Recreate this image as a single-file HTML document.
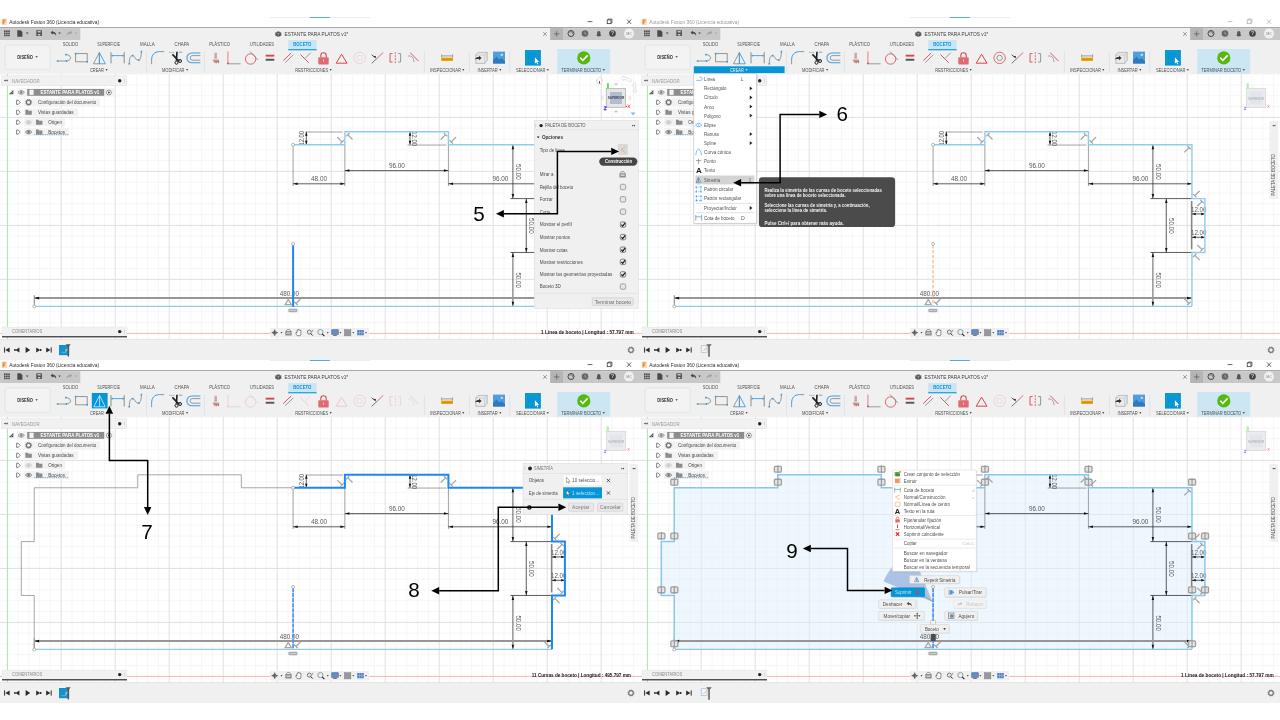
<!DOCTYPE html>
<html lang="es"><head><meta charset="utf-8"><title>Fusion 360 - Simetria</title>
<style>
html,body{margin:0;padding:0;background:#fff;}
body{width:1280px;height:720px;overflow:hidden;font-family:"Liberation Sans", sans-serif;}
svg{display:block;}
svg text{font-family:"Liberation Sans", sans-serif;}
svg{filter:blur(0.5px);will-change:transform;}
</style></head><body>
<svg width="1280" height="720" viewBox="0 0 1280 720">
<g id="all"><rect width="1280" height="720" fill="#ffffff"/><g transform="translate(0 0)"><rect x="0.00" y="17.00" width="640.00" height="10.50" fill="#ffffff"/><line x1="270.00" y1="17.50" x2="370.00" y2="17.50" stroke="#e4e8ee" stroke-width="0.8"/><line x1="309.80" y1="17.50" x2="329.90" y2="17.50" stroke="#5aa6ea" stroke-width="1.0"/><rect x="1.60" y="18.60" width="5.20" height="6.40" fill="#fbd9b5" rx="0.6"/><path d="M3.2 24.2V20h2.6M3.2 22.1h2" fill="none" stroke="#e8761c" stroke-width="1.0"/><text x="9.20" y="24.12" font-size="5.6" fill="#2b2b2b" textLength="89.80" lengthAdjust="spacingAndGlyphs">Autodesk Fusion 360 (Licencia educativa)</text><line x1="587.60" y1="21.60" x2="592.40" y2="21.60" stroke="#222" stroke-width="0.7"/><rect x="607.20" y="19.90" width="3.80" height="3.80" fill="none" stroke="#222" stroke-width="0.7"/><path d="M608.2 19.9V19h3.8v3.8h-1" fill="none" stroke="#222" stroke-width="0.6"/><path d="M627 19.5l4.2 4.4M631.2 19.5l-4.2 4.4" fill="none" stroke="#222" stroke-width="0.7"/><rect x="0.00" y="27.00" width="640.00" height="1.20" fill="#a9a9a9"/><rect x="0.00" y="28.00" width="640.00" height="46.00" fill="#f0f0f0"/><rect x="0.00" y="28.20" width="80.30" height="11.80" fill="#c8c8c8"/><rect x="550.30" y="28.20" width="89.70" height="11.80" fill="#c8c8c8"/><rect x="550.30" y="28.20" width="12.70" height="11.80" fill="#b4b4b4"/><rect x="4.00" y="30.40" width="1.60" height="1.60" fill="#4a4a4a"/><rect x="4.00" y="32.50" width="1.60" height="1.60" fill="#4a4a4a"/><rect x="4.00" y="34.60" width="1.60" height="1.60" fill="#4a4a4a"/><rect x="6.10" y="30.40" width="1.60" height="1.60" fill="#4a4a4a"/><rect x="6.10" y="32.50" width="1.60" height="1.60" fill="#4a4a4a"/><rect x="6.10" y="34.60" width="1.60" height="1.60" fill="#4a4a4a"/><rect x="8.20" y="30.40" width="1.60" height="1.60" fill="#4a4a4a"/><rect x="8.20" y="32.50" width="1.60" height="1.60" fill="#4a4a4a"/><rect x="8.20" y="34.60" width="1.60" height="1.60" fill="#4a4a4a"/><path d="M17.3 30.2h3.2l1.9 1.9v4.7h-5.1z" fill="#4a4a4a"/><path d="M25.90 32.58H28.50L27.20 34.27Z" fill="#4a4a4a"/><rect x="36.30" y="30.30" width="5.60" height="5.80" fill="#4a4a4a" rx="0.5"/><rect x="37.50" y="30.90" width="3.20" height="1.60" fill="#c8c8c8"/><rect x="37.80" y="33.90" width="2.60" height="1.60" fill="#c8c8c8"/><path d="M50.6 32.6l2.2-2v1.2c2.6 0 3.6 1.6 3.3 4.2c-.5-1.7-1.5-2.3-3.3-2.3v1.1z" fill="#4a4a4a"/><path d="M58.30 32.58H60.90L59.60 34.27Z" fill="#4a4a4a"/><path d="M72.3 32.6l-2.2-2v1.2c-2.6 0-3.6 1.6-3.3 4.2c.5-1.7 1.5-2.3 3.3-2.3v1.1z" fill="#a3a3a3"/><path d="M74.80 32.58H77.40L76.10 34.27Z" fill="#a3a3a3"/><path d="M275.3 32.4l3-1.2 3 1.2v3.2l-3 1.4-3-1.4z" fill="#555"/><path d="M275.3 32.4l3 1.2 3-1.2M278.3 33.6V37" fill="none" stroke="#ddd" stroke-width="0.4"/><text x="284.60" y="36.24" font-size="5.4" fill="#3c3c3c" textLength="63.60" lengthAdjust="spacingAndGlyphs">ESTANTE PARA PLATOS v1*</text><path d="M543.2 32.1l3.6 3.8M546.8 32.1l-3.6 3.8" fill="none" stroke="#666" stroke-width="0.6"/><path d="M554 33.9h5.4M556.7 31.2v5.4" fill="none" stroke="#6a6a6a" stroke-width="0.9"/><circle cx="571.00" cy="33.50" r="3.00" fill="none" stroke="#444" stroke-width="1.0"/><path d="M569.5 32.4a2 2 0 0 1 3.4 1.6" fill="none" stroke="#444" stroke-width="0.7"/><circle cx="585.00" cy="33.50" r="3.30" fill="#666"/><path d="M585 31.7v2l1.4.6" fill="none" stroke="#c8c8c8" stroke-width="0.6"/><path d="M596.2 36h5.2c-1-1-.9-2-.9-3.2a1.7 1.7 0 0 0-3.4 0c0 1.2.1 2.2-.9 3.2zM598 36.4h1.6v.6h-1.6z" fill="#555"/><circle cx="612.50" cy="33.50" r="3.30" fill="#444"/><text x="612.50" y="35.40" font-size="5" fill="#d8d8d8" font-weight="bold" text-anchor="middle">?</text><circle cx="629.00" cy="33.60" r="5.00" fill="#efefef"/><text x="629.00" y="35.00" font-size="3.6" fill="#888" text-anchor="middle">MC</text><text x="62.65" y="46.20" font-size="5.0" fill="#505050" textLength="15.50" lengthAdjust="spacingAndGlyphs">SOLIDO</text><text x="97.20" y="46.20" font-size="5.0" fill="#505050" textLength="22.80" lengthAdjust="spacingAndGlyphs">SUPERFICIE</text><text x="140.10" y="46.20" font-size="5.0" fill="#505050" textLength="14.60" lengthAdjust="spacingAndGlyphs">MALLA</text><text x="174.60" y="46.20" font-size="5.0" fill="#505050" textLength="14.60" lengthAdjust="spacingAndGlyphs">CHAPA</text><text x="209.20" y="46.20" font-size="5.0" fill="#505050" textLength="20.80" lengthAdjust="spacingAndGlyphs">PLÁSTICO</text><text x="249.90" y="46.20" font-size="5.0" fill="#505050" textLength="24.00" lengthAdjust="spacingAndGlyphs">UTILIDADES</text><rect x="288.20" y="40.20" width="28.40" height="9.20" fill="#cbe4f3"/><rect x="288.20" y="49.20" width="28.40" height="1.10" fill="#0696d7"/><text x="293.20" y="46.20" font-size="5.0" fill="#0696d7" font-weight="bold" textLength="18.20" lengthAdjust="spacingAndGlyphs">BOCETO</text><rect x="5.20" y="45.00" width="45.00" height="24.40" fill="#f3f3f3" stroke="#dcdcdc" stroke-width="0.6" rx="2"/><text x="17.30" y="58.57" font-size="5.2" fill="#333" font-weight="bold" textLength="15.70" lengthAdjust="spacingAndGlyphs">DISEÑO</text><path d="M35.40 56.24H37.80L36.60 57.80Z" fill="#333"/><path d="M58 61h8.6M65.6 54.6c2.6 0 4.9 1.3 4.9 3.2s-2 3.2-4.4 3.2" fill="none" stroke="#8c8c8c" stroke-width="0.9"/><rect x="56.80" y="60.20" width="1.60" height="1.60" fill="#3a9fe6"/><rect x="65.60" y="60.20" width="1.60" height="1.60" fill="#3a9fe6"/><rect x="65.00" y="53.80" width="1.60" height="1.60" fill="#3a9fe6"/><rect x="75.60" y="53.60" width="11.60" height="8.20" fill="none" stroke="#8c8c8c" stroke-width="0.9"/><rect x="74.80" y="52.80" width="1.60" height="1.60" fill="#3a9fe6"/><rect x="86.40" y="61.00" width="1.60" height="1.60" fill="#3a9fe6"/><path d="M99.4 52.6l-6 11.2h6z" fill="none" stroke="#8c8c8c" stroke-width="0.9"/><path d="M99.4 52.6l6 11.2h-6z" fill="none" stroke="#3a9fe6" stroke-width="0.9"/><path d="M111 52.2v11.2M124.2 52.2v11.2" fill="none" stroke="#8c8c8c" stroke-width="1.0"/><path d="M112 55.6h11.4" fill="none" stroke="#3a9fe6" stroke-width="0.9"/><rect x="111.40" y="54.90" width="1.50" height="1.50" fill="#3a9fe6"/><rect x="122.40" y="54.90" width="1.50" height="1.50" fill="#3a9fe6"/><path d="M129.3 63.6c0-6 1.2-8 3.4-8s2.6 4.6 5.4 4.6 3.2-5 3.3-8.6" fill="none" stroke="#8c8c8c" stroke-width="0.9"/><rect x="128.50" y="63.00" width="1.60" height="1.60" fill="#3a9fe6"/><rect x="131.80" y="54.80" width="1.60" height="1.60" fill="#3a9fe6"/><rect x="138.00" y="59.40" width="1.60" height="1.60" fill="#3a9fe6"/><rect x="140.60" y="50.80" width="1.60" height="1.60" fill="#3a9fe6"/><path d="M151.6 64.2v-4.4" fill="none" stroke="#8c8c8c" stroke-width="0.9"/><path d="M151.6 60c0-5 2.6-8.4 8-8.4" fill="none" stroke="#3a9fe6" stroke-width="1.0"/><path d="M159.6 51.6h4.6" fill="none" stroke="#8c8c8c" stroke-width="0.9"/><path d="M169.2 52.4h5" fill="none" stroke="#3a9fe6" stroke-width="0.8" stroke-dasharray="1.2 0.8"/><path d="M178.8 52.2h3.6" fill="none" stroke="#8c8c8c" stroke-width="0.8"/><path d="M177 51.8l-.6 9M172.4 54.4l6.8 7" fill="none" stroke="#1e1e1e" stroke-width="1.6"/><circle cx="176.50" cy="62.70" r="1.50" fill="none" stroke="#1e1e1e" stroke-width="1.0"/><circle cx="180.00" cy="61.00" r="1.50" fill="none" stroke="#1e1e1e" stroke-width="1.0"/><path d="M200.4 53h-8.6a4.9 4.9 0 0 0 0 9.8h8.6" fill="none" stroke="#3a9fe6" stroke-width="1.1"/><path d="M200.4 55.6h-8a2.3 2.3 0 0 0 0 4.6h8" fill="none" stroke="#8c8c8c" stroke-width="0.9"/><rect x="214.40" y="52.60" width="2.60" height="6.20" fill="#c9c9c9"/><path d="M214.6 54.2h2.2M214.6 56h2.2M214.6 57.6h2.2" fill="none" stroke="#d9464d" stroke-width="0.5"/><path d="M212.8 60.2h6.2" fill="none" stroke="#555" stroke-width="0.7"/><path d="M212.8 61.2h6.6l-.8 2.2-.9-1.6-.9 1.6-.9-1.6-.9 1.6-.9-1.6z" fill="#d9464d"/><path d="M227.9 51.6v12.4" fill="none" stroke="#e58f95" stroke-width="1.2"/><path d="M228 63.7h12.6" fill="none" stroke="#b4b4b4" stroke-width="1.5"/><rect x="227.10" y="62.60" width="1.60" height="1.60" fill="#d9464d"/><circle cx="250.60" cy="59.00" r="5.20" fill="none" stroke="#d9464d" stroke-width="0.8"/><path d="M250 51.4l8 8.6" fill="none" stroke="#8c8c8c" stroke-width="0.8"/><rect x="265.70" y="54.70" width="8.60" height="1.90" fill="#d9464d"/><rect x="265.70" y="58.80" width="8.60" height="1.90" fill="#555"/><path d="M283.2 60.6l8-7.6" fill="none" stroke="#d9464d" stroke-width="0.9"/><path d="M285.2 62.6l8-7.6" fill="none" stroke="#8c8c8c" stroke-width="0.9"/><path d="M300.4 54.4l8.4 8.4" fill="none" stroke="#d9464d" stroke-width="0.9"/><path d="M304.8 58.6l6-6" fill="none" stroke="#8c8c8c" stroke-width="0.9"/><path d="M320.8 57.2v-1.8a2.7 2.7 0 0 1 5.4 0v1.8" fill="none" stroke="#d9464d" stroke-width="1.1"/><rect x="318.30" y="57.20" width="10.40" height="7.40" fill="#df6a70" rx="0.8"/><rect x="323.10" y="59.40" width="0.80" height="2.40" fill="#f6d6d8"/><path d="M341.6 54.2l5.4 9h-10.8z" fill="none" stroke="#d9464d" stroke-width="1.0"/><circle cx="359.60" cy="57.90" r="5.70" fill="none" stroke="#f1c4c6" stroke-width="0.7"/><circle cx="359.60" cy="57.90" r="2.70" fill="none" stroke="#dedede" stroke-width="0.9"/><path d="M377.4 58l5.8-5.6" fill="none" stroke="#d9464d" stroke-width="0.8"/><path d="M371.6 63.4l5.8-5.4" fill="none" stroke="#555" stroke-width="0.8"/><path d="M371.6 54.8l3 2.4" fill="none" stroke="#222" stroke-width="0.7"/><path d="M373.4 55.8l2.6.4-.6 2.4z" fill="#222"/><path d="M392.6 53.6h-2.6v8.4h2.6" fill="none" stroke="#d9464d" stroke-width="0.9"/><path d="M398 53.6h2.6v8.4h-2.6" fill="none" stroke="#8c8c8c" stroke-width="0.9"/><path d="M395.3 52v12" fill="none" stroke="#d9464d" stroke-width="0.7" stroke-dasharray="2.2 0.8"/><path d="M410.2 52.6l8.2 8.4" fill="none" stroke="#d9464d" stroke-width="0.9"/><path d="M408.2 56c3.4-.4 5.6 1.6 5.8 6.2" fill="none" stroke="#8c8c8c" stroke-width="0.8"/><rect x="441.30" y="57.60" width="11.60" height="3.40" fill="#f0a30a"/><rect x="441.30" y="58.80" width="11.60" height="0.70" fill="#c97f00"/><path d="M441.6 54.4v3M452.6 54.4v3M442 55.9h10.2" fill="none" stroke="#666" stroke-width="0.6"/><path d="M478 52.4h9.2v8l-2.6 3h-8.8v-8.6z" fill="#e9e9e9" stroke="#9a9a9a" stroke-width="0.6"/><path d="M475.8 55h9v8.4M484.8 55l2.4-2.6" fill="none" stroke="#b5b5b5" stroke-width="0.5"/><path d="M475 59.2c1-1.8 2.4-2.2 4-2.2v-1.2l2.6 2.2-2.6 2.2v-1.2c-1.6 0-2.8.2-4 .2z" fill="#333"/><rect x="493.00" y="51.60" width="12.00" height="12.00" fill="#4d9fe0"/><path d="M493 63.6v-3.4l3.4-3.6 3 3 2-1.6 3.6 3.2v2.4z" fill="#2f79bb"/><circle cx="501.80" cy="54.80" r="1.10" fill="#fbe9a6"/><rect x="525.00" y="50.00" width="15.90" height="15.60" fill="#0696d7"/><rect x="526.60" y="51.60" width="10.60" height="9.40" fill="none" stroke="#38c17a" stroke-width="0.6" stroke-dasharray="0.9 0.9"/><path d="M534.9 57.2v6.4l1.5-1.3 1 2.2.9-.4-1-2.1h1.9z" fill="#fff"/><rect x="557.20" y="49.00" width="53.00" height="25.00" fill="#cde6f4"/><circle cx="583.80" cy="57.90" r="6.60" fill="#57b811"/><path d="M580.2 57.8l2.6 2.6 4.8-5" fill="none" stroke="#fff" stroke-width="1.6"/><text x="89.90" y="71.74" font-size="5.1" fill="#505050" textLength="14.00" lengthAdjust="spacingAndGlyphs">CREAR</text><path d="M105.50 69.30H107.70L106.60 70.73Z" fill="#222"/><text x="161.90" y="71.74" font-size="5.1" fill="#505050" textLength="22.60" lengthAdjust="spacingAndGlyphs">MODIFICAR</text><path d="M186.00 69.30H188.20L187.10 70.73Z" fill="#222"/><text x="295.30" y="71.74" font-size="5.1" fill="#505050" textLength="32.80" lengthAdjust="spacingAndGlyphs">RESTRICCIONES</text><path d="M329.60 69.30H331.80L330.70 70.73Z" fill="#222"/><text x="430.00" y="71.74" font-size="5.1" fill="#505050" textLength="30.90" lengthAdjust="spacingAndGlyphs">INSPECCIONAR</text><path d="M462.20 69.30H464.40L463.30 70.73Z" fill="#222"/><text x="477.50" y="71.74" font-size="5.1" fill="#505050" textLength="20.20" lengthAdjust="spacingAndGlyphs">INSERTAR</text><path d="M499.20 69.30H501.40L500.30 70.73Z" fill="#222"/><text x="516.00" y="71.74" font-size="5.1" fill="#505050" textLength="29.40" lengthAdjust="spacingAndGlyphs">SELECCIONAR</text><path d="M546.70 69.30H548.90L547.80 70.73Z" fill="#222"/><text x="561.30" y="71.74" font-size="5.1" fill="#505050" textLength="40.00" lengthAdjust="spacingAndGlyphs">TERMINAR BOCETO</text><path d="M602.70 69.30H604.90L603.80 70.73Z" fill="#222"/><line x1="146.50" y1="51.40" x2="146.50" y2="72.20" stroke="#dedede" stroke-width="0.7"/><line x1="204.40" y1="51.40" x2="204.40" y2="72.20" stroke="#dedede" stroke-width="0.7"/><line x1="424.40" y1="51.40" x2="424.40" y2="72.20" stroke="#dedede" stroke-width="0.7"/><line x1="469.40" y1="51.40" x2="469.40" y2="72.20" stroke="#dedede" stroke-width="0.7"/><line x1="509.80" y1="51.40" x2="509.80" y2="72.20" stroke="#dedede" stroke-width="0.7"/><g><rect x="0.00" y="74.00" width="640.00" height="265.50" fill="#ffffff"/><path d="M18.0 74V339.5M28.8 74V339.5M39.6 74V339.5M50.4 74V339.5M72.0 74V339.5M82.8 74V339.5M93.6 74V339.5M104.4 74V339.5M126.0 74V339.5M136.8 74V339.5M147.6 74V339.5M158.4 74V339.5M180.0 74V339.5M190.8 74V339.5M201.6 74V339.5M212.4 74V339.5M234.0 74V339.5M244.8 74V339.5M255.6 74V339.5M266.4 74V339.5M288.0 74V339.5M298.8 74V339.5M309.6 74V339.5M320.4 74V339.5M342.0 74V339.5M352.8 74V339.5M363.6 74V339.5M374.4 74V339.5M396.0 74V339.5M406.8 74V339.5M417.6 74V339.5M428.4 74V339.5M450.0 74V339.5M460.8 74V339.5M471.6 74V339.5M482.4 74V339.5M504.0 74V339.5M514.8 74V339.5M525.6 74V339.5M536.4 74V339.5M558.0 74V339.5M568.8 74V339.5M579.6 74V339.5M590.4 74V339.5M612.0 74V339.5M622.8 74V339.5M633.6 74V339.5M0 322.6H640M0 311.8H640M0 301.0H640M0 290.2H640M0 268.6H640M0 257.8H640M0 247.0H640M0 236.2H640M0 214.6H640M0 203.8H640M0 193.0H640M0 182.2H640M0 160.6H640M0 149.8H640M0 139.0H640M0 128.2H640M0 106.6H640M0 95.8H640M0 85.0H640M0 74.2H640" fill="none" stroke="#f5f5f5" stroke-width="0.9"/><path d="M61.2 74V339.5M115.2 74V339.5M169.2 74V339.5M223.2 74V339.5M277.2 74V339.5M331.2 74V339.5M385.2 74V339.5M439.2 74V339.5M493.2 74V339.5M547.2 74V339.5M601.2 74V339.5M0 279.4H640M0 225.4H640M0 171.4H640M0 117.4H640" fill="none" stroke="#e0e0e0" stroke-width="1.0"/><line x1="7.40" y1="74.00" x2="7.40" y2="339.50" stroke="#a8eca8" stroke-width="1.1"/><line x1="0.00" y1="333.40" x2="640.00" y2="333.40" stroke="#f6b4b4" stroke-width="1.0"/><rect x="1.60" y="75.80" width="125.20" height="9.90" fill="#f1f1f1" stroke="#e2e2e2" stroke-width="0.5"/><path d="M5.6 79.6v2l-1.6-1zM7.6 79.6v2l-1.6-1z" fill="#222"/><text x="12.00" y="82.54" font-size="5.1" fill="#9a9a9a" textLength="27.60" lengthAdjust="spacingAndGlyphs">NAVEGADOR</text><circle cx="119.70" cy="80.80" r="1.70" fill="#222"/><rect x="124.30" y="78.80" width="0.70" height="3.80" fill="#d0d0d0"/><rect x="17.00" y="88.20" width="98.20" height="8.40" fill="#f3f3f3"/><path d="M8.8 94.2h4.6v-4.4z" fill="#555"/><path d="M9.6 93.2l3.4-3.2M10.8 94l2.4-2.2" fill="none" stroke="#ddd" stroke-width="0.4"/><path d="M18.0 92.4q3.2-3.6 6.4 0q-3.2 3.6-6.4 0z" fill="none" stroke="#8a8a8a" stroke-width="0.9"/><circle cx="21.20" cy="92.40" r="1.35" fill="#8a8a8a"/><rect x="27.20" y="89.00" width="77.00" height="6.80" fill="#8c8c8c"/><rect x="29.40" y="89.70" width="4.20" height="5.20" fill="#f4f4f4" stroke="#d0d0d0" stroke-width="0.4" rx="0.6"/><text x="40.60" y="94.30" font-size="5.0" fill="#fff" font-weight="bold" textLength="58.60" lengthAdjust="spacingAndGlyphs">ESTANTE PARA PLATOS v1</text><circle cx="108.90" cy="92.50" r="2.50" fill="#fff" stroke="#555" stroke-width="0.6"/><circle cx="108.90" cy="92.50" r="0.90" fill="#333"/><rect x="24.20" y="98.40" width="75.80" height="7.80" fill="#f2f2f2"/><path d="M16.6 100.2v4.2l1.6 0l2-2.1l-2-2.1z" fill="none" stroke="#555" stroke-width="0.7"/><circle cx="28.60" cy="102.30" r="2.20" fill="none" stroke="#777" stroke-width="1.3"/><circle cx="28.60" cy="102.30" r="3.00" fill="none" stroke="#777" stroke-width="0.9" stroke-dasharray="1 1.36"/><text x="38.00" y="104.30" font-size="5.0" fill="#4a4a4a" textLength="58.20" lengthAdjust="spacingAndGlyphs">Configuración del documento</text><rect x="24.20" y="108.40" width="54.00" height="7.80" fill="#f2f2f2"/><path d="M16.6 110.2v4.2l1.6 0l2-2.1l-2-2.1z" fill="none" stroke="#555" stroke-width="0.7"/><path d="M25.4 114.8v-5h2.4l.7.9h3.3v4.1z" fill="#8a8a8a"/><line x1="28.50" y1="110.70" x2="28.50" y2="114.80" stroke="#a8a8a8" stroke-width="0.4"/><text x="38.00" y="114.30" font-size="5.0" fill="#4a4a4a" textLength="35.60" lengthAdjust="spacingAndGlyphs">Vistas guardadas</text><rect x="24.20" y="118.40" width="40.80" height="7.80" fill="#f2f2f2"/><path d="M16.6 120.2v4.2l1.6 0l2-2.1l-2-2.1z" fill="none" stroke="#555" stroke-width="0.7"/><path d="M25.4 122.3q3.2-3.6 6.4 0q-3.2 3.6-6.4 0z" fill="none" stroke="#c8c8c8" stroke-width="0.9"/><circle cx="28.60" cy="122.30" r="1.35" fill="#c8c8c8"/><path d="M36.0 124.8v-5h2.4l.7.9h3.3v4.1z" fill="#8a8a8a"/><line x1="39.10" y1="120.70" x2="39.10" y2="124.80" stroke="#a8a8a8" stroke-width="0.4"/><text x="48.20" y="124.30" font-size="5.0" fill="#4a4a4a" textLength="13.80" lengthAdjust="spacingAndGlyphs">Origen</text><rect x="24.20" y="128.20" width="44.60" height="7.80" fill="#f2f2f2"/><path d="M16.6 130.0v4.2l1.6 0l2-2.1l-2-2.1z" fill="none" stroke="#555" stroke-width="0.7"/><path d="M25.4 132.1q3.2-3.6 6.4 0q-3.2 3.6-6.4 0z" fill="none" stroke="#777" stroke-width="0.9"/><circle cx="28.60" cy="132.10" r="1.35" fill="#777"/><path d="M36.0 134.6v-5h2.4l.7.9h3.3v4.1z" fill="#8a8a8a"/><line x1="39.10" y1="130.50" x2="39.10" y2="134.60" stroke="#a8a8a8" stroke-width="0.4"/><text x="48.20" y="134.10" font-size="5.0" fill="#4a4a4a" textLength="16.80" lengthAdjust="spacingAndGlyphs">Bocetos</text><line x1="34.40" y1="134.60" x2="68.80" y2="134.60" stroke="#3c6cc8" stroke-width="0.7" stroke-dasharray="0.9 0.9"/><line x1="305.60" y1="132.02" x2="342.60" y2="132.02" stroke="#8a8a8a" stroke-width="0.8"/><line x1="306.30" y1="131.82" x2="306.30" y2="144.75" stroke="#1c1c1c" stroke-width="0.7"/><path d="M306.30 132.12l-1.25 3.60h2.50z" fill="#111"/><path d="M306.30 144.45l-1.25 -3.60h2.50z" fill="#111"/><text transform="translate(301.60 138.20) rotate(-90)" x="-7.30" y="2.45" font-size="6.8" fill="#555" textLength="14.60" lengthAdjust="spacingAndGlyphs">12.00</text><line x1="407.60" y1="145.05" x2="446.40" y2="145.05" stroke="#8a8a8a" stroke-width="0.8"/><line x1="410.00" y1="131.82" x2="410.00" y2="144.75" stroke="#1c1c1c" stroke-width="0.7"/><path d="M410.00 132.12l-1.25 3.60h2.50z" fill="#111"/><path d="M410.00 144.45l-1.25 -3.60h2.50z" fill="#111"/><text transform="translate(414.30 138.60) rotate(90)" x="-7.30" y="2.45" font-size="6.8" fill="#555" textLength="14.60" lengthAdjust="spacingAndGlyphs">12.00</text><line x1="293.10" y1="146.35" x2="293.10" y2="186.00" stroke="#8a8a8a" stroke-width="0.8"/><line x1="344.87" y1="144.75" x2="344.87" y2="186.00" stroke="#8a8a8a" stroke-width="0.8"/><line x1="293.10" y1="183.80" x2="344.87" y2="183.80" stroke="#1c1c1c" stroke-width="0.7"/><path d="M293.40 183.80l4.20 -1.25v2.50z" fill="#111"/><path d="M344.57 183.80l-4.20 -1.25v2.50z" fill="#111"/><text x="311.00" y="181.25" font-size="6.8" fill="#5a5a5a" textLength="16.00" lengthAdjust="spacingAndGlyphs">48.00</text><line x1="448.42" y1="144.75" x2="448.42" y2="186.00" stroke="#8a8a8a" stroke-width="0.8"/><line x1="344.87" y1="170.60" x2="448.42" y2="170.60" stroke="#1c1c1c" stroke-width="0.7"/><path d="M345.17 170.60l4.20 -1.25v2.50z" fill="#111"/><path d="M448.12 170.60l-4.20 -1.25v2.50z" fill="#111"/><text x="388.90" y="168.45" font-size="6.8" fill="#5a5a5a" textLength="16.00" lengthAdjust="spacingAndGlyphs">96.00</text><line x1="448.42" y1="183.80" x2="551.96" y2="183.80" stroke="#1c1c1c" stroke-width="0.7"/><path d="M448.72 183.80l4.20 -1.25v2.50z" fill="#111"/><path d="M551.66 183.80l-4.20 -1.25v2.50z" fill="#111"/><text x="492.40" y="181.25" font-size="6.8" fill="#5a5a5a" textLength="16.00" lengthAdjust="spacingAndGlyphs">96.00</text><line x1="512.90" y1="144.75" x2="512.90" y2="198.60" stroke="#1c1c1c" stroke-width="0.7"/><path d="M512.90 145.05l-1.25 4.20h2.50z" fill="#111"/><path d="M512.90 198.30l-1.25 -4.20h2.50z" fill="#111"/><text transform="translate(518.00 171.80) rotate(90)" x="-7.80" y="2.45" font-size="6.8" fill="#555" textLength="15.60" lengthAdjust="spacingAndGlyphs">50.00</text><line x1="526.30" y1="198.60" x2="526.30" y2="252.46" stroke="#1c1c1c" stroke-width="0.7"/><path d="M526.30 198.91l-1.25 4.20h2.50z" fill="#111"/><path d="M526.30 252.16l-1.25 -4.20h2.50z" fill="#111"/><text transform="translate(531.50 225.80) rotate(90)" x="-7.80" y="2.45" font-size="6.8" fill="#555" textLength="15.60" lengthAdjust="spacingAndGlyphs">50.00</text><line x1="512.90" y1="252.46" x2="512.90" y2="306.31" stroke="#1c1c1c" stroke-width="0.7"/><path d="M512.90 252.76l-1.25 4.20h2.50z" fill="#111"/><path d="M512.90 306.01l-1.25 -4.20h2.50z" fill="#111"/><text transform="translate(518.00 280.20) rotate(90)" x="-7.80" y="2.45" font-size="6.8" fill="#555" textLength="15.60" lengthAdjust="spacingAndGlyphs">50.00</text><line x1="510.40" y1="198.60" x2="551.96" y2="198.60" stroke="#333" stroke-width="0.8"/><line x1="510.40" y1="252.46" x2="551.96" y2="252.46" stroke="#333" stroke-width="0.8"/><line x1="551.66" y1="201.00" x2="551.66" y2="249.40" stroke="#858585" stroke-width="1.6"/><text x="551.00" y="211.65" font-size="6.8" fill="#5a5a5a" textLength="15.40" lengthAdjust="spacingAndGlyphs">12.00</text><line x1="551.96" y1="213.90" x2="564.91" y2="213.90" stroke="#1c1c1c" stroke-width="0.7"/><path d="M552.26 213.90l3.40 -1.25v2.50z" fill="#111"/><path d="M564.61 213.90l-3.40 -1.25v2.50z" fill="#111"/><text x="551.00" y="235.05" font-size="6.8" fill="#5a5a5a" textLength="15.40" lengthAdjust="spacingAndGlyphs">12.00</text><line x1="551.96" y1="237.30" x2="564.91" y2="237.30" stroke="#1c1c1c" stroke-width="0.7"/><path d="M552.26 237.30l3.40 -1.25v2.50z" fill="#111"/><path d="M564.61 237.30l-3.40 -1.25v2.50z" fill="#111"/><line x1="34.24" y1="295.20" x2="34.24" y2="306.31" stroke="#777" stroke-width="0.9"/><line x1="34.24" y1="298.00" x2="551.96" y2="298.00" stroke="#969696" stroke-width="1.9"/><path d="M34.54 298.10l4.60 -1.40v2.80z" fill="#111"/><path d="M551.66 298.10l-4.60 -1.40v2.80z" fill="#111"/><text x="279.80" y="295.85" font-size="6.8" fill="#5a5a5a" textLength="19.20" lengthAdjust="spacingAndGlyphs">480.00</text><line x1="34.24" y1="306.31" x2="551.96" y2="306.31" stroke="#8fcdf0" stroke-width="1.3"/><path d="M293.10 144.75L344.87 144.75L344.87 131.82L448.42 131.82L448.42 144.75L551.96 144.75L551.96 198.60L564.91 198.60L564.91 252.46L551.96 252.46L551.96 306.31" fill="none" stroke="#8fcdf0" stroke-width="1.4"/><g transform="translate(342.02 141.90) rotate(135.0)"><path d="M-2.4 0h4.8M0 0v6.8" fill="none" stroke="#a2a2a2" stroke-width="1.2"/></g><g transform="translate(347.72 134.67) rotate(-45.0)"><path d="M-2.4 0h4.8M0 0v6.8" fill="none" stroke="#a2a2a2" stroke-width="1.2"/></g><g transform="translate(445.57 134.67) rotate(45.0)"><path d="M-2.4 0h4.8M0 0v6.8" fill="none" stroke="#a2a2a2" stroke-width="1.2"/></g><g transform="translate(451.27 141.90) rotate(-135.0)"><path d="M-2.4 0h4.8M0 0v6.8" fill="none" stroke="#a2a2a2" stroke-width="1.2"/></g><g transform="translate(549.11 147.60) rotate(45.0)"><path d="M-2.4 0h4.8M0 0v6.8" fill="none" stroke="#a2a2a2" stroke-width="1.2"/></g><g transform="translate(554.81 195.75) rotate(-135.0)"><path d="M-2.4 0h4.8M0 0v6.8" fill="none" stroke="#a2a2a2" stroke-width="1.2"/></g><g transform="translate(562.06 201.45) rotate(45.0)"><path d="M-2.4 0h4.8M0 0v6.8" fill="none" stroke="#a2a2a2" stroke-width="1.2"/></g><g transform="translate(562.06 249.61) rotate(135.0)"><path d="M-2.4 0h4.8M0 0v6.8" fill="none" stroke="#a2a2a2" stroke-width="1.2"/></g><g transform="translate(554.81 255.31) rotate(-45.0)"><path d="M-2.4 0h4.8M0 0v6.8" fill="none" stroke="#a2a2a2" stroke-width="1.2"/></g><g transform="translate(549.11 303.46) rotate(135.0)"><path d="M-2.4 0h4.8M0 0v6.8" fill="none" stroke="#a2a2a2" stroke-width="1.2"/></g><path d="M288.2 299.4l-3.1 5.3h6.2z" fill="none" stroke="#a8a8a8" stroke-width="1.3"/><g transform="translate(295.95 303.46) rotate(-135.0)"><path d="M-2.4 0h4.8M0 0v6.8" fill="none" stroke="#a2a2a2" stroke-width="1.2"/></g><rect x="288.40" y="308.80" width="9.00" height="3.40" fill="#a9a9a9" rx="0.9"/><line x1="289.40" y1="310.50" x2="296.40" y2="310.50" stroke="#e4e4e4" stroke-width="0.6"/><line x1="293.10" y1="244.40" x2="293.10" y2="306.71" stroke="#1c86f2" stroke-width="2.0"/><circle cx="293.10" cy="144.75" r="1.50" fill="#fff" stroke="#8a8a8a" stroke-width="0.6"/><circle cx="34.24" cy="306.51" r="1.50" fill="#fff" stroke="#8a8a8a" stroke-width="0.6"/><circle cx="293.10" cy="243.90" r="1.50" fill="#fff" stroke="#8a8a8a" stroke-width="0.6"/><path d="M597.2 83.6v-3.2l-1.2.1 3.5-3.4 3.5 3.4-1.2-.1v3.2z" fill="#fff" stroke="#c4c4c4" stroke-width="0.6"/><rect x="599.00" y="81.20" width="1.00" height="2.20" fill="#444"/><path d="M621.4 78.2l2.2-2v1c3 .2 6.2 1.2 8.2 3l-1.4 1.8c-1.8-1.6-4.4-2.4-6.8-2.6v1z" fill="#fff" stroke="#d2d2d2" stroke-width="0.6"/><path d="M634.4 82l1.8 2.2-1 .2c.8 2.4.8 4.6.4 6.8l1 .4-2.4 1.6-1.4-2.6 1 .2c.4-1.8.2-3.8-.4-5.8l-1 .4z" fill="#fff" stroke="#d2d2d2" stroke-width="0.6"/><path d="M613.8 83.6h4.4l-2.2 2z" fill="#bdbdbd"/><path d="M613.8 112.2h4.4l-2.2-2z" fill="#bdbdbd"/><path d="M601.6 95.8v4.4l2-2.2z" fill="#fafafa" stroke="#cfcfcf" stroke-width="0.5"/><path d="M630.6 95.8v4.4l-2-2.2z" fill="#fafafa" stroke="#cfcfcf" stroke-width="0.5"/><rect x="606.30" y="88.40" width="19.30" height="18.90" fill="#e6e6e6" stroke="#b4b4b4" stroke-width="0.8"/><rect x="610.00" y="92.00" width="12.00" height="12.00" fill="#b3bdd2"/><text x="607.80" y="99.30" font-size="3.6" fill="#39404f" font-weight="bold" textLength="16.40" lengthAdjust="spacingAndGlyphs">SUPERIOR</text><rect x="606.90" y="83.20" width="2.00" height="5.20" fill="#56e356"/><path d="M603.8 106.8h2.6l-2.4 3h2.6" fill="none" stroke="#2424ff" stroke-width="1.0"/><circle cx="626.40" cy="106.40" r="0.70" fill="#e33"/><path d="M627.6 104.6l2.4 3.4M630 104.6l-2.4 3.4" fill="none" stroke="#ff5c5c" stroke-width="0.9"/><path d="M630.6 112.6h5l-2.5 2.6z" fill="#7fb5ea"/><rect x="534.30" y="120.50" width="104.10" height="187.80" fill="#f0f0f0" stroke="#dedede" stroke-width="0.6"/><line x1="534.30" y1="129.80" x2="638.40" y2="129.80" stroke="#dcdcdc" stroke-width="0.6"/><rect x="535.40" y="123.60" width="0.70" height="3.80" fill="#c8c8c8"/><circle cx="541.10" cy="125.60" r="1.70" fill="#222"/><text x="545.00" y="127.46" font-size="4.9" fill="#555" textLength="40.60" lengthAdjust="spacingAndGlyphs">PALETA DE BOCETO</text><path d="M632.4 125.6l1.3-.8v1.6zM634 125.6l1.3-.8v1.6z" fill="#222" transform="rotate(180 633.8 125.6)"/><path d="M536.80 136.43H539.60L538.20 138.25Z" fill="#222"/><text x="541.90" y="139.17" font-size="5.2" fill="#333" font-weight="bold" textLength="21.10" lengthAdjust="spacingAndGlyphs">Opciones</text><text x="539.70" y="151.50" font-size="5.0" fill="#4a4a4a" textLength="25.10" lengthAdjust="spacingAndGlyphs">Tipo de línea</text><rect x="618.00" y="144.00" width="9.80" height="11.00" fill="#d9d9d9"/><path d="M625.6 146.4l-4.6 3.2 4.6 3.2" fill="none" stroke="#f0a45c" stroke-width="0.6"/><path d="M621 149.6h4" fill="none" stroke="#f0a45c" stroke-width="0.5" stroke-dasharray="0.8 0.6"/><rect x="599.20" y="157.40" width="38.20" height="8.40" fill="#454545" rx="4.2"/><text x="605.00" y="163.36" font-size="4.9" fill="#fff" font-weight="bold" textLength="27.00" lengthAdjust="spacingAndGlyphs">Construcción</text><text x="539.70" y="176.40" font-size="5.0" fill="#4a4a4a" textLength="13.80" lengthAdjust="spacingAndGlyphs">Mirar a</text><rect x="619.40" y="173.20" width="6.40" height="4.20" fill="#8c8f99" rx="0.5"/><path d="M620.2 173.2l1.2-1.6h2.2l1.2 1.6" fill="none" stroke="#666" stroke-width="0.6"/><rect x="620.60" y="174.40" width="4.00" height="1.50" fill="#d3d6de"/><text x="539.70" y="188.80" font-size="5.0" fill="#4a4a4a" textLength="33.50" lengthAdjust="spacingAndGlyphs">Rejilla del boceto</text><rect x="620.30" y="184.30" width="5.40" height="5.40" fill="#e6e6e6" stroke="#8e8e8e" stroke-width="0.8" rx="1.4"/><text x="539.70" y="201.10" font-size="5.0" fill="#4a4a4a" textLength="13.10" lengthAdjust="spacingAndGlyphs">Forzar</text><rect x="620.30" y="196.60" width="5.40" height="5.40" fill="#e6e6e6" stroke="#8e8e8e" stroke-width="0.8" rx="1.4"/><text x="539.70" y="213.50" font-size="5.0" fill="#4a4a4a" textLength="10.80" lengthAdjust="spacingAndGlyphs">Corte</text><rect x="620.30" y="209.00" width="5.40" height="5.40" fill="#e6e6e6" stroke="#8e8e8e" stroke-width="0.8" rx="1.4"/><text x="539.70" y="226.40" font-size="5.0" fill="#4a4a4a" textLength="32.00" lengthAdjust="spacingAndGlyphs">Mostrar el perfil</text><rect x="620.30" y="221.90" width="5.40" height="5.40" fill="#e6e6e6" stroke="#6a6a6a" stroke-width="0.8" rx="1.4"/><path d="M621.40 224.70l1.3 1.4 2.5-3.3" fill="none" stroke="#1e1e1e" stroke-width="1.25"/><text x="539.70" y="238.90" font-size="5.0" fill="#4a4a4a" textLength="30.30" lengthAdjust="spacingAndGlyphs">Mostrar puntos</text><rect x="620.30" y="234.40" width="5.40" height="5.40" fill="#e6e6e6" stroke="#6a6a6a" stroke-width="0.8" rx="1.4"/><path d="M621.40 237.20l1.3 1.4 2.5-3.3" fill="none" stroke="#1e1e1e" stroke-width="1.25"/><text x="539.70" y="251.50" font-size="5.0" fill="#4a4a4a" textLength="27.90" lengthAdjust="spacingAndGlyphs">Mostrar cotas</text><rect x="620.30" y="247.00" width="5.40" height="5.40" fill="#e6e6e6" stroke="#6a6a6a" stroke-width="0.8" rx="1.4"/><path d="M621.40 249.80l1.3 1.4 2.5-3.3" fill="none" stroke="#1e1e1e" stroke-width="1.25"/><text x="539.70" y="263.70" font-size="5.0" fill="#4a4a4a" textLength="43.10" lengthAdjust="spacingAndGlyphs">Mostrar restricciones</text><rect x="620.30" y="259.20" width="5.40" height="5.40" fill="#e6e6e6" stroke="#6a6a6a" stroke-width="0.8" rx="1.4"/><path d="M621.40 262.00l1.3 1.4 2.5-3.3" fill="none" stroke="#1e1e1e" stroke-width="1.25"/><text x="539.70" y="276.20" font-size="5.0" fill="#4a4a4a" textLength="72.50" lengthAdjust="spacingAndGlyphs">Mostrar las geometrías proyectadas</text><rect x="620.30" y="271.70" width="5.40" height="5.40" fill="#e6e6e6" stroke="#6a6a6a" stroke-width="0.8" rx="1.4"/><path d="M621.40 274.50l1.3 1.4 2.5-3.3" fill="none" stroke="#1e1e1e" stroke-width="1.25"/><text x="539.70" y="288.40" font-size="5.0" fill="#4a4a4a" textLength="21.20" lengthAdjust="spacingAndGlyphs">Boceto 3D</text><rect x="620.30" y="283.90" width="5.40" height="5.40" fill="#e6e6e6" stroke="#8e8e8e" stroke-width="0.8" rx="1.4"/><line x1="534.30" y1="293.30" x2="638.40" y2="293.30" stroke="#dadada" stroke-width="0.6"/><rect x="592.30" y="297.90" width="40.90" height="7.40" fill="#e9e9e9" stroke="#c2c2c2" stroke-width="0.6" rx="0.6"/><text x="594.80" y="303.57" font-size="5.2" fill="#6a6a6a" textLength="36.30" lengthAdjust="spacingAndGlyphs">Terminar boceto</text><rect x="270.20" y="327.90" width="98.80" height="9.60" fill="#f0f0f0"/><path d="M274.7 329.59999999999997v6.2M271.6 332.7h6.2" fill="none" stroke="#4a4a4a" stroke-width="0.9"/><circle cx="274.70" cy="332.70" r="1.70" fill="none" stroke="#4a4a4a" stroke-width="0.7"/><path d="M280.50 332.15H282.50L281.50 333.45Z" fill="#222"/><rect x="285.30" y="331.10" width="6.40" height="4.40" fill="#8c8f99" rx="0.5"/><path d="M286.2 331.09999999999997l1.2-1.6h2.2l1.2 1.6" fill="none" stroke="#666" stroke-width="0.6"/><rect x="286.60" y="332.30" width="3.80" height="1.60" fill="#c9ccd4"/><path d="M297.2 335.7c-1.2-1.4-1.6-2.6-1.2-3.4l1 .6v-2.6h.9v-.7h1v.3h1v.5h1v3.4c0 .9-.4 1.5-.7 1.9z" fill="#fafafa" stroke="#4a4a4a" stroke-width="0.6"/><circle cx="309.30" cy="332.10" r="2.00" fill="#e2edf7" stroke="#4a4a4a" stroke-width="0.7"/><path d="M310.8 333.59999999999997l1.8 1.9" fill="none" stroke="#222" stroke-width="1.0"/><path d="M312.6 329.9v1.8" fill="none" stroke="#4a4a4a" stroke-width="0.5"/><circle cx="320.40" cy="332.10" r="2.60" fill="#e6f0f8" stroke="#777" stroke-width="0.7"/><path d="M322.2 333.9l2.2 2.2" fill="none" stroke="#222" stroke-width="1.1"/><path d="M326.70 332.15H328.70L327.70 333.45Z" fill="#222"/><rect x="331.60" y="329.60" width="6.80" height="5.00" fill="#5b8fd4" stroke="#667" stroke-width="0.6" rx="0.4"/><path d="M333.6 334.7h2.8l.6 1.3h-4z" fill="#777"/><path d="M339.40 332.15H341.40L340.40 333.45Z" fill="#222"/><rect x="344.30" y="329.60" width="6.60" height="6.30" fill="#96989e" stroke="#7a7c82" stroke-width="0.4"/><path d="M352.30 332.15H354.30L353.30 333.45Z" fill="#222"/><rect x="357.20" y="329.90" width="6.60" height="5.40" fill="#4f7fc6" rx="0.3"/><path d="M357.2 332.59999999999997h6.6M359.4 329.9v5.4M361.6 329.9v5.4" fill="none" stroke="#cfdcf0" stroke-width="0.4"/><path d="M365.00 332.15H367.00L366.00 333.45Z" fill="#222"/><text x="541.10" y="334.26" font-size="4.6" fill="#222" font-weight="bold" textLength="92.50" lengthAdjust="spacingAndGlyphs">1 Línea de boceto | Longitud : 57.797 mm</text><rect x="2.00" y="327.00" width="125.00" height="9.40" fill="#f1f1f1" stroke="#e4e4e4" stroke-width="0.4"/><rect x="2.00" y="336.20" width="125.00" height="1.20" fill="#2a2a2a"/><text x="12.00" y="333.33" font-size="4.8" fill="#8a8a8a" textLength="30.20" lengthAdjust="spacingAndGlyphs">COMENTARIOS</text><circle cx="119.70" cy="331.60" r="1.70" fill="#222"/><rect x="124.30" y="329.70" width="0.70" height="3.80" fill="#d0d0d0"/><rect x="0.00" y="339.40" width="640.00" height="20.70" fill="#f0f0f0"/><line x1="0.00" y1="339.40" x2="640.00" y2="339.40" stroke="#dcdcdc" stroke-width="0.7"/><path d="M4.6 347.4v5.2" fill="none" stroke="#2a2a2a" stroke-width="1.0"/><path d="M9.6 347.4v5.2l-4.2-2.6z" fill="#2a2a2a"/><path d="M19.4 347.6v4.8l-4-2.4zM15.6 349.1h-1.4v1.8h1.4z" fill="#2a2a2a"/><path d="M25.6 347.0v6l4.6-3z" fill="#2a2a2a"/><path d="M36.2 347.6v4.8l4-2.4zM40 349.1h1.4v1.8h-1.4z" fill="#2a2a2a"/><path d="M46.2 347.4v5.2l4.2-2.6z" fill="#2a2a2a"/><path d="M51.2 347.4v5.2" fill="none" stroke="#2a2a2a" stroke-width="1.0"/><rect x="59.00" y="345.00" width="10.20" height="10.20" fill="#1591d3"/><path d="M61.4 352.6h4.6v-4.4" fill="none" stroke="#79c2ea" stroke-width="0.6"/><path d="M65 351l2.4-2.6.8.8-2.4 2.6z" fill="#f3c84b"/><path d="M65.6 344.2h5.2l-1.8 2v10.4h-1.4v-10.4z" fill="#555"/><circle cx="631.00" cy="350.00" r="2.30" fill="none" stroke="#777" stroke-width="1.2"/><circle cx="631.00" cy="350.00" r="3.10" fill="none" stroke="#777" stroke-width="0.9" stroke-dasharray="1 1.43"/></g></g><g transform="translate(640 0)"><rect x="0.00" y="17.00" width="640.00" height="10.50" fill="#ffffff"/><line x1="270.00" y1="17.50" x2="370.00" y2="17.50" stroke="#e4e8ee" stroke-width="0.8"/><line x1="309.80" y1="17.50" x2="329.90" y2="17.50" stroke="#5aa6ea" stroke-width="1.0"/><rect x="1.60" y="18.60" width="5.20" height="6.40" fill="#fbd9b5" rx="0.6"/><path d="M3.2 24.2V20h2.6M3.2 22.1h2" fill="none" stroke="#e8761c" stroke-width="1.0"/><text x="9.20" y="24.12" font-size="5.6" fill="#9a9a9a" textLength="89.80" lengthAdjust="spacingAndGlyphs">Autodesk Fusion 360 (Licencia educativa)</text><line x1="587.60" y1="21.60" x2="592.40" y2="21.60" stroke="#aaa" stroke-width="0.7"/><rect x="607.20" y="19.90" width="3.80" height="3.80" fill="none" stroke="#aaa" stroke-width="0.7"/><path d="M608.2 19.9V19h3.8v3.8h-1" fill="none" stroke="#aaa" stroke-width="0.6"/><path d="M627 19.5l4.2 4.4M631.2 19.5l-4.2 4.4" fill="none" stroke="#aaa" stroke-width="0.7"/><rect x="0.00" y="27.00" width="640.00" height="1.20" fill="#a9a9a9"/><rect x="0.00" y="28.00" width="640.00" height="46.00" fill="#f0f0f0"/><rect x="0.00" y="28.20" width="80.30" height="11.80" fill="#c8c8c8"/><rect x="550.30" y="28.20" width="89.70" height="11.80" fill="#c8c8c8"/><rect x="550.30" y="28.20" width="12.70" height="11.80" fill="#b4b4b4"/><rect x="4.00" y="30.40" width="1.60" height="1.60" fill="#4a4a4a"/><rect x="4.00" y="32.50" width="1.60" height="1.60" fill="#4a4a4a"/><rect x="4.00" y="34.60" width="1.60" height="1.60" fill="#4a4a4a"/><rect x="6.10" y="30.40" width="1.60" height="1.60" fill="#4a4a4a"/><rect x="6.10" y="32.50" width="1.60" height="1.60" fill="#4a4a4a"/><rect x="6.10" y="34.60" width="1.60" height="1.60" fill="#4a4a4a"/><rect x="8.20" y="30.40" width="1.60" height="1.60" fill="#4a4a4a"/><rect x="8.20" y="32.50" width="1.60" height="1.60" fill="#4a4a4a"/><rect x="8.20" y="34.60" width="1.60" height="1.60" fill="#4a4a4a"/><path d="M17.3 30.2h3.2l1.9 1.9v4.7h-5.1z" fill="#4a4a4a"/><path d="M25.90 32.58H28.50L27.20 34.27Z" fill="#4a4a4a"/><rect x="36.30" y="30.30" width="5.60" height="5.80" fill="#4a4a4a" rx="0.5"/><rect x="37.50" y="30.90" width="3.20" height="1.60" fill="#c8c8c8"/><rect x="37.80" y="33.90" width="2.60" height="1.60" fill="#c8c8c8"/><path d="M50.6 32.6l2.2-2v1.2c2.6 0 3.6 1.6 3.3 4.2c-.5-1.7-1.5-2.3-3.3-2.3v1.1z" fill="#4a4a4a"/><path d="M58.30 32.58H60.90L59.60 34.27Z" fill="#4a4a4a"/><path d="M72.3 32.6l-2.2-2v1.2c-2.6 0-3.6 1.6-3.3 4.2c.5-1.7 1.5-2.3 3.3-2.3v1.1z" fill="#a3a3a3"/><path d="M74.80 32.58H77.40L76.10 34.27Z" fill="#a3a3a3"/><path d="M275.3 32.4l3-1.2 3 1.2v3.2l-3 1.4-3-1.4z" fill="#555"/><path d="M275.3 32.4l3 1.2 3-1.2M278.3 33.6V37" fill="none" stroke="#ddd" stroke-width="0.4"/><text x="284.60" y="36.24" font-size="5.4" fill="#3c3c3c" textLength="63.60" lengthAdjust="spacingAndGlyphs">ESTANTE PARA PLATOS v1*</text><path d="M543.2 32.1l3.6 3.8M546.8 32.1l-3.6 3.8" fill="none" stroke="#666" stroke-width="0.6"/><path d="M554 33.9h5.4M556.7 31.2v5.4" fill="none" stroke="#6a6a6a" stroke-width="0.9"/><circle cx="571.00" cy="33.50" r="3.00" fill="none" stroke="#444" stroke-width="1.0"/><path d="M569.5 32.4a2 2 0 0 1 3.4 1.6" fill="none" stroke="#444" stroke-width="0.7"/><circle cx="585.00" cy="33.50" r="3.30" fill="#666"/><path d="M585 31.7v2l1.4.6" fill="none" stroke="#c8c8c8" stroke-width="0.6"/><path d="M596.2 36h5.2c-1-1-.9-2-.9-3.2a1.7 1.7 0 0 0-3.4 0c0 1.2.1 2.2-.9 3.2zM598 36.4h1.6v.6h-1.6z" fill="#555"/><circle cx="612.50" cy="33.50" r="3.30" fill="#444"/><text x="612.50" y="35.40" font-size="5" fill="#d8d8d8" font-weight="bold" text-anchor="middle">?</text><circle cx="629.00" cy="33.60" r="5.00" fill="#efefef"/><text x="629.00" y="35.00" font-size="3.6" fill="#888" text-anchor="middle">MC</text><text x="62.65" y="46.20" font-size="5.0" fill="#505050" textLength="15.50" lengthAdjust="spacingAndGlyphs">SOLIDO</text><text x="97.20" y="46.20" font-size="5.0" fill="#505050" textLength="22.80" lengthAdjust="spacingAndGlyphs">SUPERFICIE</text><text x="140.10" y="46.20" font-size="5.0" fill="#505050" textLength="14.60" lengthAdjust="spacingAndGlyphs">MALLA</text><text x="174.60" y="46.20" font-size="5.0" fill="#505050" textLength="14.60" lengthAdjust="spacingAndGlyphs">CHAPA</text><text x="209.20" y="46.20" font-size="5.0" fill="#505050" textLength="20.80" lengthAdjust="spacingAndGlyphs">PLÁSTICO</text><text x="249.90" y="46.20" font-size="5.0" fill="#505050" textLength="24.00" lengthAdjust="spacingAndGlyphs">UTILIDADES</text><rect x="288.20" y="40.20" width="28.40" height="9.20" fill="#cbe4f3"/><rect x="288.20" y="49.20" width="28.40" height="1.10" fill="#0696d7"/><text x="293.20" y="46.20" font-size="5.0" fill="#0696d7" font-weight="bold" textLength="18.20" lengthAdjust="spacingAndGlyphs">BOCETO</text><rect x="5.20" y="45.00" width="45.00" height="24.40" fill="#f3f3f3" stroke="#dcdcdc" stroke-width="0.6" rx="2"/><text x="17.30" y="58.57" font-size="5.2" fill="#333" font-weight="bold" textLength="15.70" lengthAdjust="spacingAndGlyphs">DISEÑO</text><path d="M35.40 56.24H37.80L36.60 57.80Z" fill="#333"/><path d="M58 61h8.6M65.6 54.6c2.6 0 4.9 1.3 4.9 3.2s-2 3.2-4.4 3.2" fill="none" stroke="#8c8c8c" stroke-width="0.9"/><rect x="56.80" y="60.20" width="1.60" height="1.60" fill="#3a9fe6"/><rect x="65.60" y="60.20" width="1.60" height="1.60" fill="#3a9fe6"/><rect x="65.00" y="53.80" width="1.60" height="1.60" fill="#3a9fe6"/><rect x="75.60" y="53.60" width="11.60" height="8.20" fill="none" stroke="#8c8c8c" stroke-width="0.9"/><rect x="74.80" y="52.80" width="1.60" height="1.60" fill="#3a9fe6"/><rect x="86.40" y="61.00" width="1.60" height="1.60" fill="#3a9fe6"/><path d="M99.4 52.6l-6 11.2h6z" fill="none" stroke="#8c8c8c" stroke-width="0.9"/><path d="M99.4 52.6l6 11.2h-6z" fill="none" stroke="#3a9fe6" stroke-width="0.9"/><path d="M111 52.2v11.2M124.2 52.2v11.2" fill="none" stroke="#8c8c8c" stroke-width="1.0"/><path d="M112 55.6h11.4" fill="none" stroke="#3a9fe6" stroke-width="0.9"/><rect x="111.40" y="54.90" width="1.50" height="1.50" fill="#3a9fe6"/><rect x="122.40" y="54.90" width="1.50" height="1.50" fill="#3a9fe6"/><path d="M129.3 63.6c0-6 1.2-8 3.4-8s2.6 4.6 5.4 4.6 3.2-5 3.3-8.6" fill="none" stroke="#8c8c8c" stroke-width="0.9"/><rect x="128.50" y="63.00" width="1.60" height="1.60" fill="#3a9fe6"/><rect x="131.80" y="54.80" width="1.60" height="1.60" fill="#3a9fe6"/><rect x="138.00" y="59.40" width="1.60" height="1.60" fill="#3a9fe6"/><rect x="140.60" y="50.80" width="1.60" height="1.60" fill="#3a9fe6"/><path d="M151.6 64.2v-4.4" fill="none" stroke="#8c8c8c" stroke-width="0.9"/><path d="M151.6 60c0-5 2.6-8.4 8-8.4" fill="none" stroke="#3a9fe6" stroke-width="1.0"/><path d="M159.6 51.6h4.6" fill="none" stroke="#8c8c8c" stroke-width="0.9"/><path d="M169.2 52.4h5" fill="none" stroke="#3a9fe6" stroke-width="0.8" stroke-dasharray="1.2 0.8"/><path d="M178.8 52.2h3.6" fill="none" stroke="#8c8c8c" stroke-width="0.8"/><path d="M177 51.8l-.6 9M172.4 54.4l6.8 7" fill="none" stroke="#1e1e1e" stroke-width="1.6"/><circle cx="176.50" cy="62.70" r="1.50" fill="none" stroke="#1e1e1e" stroke-width="1.0"/><circle cx="180.00" cy="61.00" r="1.50" fill="none" stroke="#1e1e1e" stroke-width="1.0"/><path d="M200.4 53h-8.6a4.9 4.9 0 0 0 0 9.8h8.6" fill="none" stroke="#3a9fe6" stroke-width="1.1"/><path d="M200.4 55.6h-8a2.3 2.3 0 0 0 0 4.6h8" fill="none" stroke="#8c8c8c" stroke-width="0.9"/><rect x="214.40" y="52.60" width="2.60" height="6.20" fill="#c9c9c9"/><path d="M214.6 54.2h2.2M214.6 56h2.2M214.6 57.6h2.2" fill="none" stroke="#d9464d" stroke-width="0.5"/><path d="M212.8 60.2h6.2" fill="none" stroke="#555" stroke-width="0.7"/><path d="M212.8 61.2h6.6l-.8 2.2-.9-1.6-.9 1.6-.9-1.6-.9 1.6-.9-1.6z" fill="#d9464d"/><path d="M227.9 51.6v12.4" fill="none" stroke="#e58f95" stroke-width="1.2"/><path d="M228 63.7h12.6" fill="none" stroke="#b4b4b4" stroke-width="1.5"/><rect x="227.10" y="62.60" width="1.60" height="1.60" fill="#d9464d"/><circle cx="250.60" cy="59.00" r="5.20" fill="none" stroke="#d9464d" stroke-width="0.8"/><path d="M250 51.4l8 8.6" fill="none" stroke="#8c8c8c" stroke-width="0.8"/><rect x="265.70" y="54.70" width="8.60" height="1.90" fill="#d9464d"/><rect x="265.70" y="58.80" width="8.60" height="1.90" fill="#555"/><path d="M283.2 60.6l8-7.6" fill="none" stroke="#d9464d" stroke-width="0.9"/><path d="M285.2 62.6l8-7.6" fill="none" stroke="#8c8c8c" stroke-width="0.9"/><path d="M300.4 54.4l8.4 8.4" fill="none" stroke="#d9464d" stroke-width="0.9"/><path d="M304.8 58.6l6-6" fill="none" stroke="#8c8c8c" stroke-width="0.9"/><path d="M320.8 57.2v-1.8a2.7 2.7 0 0 1 5.4 0v1.8" fill="none" stroke="#d9464d" stroke-width="1.1"/><rect x="318.30" y="57.20" width="10.40" height="7.40" fill="#df6a70" rx="0.8"/><rect x="323.10" y="59.40" width="0.80" height="2.40" fill="#f6d6d8"/><path d="M341.6 54.2l5.4 9h-10.8z" fill="none" stroke="#d9464d" stroke-width="1.0"/><circle cx="359.60" cy="57.90" r="5.70" fill="none" stroke="#dd5a61" stroke-width="0.9"/><circle cx="359.60" cy="57.90" r="2.70" fill="none" stroke="#8c8c8c" stroke-width="0.9"/><path d="M377.4 58l5.8-5.6" fill="none" stroke="#d9464d" stroke-width="0.8"/><path d="M371.6 63.4l5.8-5.4" fill="none" stroke="#555" stroke-width="0.8"/><path d="M371.6 54.8l3 2.4" fill="none" stroke="#222" stroke-width="0.7"/><path d="M373.4 55.8l2.6.4-.6 2.4z" fill="#222"/><path d="M392.6 53.6h-2.6v8.4h2.6" fill="none" stroke="#d9464d" stroke-width="0.9"/><path d="M398 53.6h2.6v8.4h-2.6" fill="none" stroke="#8c8c8c" stroke-width="0.9"/><path d="M395.3 52v12" fill="none" stroke="#d9464d" stroke-width="0.7" stroke-dasharray="2.2 0.8"/><path d="M410.2 52.6l8.2 8.4" fill="none" stroke="#d9464d" stroke-width="0.9"/><path d="M408.2 56c3.4-.4 5.6 1.6 5.8 6.2" fill="none" stroke="#8c8c8c" stroke-width="0.8"/><rect x="441.30" y="57.60" width="11.60" height="3.40" fill="#f0a30a"/><rect x="441.30" y="58.80" width="11.60" height="0.70" fill="#c97f00"/><path d="M441.6 54.4v3M452.6 54.4v3M442 55.9h10.2" fill="none" stroke="#666" stroke-width="0.6"/><path d="M478 52.4h9.2v8l-2.6 3h-8.8v-8.6z" fill="#e9e9e9" stroke="#9a9a9a" stroke-width="0.6"/><path d="M475.8 55h9v8.4M484.8 55l2.4-2.6" fill="none" stroke="#b5b5b5" stroke-width="0.5"/><path d="M475 59.2c1-1.8 2.4-2.2 4-2.2v-1.2l2.6 2.2-2.6 2.2v-1.2c-1.6 0-2.8.2-4 .2z" fill="#333"/><rect x="493.00" y="51.60" width="12.00" height="12.00" fill="#4d9fe0"/><path d="M493 63.6v-3.4l3.4-3.6 3 3 2-1.6 3.6 3.2v2.4z" fill="#2f79bb"/><circle cx="501.80" cy="54.80" r="1.10" fill="#fbe9a6"/><rect x="525.00" y="50.00" width="15.90" height="15.60" fill="#0696d7"/><rect x="526.60" y="51.60" width="10.60" height="9.40" fill="none" stroke="#38c17a" stroke-width="0.6" stroke-dasharray="0.9 0.9"/><path d="M534.9 57.2v6.4l1.5-1.3 1 2.2.9-.4-1-2.1h1.9z" fill="#fff"/><rect x="557.20" y="49.00" width="53.00" height="25.00" fill="#cde6f4"/><circle cx="583.80" cy="57.90" r="6.60" fill="#57b811"/><path d="M580.2 57.8l2.6 2.6 4.8-5" fill="none" stroke="#fff" stroke-width="1.6"/><rect x="53.80" y="66.30" width="90.80" height="6.90" fill="#0696d7"/><text x="89.90" y="71.74" font-size="5.1" fill="#e8f4fb" textLength="14.00" lengthAdjust="spacingAndGlyphs">CREAR</text><path d="M105.50 69.30H107.70L106.60 70.73Z" fill="#fff"/><text x="161.90" y="71.74" font-size="5.1" fill="#505050" textLength="22.60" lengthAdjust="spacingAndGlyphs">MODIFICAR</text><path d="M186.00 69.30H188.20L187.10 70.73Z" fill="#222"/><text x="295.30" y="71.74" font-size="5.1" fill="#505050" textLength="32.80" lengthAdjust="spacingAndGlyphs">RESTRICCIONES</text><path d="M329.60 69.30H331.80L330.70 70.73Z" fill="#222"/><text x="430.00" y="71.74" font-size="5.1" fill="#505050" textLength="30.90" lengthAdjust="spacingAndGlyphs">INSPECCIONAR</text><path d="M462.20 69.30H464.40L463.30 70.73Z" fill="#222"/><text x="477.50" y="71.74" font-size="5.1" fill="#505050" textLength="20.20" lengthAdjust="spacingAndGlyphs">INSERTAR</text><path d="M499.20 69.30H501.40L500.30 70.73Z" fill="#222"/><text x="516.00" y="71.74" font-size="5.1" fill="#505050" textLength="29.40" lengthAdjust="spacingAndGlyphs">SELECCIONAR</text><path d="M546.70 69.30H548.90L547.80 70.73Z" fill="#222"/><text x="561.30" y="71.74" font-size="5.1" fill="#505050" textLength="40.00" lengthAdjust="spacingAndGlyphs">TERMINAR BOCETO</text><path d="M602.70 69.30H604.90L603.80 70.73Z" fill="#222"/><line x1="146.50" y1="51.40" x2="146.50" y2="72.20" stroke="#dedede" stroke-width="0.7"/><line x1="204.40" y1="51.40" x2="204.40" y2="72.20" stroke="#dedede" stroke-width="0.7"/><line x1="424.40" y1="51.40" x2="424.40" y2="72.20" stroke="#dedede" stroke-width="0.7"/><line x1="469.40" y1="51.40" x2="469.40" y2="72.20" stroke="#dedede" stroke-width="0.7"/><line x1="509.80" y1="51.40" x2="509.80" y2="72.20" stroke="#dedede" stroke-width="0.7"/><g><rect x="0.00" y="74.00" width="640.00" height="265.50" fill="#ffffff"/><path d="M18.0 74V339.5M28.8 74V339.5M39.6 74V339.5M50.4 74V339.5M72.0 74V339.5M82.8 74V339.5M93.6 74V339.5M104.4 74V339.5M126.0 74V339.5M136.8 74V339.5M147.6 74V339.5M158.4 74V339.5M180.0 74V339.5M190.8 74V339.5M201.6 74V339.5M212.4 74V339.5M234.0 74V339.5M244.8 74V339.5M255.6 74V339.5M266.4 74V339.5M288.0 74V339.5M298.8 74V339.5M309.6 74V339.5M320.4 74V339.5M342.0 74V339.5M352.8 74V339.5M363.6 74V339.5M374.4 74V339.5M396.0 74V339.5M406.8 74V339.5M417.6 74V339.5M428.4 74V339.5M450.0 74V339.5M460.8 74V339.5M471.6 74V339.5M482.4 74V339.5M504.0 74V339.5M514.8 74V339.5M525.6 74V339.5M536.4 74V339.5M558.0 74V339.5M568.8 74V339.5M579.6 74V339.5M590.4 74V339.5M612.0 74V339.5M622.8 74V339.5M633.6 74V339.5M0 322.6H640M0 311.8H640M0 301.0H640M0 290.2H640M0 268.6H640M0 257.8H640M0 247.0H640M0 236.2H640M0 214.6H640M0 203.8H640M0 193.0H640M0 182.2H640M0 160.6H640M0 149.8H640M0 139.0H640M0 128.2H640M0 106.6H640M0 95.8H640M0 85.0H640M0 74.2H640" fill="none" stroke="#f5f5f5" stroke-width="0.9"/><path d="M61.2 74V339.5M115.2 74V339.5M169.2 74V339.5M223.2 74V339.5M277.2 74V339.5M331.2 74V339.5M385.2 74V339.5M439.2 74V339.5M493.2 74V339.5M547.2 74V339.5M601.2 74V339.5M0 279.4H640M0 225.4H640M0 171.4H640M0 117.4H640" fill="none" stroke="#e0e0e0" stroke-width="1.0"/><line x1="7.40" y1="74.00" x2="7.40" y2="339.50" stroke="#a8eca8" stroke-width="1.1"/><line x1="0.00" y1="333.40" x2="640.00" y2="333.40" stroke="#f6b4b4" stroke-width="1.0"/><rect x="1.60" y="75.80" width="125.20" height="9.90" fill="#f1f1f1" stroke="#e2e2e2" stroke-width="0.5"/><path d="M5.6 79.6v2l-1.6-1zM7.6 79.6v2l-1.6-1z" fill="#222"/><text x="12.00" y="82.54" font-size="5.1" fill="#9a9a9a" textLength="27.60" lengthAdjust="spacingAndGlyphs">NAVEGADOR</text><circle cx="119.70" cy="80.80" r="1.70" fill="#222"/><rect x="124.30" y="78.80" width="0.70" height="3.80" fill="#d0d0d0"/><rect x="17.00" y="88.20" width="98.20" height="8.40" fill="#f3f3f3"/><path d="M8.8 94.2h4.6v-4.4z" fill="#555"/><path d="M9.6 93.2l3.4-3.2M10.8 94l2.4-2.2" fill="none" stroke="#ddd" stroke-width="0.4"/><path d="M18.0 92.4q3.2-3.6 6.4 0q-3.2 3.6-6.4 0z" fill="none" stroke="#8a8a8a" stroke-width="0.9"/><circle cx="21.20" cy="92.40" r="1.35" fill="#8a8a8a"/><rect x="27.20" y="89.00" width="77.00" height="6.80" fill="#8c8c8c"/><rect x="29.40" y="89.70" width="4.20" height="5.20" fill="#f4f4f4" stroke="#d0d0d0" stroke-width="0.4" rx="0.6"/><text x="40.60" y="94.30" font-size="5.0" fill="#fff" font-weight="bold" textLength="58.60" lengthAdjust="spacingAndGlyphs">ESTANTE PARA PLATOS v1</text><circle cx="108.90" cy="92.50" r="2.50" fill="#fff" stroke="#555" stroke-width="0.6"/><circle cx="108.90" cy="92.50" r="0.90" fill="#333"/><rect x="24.20" y="98.40" width="75.80" height="7.80" fill="#f2f2f2"/><path d="M16.6 100.2v4.2l1.6 0l2-2.1l-2-2.1z" fill="none" stroke="#555" stroke-width="0.7"/><circle cx="28.60" cy="102.30" r="2.20" fill="none" stroke="#777" stroke-width="1.3"/><circle cx="28.60" cy="102.30" r="3.00" fill="none" stroke="#777" stroke-width="0.9" stroke-dasharray="1 1.36"/><text x="38.00" y="104.30" font-size="5.0" fill="#4a4a4a" textLength="58.20" lengthAdjust="spacingAndGlyphs">Configuración del documento</text><rect x="24.20" y="108.40" width="54.00" height="7.80" fill="#f2f2f2"/><path d="M16.6 110.2v4.2l1.6 0l2-2.1l-2-2.1z" fill="none" stroke="#555" stroke-width="0.7"/><path d="M25.4 114.8v-5h2.4l.7.9h3.3v4.1z" fill="#8a8a8a"/><line x1="28.50" y1="110.70" x2="28.50" y2="114.80" stroke="#a8a8a8" stroke-width="0.4"/><text x="38.00" y="114.30" font-size="5.0" fill="#4a4a4a" textLength="35.60" lengthAdjust="spacingAndGlyphs">Vistas guardadas</text><rect x="24.20" y="118.40" width="40.80" height="7.80" fill="#f2f2f2"/><path d="M16.6 120.2v4.2l1.6 0l2-2.1l-2-2.1z" fill="none" stroke="#555" stroke-width="0.7"/><path d="M25.4 122.3q3.2-3.6 6.4 0q-3.2 3.6-6.4 0z" fill="none" stroke="#c8c8c8" stroke-width="0.9"/><circle cx="28.60" cy="122.30" r="1.35" fill="#c8c8c8"/><path d="M36.0 124.8v-5h2.4l.7.9h3.3v4.1z" fill="#8a8a8a"/><line x1="39.10" y1="120.70" x2="39.10" y2="124.80" stroke="#a8a8a8" stroke-width="0.4"/><text x="48.20" y="124.30" font-size="5.0" fill="#4a4a4a" textLength="13.80" lengthAdjust="spacingAndGlyphs">Origen</text><rect x="24.20" y="128.20" width="44.60" height="7.80" fill="#f2f2f2"/><path d="M16.6 130.0v4.2l1.6 0l2-2.1l-2-2.1z" fill="none" stroke="#555" stroke-width="0.7"/><path d="M25.4 132.1q3.2-3.6 6.4 0q-3.2 3.6-6.4 0z" fill="none" stroke="#777" stroke-width="0.9"/><circle cx="28.60" cy="132.10" r="1.35" fill="#777"/><path d="M36.0 134.6v-5h2.4l.7.9h3.3v4.1z" fill="#8a8a8a"/><line x1="39.10" y1="130.50" x2="39.10" y2="134.60" stroke="#a8a8a8" stroke-width="0.4"/><text x="48.20" y="134.10" font-size="5.0" fill="#4a4a4a" textLength="16.80" lengthAdjust="spacingAndGlyphs">Bocetos</text><line x1="34.40" y1="134.60" x2="68.80" y2="134.60" stroke="#3c6cc8" stroke-width="0.7" stroke-dasharray="0.9 0.9"/><line x1="305.60" y1="132.02" x2="342.60" y2="132.02" stroke="#8a8a8a" stroke-width="0.8"/><line x1="306.30" y1="131.82" x2="306.30" y2="144.75" stroke="#1c1c1c" stroke-width="0.7"/><path d="M306.30 132.12l-1.25 3.60h2.50z" fill="#111"/><path d="M306.30 144.45l-1.25 -3.60h2.50z" fill="#111"/><text transform="translate(301.60 138.20) rotate(-90)" x="-7.30" y="2.45" font-size="6.8" fill="#555" textLength="14.60" lengthAdjust="spacingAndGlyphs">12.00</text><line x1="407.60" y1="145.05" x2="446.40" y2="145.05" stroke="#8a8a8a" stroke-width="0.8"/><line x1="410.00" y1="131.82" x2="410.00" y2="144.75" stroke="#1c1c1c" stroke-width="0.7"/><path d="M410.00 132.12l-1.25 3.60h2.50z" fill="#111"/><path d="M410.00 144.45l-1.25 -3.60h2.50z" fill="#111"/><text transform="translate(414.30 138.60) rotate(90)" x="-7.30" y="2.45" font-size="6.8" fill="#555" textLength="14.60" lengthAdjust="spacingAndGlyphs">12.00</text><line x1="293.10" y1="146.35" x2="293.10" y2="186.00" stroke="#8a8a8a" stroke-width="0.8"/><line x1="344.87" y1="144.75" x2="344.87" y2="186.00" stroke="#8a8a8a" stroke-width="0.8"/><line x1="293.10" y1="183.80" x2="344.87" y2="183.80" stroke="#1c1c1c" stroke-width="0.7"/><path d="M293.40 183.80l4.20 -1.25v2.50z" fill="#111"/><path d="M344.57 183.80l-4.20 -1.25v2.50z" fill="#111"/><text x="311.00" y="181.25" font-size="6.8" fill="#5a5a5a" textLength="16.00" lengthAdjust="spacingAndGlyphs">48.00</text><line x1="448.42" y1="144.75" x2="448.42" y2="186.00" stroke="#8a8a8a" stroke-width="0.8"/><line x1="344.87" y1="170.60" x2="448.42" y2="170.60" stroke="#1c1c1c" stroke-width="0.7"/><path d="M345.17 170.60l4.20 -1.25v2.50z" fill="#111"/><path d="M448.12 170.60l-4.20 -1.25v2.50z" fill="#111"/><text x="388.90" y="168.45" font-size="6.8" fill="#5a5a5a" textLength="16.00" lengthAdjust="spacingAndGlyphs">96.00</text><line x1="448.42" y1="183.80" x2="551.96" y2="183.80" stroke="#1c1c1c" stroke-width="0.7"/><path d="M448.72 183.80l4.20 -1.25v2.50z" fill="#111"/><path d="M551.66 183.80l-4.20 -1.25v2.50z" fill="#111"/><text x="492.40" y="181.25" font-size="6.8" fill="#5a5a5a" textLength="16.00" lengthAdjust="spacingAndGlyphs">96.00</text><line x1="512.90" y1="144.75" x2="512.90" y2="198.60" stroke="#1c1c1c" stroke-width="0.7"/><path d="M512.90 145.05l-1.25 4.20h2.50z" fill="#111"/><path d="M512.90 198.30l-1.25 -4.20h2.50z" fill="#111"/><text transform="translate(518.00 171.80) rotate(90)" x="-7.80" y="2.45" font-size="6.8" fill="#555" textLength="15.60" lengthAdjust="spacingAndGlyphs">50.00</text><line x1="526.30" y1="198.60" x2="526.30" y2="252.46" stroke="#1c1c1c" stroke-width="0.7"/><path d="M526.30 198.91l-1.25 4.20h2.50z" fill="#111"/><path d="M526.30 252.16l-1.25 -4.20h2.50z" fill="#111"/><text transform="translate(531.50 225.80) rotate(90)" x="-7.80" y="2.45" font-size="6.8" fill="#555" textLength="15.60" lengthAdjust="spacingAndGlyphs">50.00</text><line x1="512.90" y1="252.46" x2="512.90" y2="306.31" stroke="#1c1c1c" stroke-width="0.7"/><path d="M512.90 252.76l-1.25 4.20h2.50z" fill="#111"/><path d="M512.90 306.01l-1.25 -4.20h2.50z" fill="#111"/><text transform="translate(518.00 280.20) rotate(90)" x="-7.80" y="2.45" font-size="6.8" fill="#555" textLength="15.60" lengthAdjust="spacingAndGlyphs">50.00</text><line x1="510.40" y1="198.60" x2="551.96" y2="198.60" stroke="#333" stroke-width="0.8"/><line x1="510.40" y1="252.46" x2="551.96" y2="252.46" stroke="#333" stroke-width="0.8"/><line x1="551.66" y1="201.00" x2="551.66" y2="249.40" stroke="#858585" stroke-width="1.6"/><text x="551.00" y="211.65" font-size="6.8" fill="#5a5a5a" textLength="15.40" lengthAdjust="spacingAndGlyphs">12.00</text><line x1="551.96" y1="213.90" x2="564.91" y2="213.90" stroke="#1c1c1c" stroke-width="0.7"/><path d="M552.26 213.90l3.40 -1.25v2.50z" fill="#111"/><path d="M564.61 213.90l-3.40 -1.25v2.50z" fill="#111"/><text x="551.00" y="235.05" font-size="6.8" fill="#5a5a5a" textLength="15.40" lengthAdjust="spacingAndGlyphs">12.00</text><line x1="551.96" y1="237.30" x2="564.91" y2="237.30" stroke="#1c1c1c" stroke-width="0.7"/><path d="M552.26 237.30l3.40 -1.25v2.50z" fill="#111"/><path d="M564.61 237.30l-3.40 -1.25v2.50z" fill="#111"/><line x1="34.24" y1="295.20" x2="34.24" y2="306.31" stroke="#777" stroke-width="0.9"/><line x1="34.24" y1="298.00" x2="551.96" y2="298.00" stroke="#969696" stroke-width="1.9"/><path d="M34.54 298.10l4.60 -1.40v2.80z" fill="#111"/><path d="M551.66 298.10l-4.60 -1.40v2.80z" fill="#111"/><text x="279.80" y="295.85" font-size="6.8" fill="#5a5a5a" textLength="19.20" lengthAdjust="spacingAndGlyphs">480.00</text><line x1="34.24" y1="306.31" x2="551.96" y2="306.31" stroke="#8fcdf0" stroke-width="1.3"/><path d="M293.10 144.75L344.87 144.75L344.87 131.82L448.42 131.82L448.42 144.75L551.96 144.75L551.96 198.60L564.91 198.60L564.91 252.46L551.96 252.46L551.96 306.31" fill="none" stroke="#8fcdf0" stroke-width="1.4"/><g transform="translate(342.02 141.90) rotate(135.0)"><path d="M-2.4 0h4.8M0 0v6.8" fill="none" stroke="#a2a2a2" stroke-width="1.2"/></g><g transform="translate(347.72 134.67) rotate(-45.0)"><path d="M-2.4 0h4.8M0 0v6.8" fill="none" stroke="#a2a2a2" stroke-width="1.2"/></g><g transform="translate(445.57 134.67) rotate(45.0)"><path d="M-2.4 0h4.8M0 0v6.8" fill="none" stroke="#a2a2a2" stroke-width="1.2"/></g><g transform="translate(451.27 141.90) rotate(-135.0)"><path d="M-2.4 0h4.8M0 0v6.8" fill="none" stroke="#a2a2a2" stroke-width="1.2"/></g><g transform="translate(549.11 147.60) rotate(45.0)"><path d="M-2.4 0h4.8M0 0v6.8" fill="none" stroke="#a2a2a2" stroke-width="1.2"/></g><g transform="translate(554.81 195.75) rotate(-135.0)"><path d="M-2.4 0h4.8M0 0v6.8" fill="none" stroke="#a2a2a2" stroke-width="1.2"/></g><g transform="translate(562.06 201.45) rotate(45.0)"><path d="M-2.4 0h4.8M0 0v6.8" fill="none" stroke="#a2a2a2" stroke-width="1.2"/></g><g transform="translate(562.06 249.61) rotate(135.0)"><path d="M-2.4 0h4.8M0 0v6.8" fill="none" stroke="#a2a2a2" stroke-width="1.2"/></g><g transform="translate(554.81 255.31) rotate(-45.0)"><path d="M-2.4 0h4.8M0 0v6.8" fill="none" stroke="#a2a2a2" stroke-width="1.2"/></g><g transform="translate(549.11 303.46) rotate(135.0)"><path d="M-2.4 0h4.8M0 0v6.8" fill="none" stroke="#a2a2a2" stroke-width="1.2"/></g><path d="M288.2 299.4l-3.1 5.3h6.2z" fill="none" stroke="#a8a8a8" stroke-width="1.3"/><g transform="translate(295.95 303.46) rotate(-135.0)"><path d="M-2.4 0h4.8M0 0v6.8" fill="none" stroke="#a2a2a2" stroke-width="1.2"/></g><rect x="288.40" y="308.80" width="9.00" height="3.40" fill="#a9a9a9" rx="0.9"/><line x1="289.40" y1="310.50" x2="296.40" y2="310.50" stroke="#e4e4e4" stroke-width="0.6"/><line x1="293.00" y1="245.00" x2="293.00" y2="306.31" stroke="#f1a36e" stroke-width="1.0" stroke-dasharray="3.4 1.6"/><circle cx="293.10" cy="144.75" r="1.50" fill="#fff" stroke="#8a8a8a" stroke-width="0.6"/><circle cx="34.24" cy="306.51" r="1.50" fill="#fff" stroke="#8a8a8a" stroke-width="0.6"/><circle cx="293.10" cy="243.90" r="1.50" fill="#fff" stroke="#8a8a8a" stroke-width="0.6"/><rect x="606.50" y="88.30" width="19.20" height="19.20" fill="#ececee" stroke="#d4d4d8" stroke-width="0.7"/><rect x="610.00" y="91.80" width="12.50" height="12.40" fill="#e2e5ec"/><text x="608.30" y="99.57" font-size="3.8" fill="#a2a2aa" textLength="15.90" lengthAdjust="spacingAndGlyphs">SUPERIOR</text><rect x="606.70" y="83.40" width="2.10" height="4.90" fill="#a8f0a8"/><path d="M604.2 107.4h1.8l-1.8 2.2h1.8" fill="none" stroke="#4a4aff" stroke-width="0.6"/><path d="M627.6 105.2l1.8 2.4M629.4 105.2l-1.8 2.4" fill="none" stroke="#ff6a6a" stroke-width="0.6"/><rect x="629.50" y="121.00" width="8.60" height="78.00" fill="#f0f0f0"/><path d="M632.4 125.6l1.3-.8v1.6zM634 125.6l1.3-.8v1.6z" fill="#222"/><text transform="translate(635.4 195.6) rotate(-90)" font-size="5.0" fill="#555" textLength="41.5" lengthAdjust="spacingAndGlyphs">PALETA DE BOCETO</text><rect x="54.60" y="74.40" width="63.00" height="150.00" fill="#000" opacity="0.10"/><rect x="53.80" y="73.60" width="62.80" height="149.70" fill="#ffffff" stroke="#c4c4c4" stroke-width="0.7"/><rect x="55.50" y="175.50" width="58.90" height="8.90" fill="#d3d3d3"/><text x="64.10" y="81.01" font-size="5.3" fill="#505050" textLength="10.90" lengthAdjust="spacingAndGlyphs">Línea</text><text x="64.10" y="90.31" font-size="5.3" fill="#505050" textLength="22.50" lengthAdjust="spacingAndGlyphs">Rectángulo</text><path d="M109.76 86.50V90.30L112.42 88.40Z" fill="#222"/><text x="64.10" y="99.41" font-size="5.3" fill="#505050" textLength="13.65" lengthAdjust="spacingAndGlyphs">Círculo</text><path d="M109.76 95.60V99.40L112.42 97.50Z" fill="#222"/><text x="64.10" y="108.51" font-size="5.3" fill="#505050" textLength="9.90" lengthAdjust="spacingAndGlyphs">Arco</text><path d="M109.76 104.70V108.50L112.42 106.60Z" fill="#222"/><text x="64.10" y="117.51" font-size="5.3" fill="#505050" textLength="16.50" lengthAdjust="spacingAndGlyphs">Polígono</text><path d="M109.76 113.70V117.50L112.42 115.60Z" fill="#222"/><text x="64.10" y="126.91" font-size="5.3" fill="#505050" textLength="11.80" lengthAdjust="spacingAndGlyphs">Elipse</text><text x="64.10" y="136.01" font-size="5.3" fill="#505050" textLength="14.65" lengthAdjust="spacingAndGlyphs">Ranura</text><path d="M109.76 132.20V136.00L112.42 134.10Z" fill="#222"/><text x="64.10" y="145.01" font-size="5.3" fill="#505050" textLength="12.15" lengthAdjust="spacingAndGlyphs">Spline</text><path d="M109.76 141.20V145.00L112.42 143.10Z" fill="#222"/><text x="64.10" y="154.11" font-size="5.3" fill="#505050" textLength="26.60" lengthAdjust="spacingAndGlyphs">Curva cónica</text><text x="64.10" y="163.21" font-size="5.3" fill="#505050" textLength="11.50" lengthAdjust="spacingAndGlyphs">Punto</text><text x="64.10" y="172.31" font-size="5.3" fill="#505050" textLength="10.90" lengthAdjust="spacingAndGlyphs">Texto</text><text x="64.10" y="182.11" font-size="5.3" fill="#505050" textLength="16.00" lengthAdjust="spacingAndGlyphs">Simetría</text><text x="64.10" y="191.21" font-size="5.3" fill="#505050" textLength="29.30" lengthAdjust="spacingAndGlyphs">Patrón circular</text><text x="64.10" y="200.31" font-size="5.3" fill="#505050" textLength="37.10" lengthAdjust="spacingAndGlyphs">Patrón rectangular</text><text x="64.10" y="209.91" font-size="5.3" fill="#505050" textLength="32.70" lengthAdjust="spacingAndGlyphs">Proyectar/Incluir</text><path d="M109.76 206.10V209.90L112.42 208.00Z" fill="#222"/><text x="64.10" y="219.71" font-size="5.3" fill="#505050" textLength="30.40" lengthAdjust="spacingAndGlyphs">Cota de boceto</text><text x="100.80" y="80.97" font-size="5.2" fill="#666">L</text><text x="101.00" y="219.67" font-size="5.2" fill="#666">D</text><line x1="56.00" y1="203.30" x2="114.50" y2="203.30" stroke="#cfcfcf" stroke-width="0.6"/><line x1="56.00" y1="212.70" x2="114.50" y2="212.70" stroke="#cfcfcf" stroke-width="0.6"/><path d="M56.4 80.4h3.2M59.6 77.2c1.6 0 2.8.7 2.8 1.6s-1.2 1.6-2.6 1.6" fill="none" stroke="#3a9fe6" stroke-width="0.7"/><path d="M55.6 125q3-3.4 6 0q-3 3.4-6 0z" fill="none" stroke="#3a9fe6" stroke-width="0.7"/><circle cx="58.60" cy="125.00" r="0.60" fill="#3a9fe6"/><path d="M55.8 155.2c.6-4.4 1.6-6 2.8-6s2.2 1.6 2.8 6" fill="none" stroke="#3a9fe6" stroke-width="0.7"/><path d="M58.6 158.6v5.4M56 160.6h5.2" fill="none" stroke="#666" stroke-width="0.6"/><text x="59.00" y="173.08" font-size="8.0" fill="#222" font-weight="bold" text-anchor="middle">A</text><path d="M58.4 177.6l-2.4 4.8h2.4z" fill="none" stroke="#666" stroke-width="0.6"/><path d="M58.8 177.6l2.4 4.8h-2.4z" fill="none" stroke="#3a9fe6" stroke-width="0.6"/><circle cx="58.60" cy="189.40" r="2.30" fill="none" stroke="#3a9fe6" stroke-width="0.7" stroke-dasharray="1.2 1.2"/><rect x="55.50" y="186.30" width="1.40" height="1.40" fill="#3a9fe6"/><rect x="60.30" y="186.30" width="1.40" height="1.40" fill="#3a9fe6"/><rect x="55.50" y="191.10" width="1.40" height="1.40" fill="#3a9fe6"/><rect x="60.30" y="191.10" width="1.40" height="1.40" fill="#3a9fe6"/><rect x="56.40" y="196.20" width="4.60" height="4.40" fill="none" stroke="#3a9fe6" stroke-width="0.6" stroke-dasharray="1 1"/><rect x="55.70" y="195.50" width="1.40" height="1.40" fill="#3a9fe6"/><rect x="60.30" y="195.50" width="1.40" height="1.40" fill="#3a9fe6"/><rect x="55.70" y="199.90" width="1.40" height="1.40" fill="#3a9fe6"/><rect x="60.30" y="199.90" width="1.40" height="1.40" fill="#3a9fe6"/><path d="M55.8 215v5.6M61.6 215v5.6" fill="none" stroke="#666" stroke-width="0.6"/><path d="M55.8 216.8h5.8" fill="none" stroke="#3a9fe6" stroke-width="0.7"/><path d="M110 178.6v.01M110 180.2v.01M110 181.8v.01" fill="none" stroke="#444" stroke-width="0.9" stroke-linecap="round"/><rect x="118.90" y="177.30" width="136.20" height="49.80" fill="#4b4b4b" rx="3.4"/><text x="124.40" y="191.69" font-size="4.7" fill="#f4f4f4" font-weight="bold" textLength="117.40" lengthAdjust="spacingAndGlyphs">Realiza la simetría de las curvas de boceto seleccionadas</text><text x="124.40" y="196.79" font-size="4.7" fill="#f4f4f4" font-weight="bold" textLength="81.20" lengthAdjust="spacingAndGlyphs">sobre una línea de boceto seleccionada.</text><text x="124.40" y="206.79" font-size="4.7" fill="#f4f4f4" font-weight="bold" textLength="105.20" lengthAdjust="spacingAndGlyphs">Seleccione las curvas de simetría y, a continuación,</text><text x="124.40" y="211.69" font-size="4.7" fill="#f4f4f4" font-weight="bold" textLength="62.70" lengthAdjust="spacingAndGlyphs">seleccione la línea de simetría.</text><text x="124.40" y="225.29" font-size="4.7" fill="#f4f4f4" font-weight="bold" textLength="79.40" lengthAdjust="spacingAndGlyphs">Pulse Ctrl+/ para obtener más ayuda.</text><rect x="270.20" y="327.90" width="98.80" height="9.60" fill="#f0f0f0"/><path d="M274.7 329.59999999999997v6.2M271.6 332.7h6.2" fill="none" stroke="#4a4a4a" stroke-width="0.9"/><circle cx="274.70" cy="332.70" r="1.70" fill="none" stroke="#4a4a4a" stroke-width="0.7"/><path d="M280.50 332.15H282.50L281.50 333.45Z" fill="#222"/><rect x="285.30" y="331.10" width="6.40" height="4.40" fill="#8c8f99" rx="0.5"/><path d="M286.2 331.09999999999997l1.2-1.6h2.2l1.2 1.6" fill="none" stroke="#666" stroke-width="0.6"/><rect x="286.60" y="332.30" width="3.80" height="1.60" fill="#c9ccd4"/><path d="M297.2 335.7c-1.2-1.4-1.6-2.6-1.2-3.4l1 .6v-2.6h.9v-.7h1v.3h1v.5h1v3.4c0 .9-.4 1.5-.7 1.9z" fill="#fafafa" stroke="#4a4a4a" stroke-width="0.6"/><circle cx="309.30" cy="332.10" r="2.00" fill="#e2edf7" stroke="#4a4a4a" stroke-width="0.7"/><path d="M310.8 333.59999999999997l1.8 1.9" fill="none" stroke="#222" stroke-width="1.0"/><path d="M312.6 329.9v1.8" fill="none" stroke="#4a4a4a" stroke-width="0.5"/><circle cx="320.40" cy="332.10" r="2.60" fill="#e6f0f8" stroke="#777" stroke-width="0.7"/><path d="M322.2 333.9l2.2 2.2" fill="none" stroke="#222" stroke-width="1.1"/><path d="M326.70 332.15H328.70L327.70 333.45Z" fill="#222"/><rect x="331.60" y="329.60" width="6.80" height="5.00" fill="#5b8fd4" stroke="#667" stroke-width="0.6" rx="0.4"/><path d="M333.6 334.7h2.8l.6 1.3h-4z" fill="#777"/><path d="M339.40 332.15H341.40L340.40 333.45Z" fill="#222"/><rect x="344.30" y="329.60" width="6.60" height="6.30" fill="#96989e" stroke="#7a7c82" stroke-width="0.4"/><path d="M352.30 332.15H354.30L353.30 333.45Z" fill="#222"/><rect x="357.20" y="329.90" width="6.60" height="5.40" fill="#4f7fc6" rx="0.3"/><path d="M357.2 332.59999999999997h6.6M359.4 329.9v5.4M361.6 329.9v5.4" fill="none" stroke="#cfdcf0" stroke-width="0.4"/><path d="M365.00 332.15H367.00L366.00 333.45Z" fill="#222"/><rect x="2.00" y="327.00" width="125.00" height="9.40" fill="#f1f1f1" stroke="#e4e4e4" stroke-width="0.4"/><rect x="2.00" y="336.20" width="125.00" height="1.20" fill="#2a2a2a"/><text x="12.00" y="333.33" font-size="4.8" fill="#8a8a8a" textLength="30.20" lengthAdjust="spacingAndGlyphs">COMENTARIOS</text><circle cx="119.70" cy="331.60" r="1.70" fill="#222"/><rect x="124.30" y="329.70" width="0.70" height="3.80" fill="#d0d0d0"/><rect x="0.00" y="339.40" width="640.00" height="20.70" fill="#f0f0f0"/><line x1="0.00" y1="339.40" x2="640.00" y2="339.40" stroke="#dcdcdc" stroke-width="0.7"/><path d="M4.6 347.4v5.2" fill="none" stroke="#2a2a2a" stroke-width="1.0"/><path d="M9.6 347.4v5.2l-4.2-2.6z" fill="#2a2a2a"/><path d="M19.4 347.6v4.8l-4-2.4zM15.6 349.1h-1.4v1.8h1.4z" fill="#2a2a2a"/><path d="M25.6 347.0v6l4.6-3z" fill="#2a2a2a"/><path d="M36.2 347.6v4.8l4-2.4zM40 349.1h1.4v1.8h-1.4z" fill="#2a2a2a"/><path d="M46.2 347.4v5.2l4.2-2.6z" fill="#2a2a2a"/><path d="M51.2 347.4v5.2" fill="none" stroke="#2a2a2a" stroke-width="1.0"/><rect x="42.60" y="0.00" width="0.00" height="0.00" fill="none"/><rect x="61.20" y="345.80" width="5.80" height="6.60" fill="#f6f6f6" stroke="#8fb6e0" stroke-width="0.6"/><path d="M63.4 351l3.6-3.6" fill="none" stroke="#f0b13c" stroke-width="0.9"/><path d="M66.2 344.2h5.6l-2 2.2v10.4h-1.6v-10.4z" fill="#666"/><circle cx="631.00" cy="350.00" r="2.30" fill="none" stroke="#777" stroke-width="1.2"/><circle cx="631.00" cy="350.00" r="3.10" fill="none" stroke="#777" stroke-width="0.9" stroke-dasharray="1 1.43"/></g></g><g transform="translate(0 343)"><rect x="0.00" y="17.00" width="640.00" height="10.50" fill="#ffffff"/><line x1="270.00" y1="17.50" x2="370.00" y2="17.50" stroke="#e4e8ee" stroke-width="0.8"/><line x1="309.80" y1="17.50" x2="329.90" y2="17.50" stroke="#5aa6ea" stroke-width="1.0"/><rect x="1.60" y="18.60" width="5.20" height="6.40" fill="#fbd9b5" rx="0.6"/><path d="M3.2 24.2V20h2.6M3.2 22.1h2" fill="none" stroke="#e8761c" stroke-width="1.0"/><text x="9.20" y="24.12" font-size="5.6" fill="#2b2b2b" textLength="89.80" lengthAdjust="spacingAndGlyphs">Autodesk Fusion 360 (Licencia educativa)</text><line x1="587.60" y1="21.60" x2="592.40" y2="21.60" stroke="#222" stroke-width="0.7"/><rect x="607.20" y="19.90" width="3.80" height="3.80" fill="none" stroke="#222" stroke-width="0.7"/><path d="M608.2 19.9V19h3.8v3.8h-1" fill="none" stroke="#222" stroke-width="0.6"/><path d="M627 19.5l4.2 4.4M631.2 19.5l-4.2 4.4" fill="none" stroke="#222" stroke-width="0.7"/><rect x="0.00" y="27.00" width="640.00" height="1.20" fill="#a9a9a9"/><rect x="0.00" y="28.00" width="640.00" height="46.00" fill="#f0f0f0"/><rect x="0.00" y="28.20" width="80.30" height="11.80" fill="#c8c8c8"/><rect x="550.30" y="28.20" width="89.70" height="11.80" fill="#c8c8c8"/><rect x="550.30" y="28.20" width="12.70" height="11.80" fill="#b4b4b4"/><rect x="4.00" y="30.40" width="1.60" height="1.60" fill="#4a4a4a"/><rect x="4.00" y="32.50" width="1.60" height="1.60" fill="#4a4a4a"/><rect x="4.00" y="34.60" width="1.60" height="1.60" fill="#4a4a4a"/><rect x="6.10" y="30.40" width="1.60" height="1.60" fill="#4a4a4a"/><rect x="6.10" y="32.50" width="1.60" height="1.60" fill="#4a4a4a"/><rect x="6.10" y="34.60" width="1.60" height="1.60" fill="#4a4a4a"/><rect x="8.20" y="30.40" width="1.60" height="1.60" fill="#4a4a4a"/><rect x="8.20" y="32.50" width="1.60" height="1.60" fill="#4a4a4a"/><rect x="8.20" y="34.60" width="1.60" height="1.60" fill="#4a4a4a"/><path d="M17.3 30.2h3.2l1.9 1.9v4.7h-5.1z" fill="#4a4a4a"/><path d="M25.90 32.58H28.50L27.20 34.27Z" fill="#4a4a4a"/><rect x="36.30" y="30.30" width="5.60" height="5.80" fill="#4a4a4a" rx="0.5"/><rect x="37.50" y="30.90" width="3.20" height="1.60" fill="#c8c8c8"/><rect x="37.80" y="33.90" width="2.60" height="1.60" fill="#c8c8c8"/><path d="M50.6 32.6l2.2-2v1.2c2.6 0 3.6 1.6 3.3 4.2c-.5-1.7-1.5-2.3-3.3-2.3v1.1z" fill="#4a4a4a"/><path d="M58.30 32.58H60.90L59.60 34.27Z" fill="#4a4a4a"/><path d="M72.3 32.6l-2.2-2v1.2c-2.6 0-3.6 1.6-3.3 4.2c.5-1.7 1.5-2.3 3.3-2.3v1.1z" fill="#a3a3a3"/><path d="M74.80 32.58H77.40L76.10 34.27Z" fill="#a3a3a3"/><path d="M275.3 32.4l3-1.2 3 1.2v3.2l-3 1.4-3-1.4z" fill="#555"/><path d="M275.3 32.4l3 1.2 3-1.2M278.3 33.6V37" fill="none" stroke="#ddd" stroke-width="0.4"/><text x="284.60" y="36.24" font-size="5.4" fill="#3c3c3c" textLength="63.60" lengthAdjust="spacingAndGlyphs">ESTANTE PARA PLATOS v1*</text><path d="M543.2 32.1l3.6 3.8M546.8 32.1l-3.6 3.8" fill="none" stroke="#666" stroke-width="0.6"/><path d="M554 33.9h5.4M556.7 31.2v5.4" fill="none" stroke="#6a6a6a" stroke-width="0.9"/><circle cx="571.00" cy="33.50" r="3.00" fill="none" stroke="#444" stroke-width="1.0"/><path d="M569.5 32.4a2 2 0 0 1 3.4 1.6" fill="none" stroke="#444" stroke-width="0.7"/><circle cx="585.00" cy="33.50" r="3.30" fill="#666"/><path d="M585 31.7v2l1.4.6" fill="none" stroke="#c8c8c8" stroke-width="0.6"/><path d="M596.2 36h5.2c-1-1-.9-2-.9-3.2a1.7 1.7 0 0 0-3.4 0c0 1.2.1 2.2-.9 3.2zM598 36.4h1.6v.6h-1.6z" fill="#555"/><circle cx="612.50" cy="33.50" r="3.30" fill="#444"/><text x="612.50" y="35.40" font-size="5" fill="#d8d8d8" font-weight="bold" text-anchor="middle">?</text><circle cx="629.00" cy="33.60" r="5.00" fill="#efefef"/><text x="629.00" y="35.00" font-size="3.6" fill="#888" text-anchor="middle">MC</text><text x="62.65" y="46.20" font-size="5.0" fill="#505050" textLength="15.50" lengthAdjust="spacingAndGlyphs">SOLIDO</text><text x="97.20" y="46.20" font-size="5.0" fill="#505050" textLength="22.80" lengthAdjust="spacingAndGlyphs">SUPERFICIE</text><text x="140.10" y="46.20" font-size="5.0" fill="#505050" textLength="14.60" lengthAdjust="spacingAndGlyphs">MALLA</text><text x="174.60" y="46.20" font-size="5.0" fill="#505050" textLength="14.60" lengthAdjust="spacingAndGlyphs">CHAPA</text><text x="209.20" y="46.20" font-size="5.0" fill="#505050" textLength="20.80" lengthAdjust="spacingAndGlyphs">PLÁSTICO</text><text x="249.90" y="46.20" font-size="5.0" fill="#505050" textLength="24.00" lengthAdjust="spacingAndGlyphs">UTILIDADES</text><rect x="288.20" y="40.20" width="28.40" height="9.20" fill="#cbe4f3"/><rect x="288.20" y="49.20" width="28.40" height="1.10" fill="#0696d7"/><text x="293.20" y="46.20" font-size="5.0" fill="#0696d7" font-weight="bold" textLength="18.20" lengthAdjust="spacingAndGlyphs">BOCETO</text><rect x="5.20" y="45.00" width="45.00" height="24.40" fill="#f3f3f3" stroke="#dcdcdc" stroke-width="0.6" rx="2"/><text x="17.30" y="58.57" font-size="5.2" fill="#333" font-weight="bold" textLength="15.70" lengthAdjust="spacingAndGlyphs">DISEÑO</text><path d="M35.40 56.24H37.80L36.60 57.80Z" fill="#333"/><path d="M58 61h8.6M65.6 54.6c2.6 0 4.9 1.3 4.9 3.2s-2 3.2-4.4 3.2" fill="none" stroke="#8c8c8c" stroke-width="0.9"/><rect x="56.80" y="60.20" width="1.60" height="1.60" fill="#3a9fe6"/><rect x="65.60" y="60.20" width="1.60" height="1.60" fill="#3a9fe6"/><rect x="65.00" y="53.80" width="1.60" height="1.60" fill="#3a9fe6"/><rect x="75.60" y="53.60" width="11.60" height="8.20" fill="none" stroke="#8c8c8c" stroke-width="0.9"/><rect x="74.80" y="52.80" width="1.60" height="1.60" fill="#3a9fe6"/><rect x="86.40" y="61.00" width="1.60" height="1.60" fill="#3a9fe6"/><rect x="91.80" y="42.90" width="0.00" height="0.00" fill="none"/><rect x="91.80" y="50.00" width="15.80" height="15.40" fill="#0696d7"/><path d="M99.6 52.4l-5.8 11.4h5.8zM99.6 52.4l5.6 11.4h-5.6" fill="none" stroke="#d5ecf9" stroke-width="0.8"/><path d="M111 52.2v11.2M124.2 52.2v11.2" fill="none" stroke="#8c8c8c" stroke-width="1.0"/><path d="M112 55.6h11.4" fill="none" stroke="#3a9fe6" stroke-width="0.9"/><rect x="111.40" y="54.90" width="1.50" height="1.50" fill="#3a9fe6"/><rect x="122.40" y="54.90" width="1.50" height="1.50" fill="#3a9fe6"/><path d="M129.3 63.6c0-6 1.2-8 3.4-8s2.6 4.6 5.4 4.6 3.2-5 3.3-8.6" fill="none" stroke="#8c8c8c" stroke-width="0.9"/><rect x="128.50" y="63.00" width="1.60" height="1.60" fill="#3a9fe6"/><rect x="131.80" y="54.80" width="1.60" height="1.60" fill="#3a9fe6"/><rect x="138.00" y="59.40" width="1.60" height="1.60" fill="#3a9fe6"/><rect x="140.60" y="50.80" width="1.60" height="1.60" fill="#3a9fe6"/><path d="M151.6 64.2v-4.4" fill="none" stroke="#8c8c8c" stroke-width="0.9"/><path d="M151.6 60c0-5 2.6-8.4 8-8.4" fill="none" stroke="#3a9fe6" stroke-width="1.0"/><path d="M159.6 51.6h4.6" fill="none" stroke="#8c8c8c" stroke-width="0.9"/><path d="M169.2 52.4h5" fill="none" stroke="#3a9fe6" stroke-width="0.8" stroke-dasharray="1.2 0.8"/><path d="M178.8 52.2h3.6" fill="none" stroke="#8c8c8c" stroke-width="0.8"/><path d="M177 51.8l-.6 9M172.4 54.4l6.8 7" fill="none" stroke="#1e1e1e" stroke-width="1.6"/><circle cx="176.50" cy="62.70" r="1.50" fill="none" stroke="#1e1e1e" stroke-width="1.0"/><circle cx="180.00" cy="61.00" r="1.50" fill="none" stroke="#1e1e1e" stroke-width="1.0"/><path d="M200.4 53h-8.6a4.9 4.9 0 0 0 0 9.8h8.6" fill="none" stroke="#3a9fe6" stroke-width="1.1"/><path d="M200.4 55.6h-8a2.3 2.3 0 0 0 0 4.6h8" fill="none" stroke="#8c8c8c" stroke-width="0.9"/><rect x="214.40" y="52.60" width="2.60" height="6.20" fill="#c9c9c9"/><path d="M214.6 54.2h2.2M214.6 56h2.2M214.6 57.6h2.2" fill="none" stroke="#d9464d" stroke-width="0.5"/><path d="M212.8 60.2h6.2" fill="none" stroke="#555" stroke-width="0.7"/><path d="M212.8 61.2h6.6l-.8 2.2-.9-1.6-.9 1.6-.9-1.6-.9 1.6-.9-1.6z" fill="#d9464d"/><path d="M227.9 51.6v12.4" fill="none" stroke="#f3d3d5" stroke-width="1.2"/><path d="M228 63.7h12.6" fill="none" stroke="#e0e0e0" stroke-width="1.5"/><rect x="227.10" y="62.60" width="1.60" height="1.60" fill="#f0c6c8"/><circle cx="250.60" cy="59.00" r="5.20" fill="none" stroke="#f0c6c8" stroke-width="0.8"/><path d="M250 51.4l8 8.6" fill="none" stroke="#dcdcdc" stroke-width="0.8"/><rect x="265.70" y="54.70" width="8.60" height="1.90" fill="#d9464d"/><rect x="265.70" y="58.80" width="8.60" height="1.90" fill="#555"/><path d="M283.2 60.6l8-7.6" fill="none" stroke="#d9464d" stroke-width="0.9"/><path d="M285.2 62.6l8-7.6" fill="none" stroke="#8c8c8c" stroke-width="0.9"/><path d="M300.4 54.4l8.4 8.4" fill="none" stroke="#f0c6c8" stroke-width="0.9"/><path d="M304.8 58.6l6-6" fill="none" stroke="#dcdcdc" stroke-width="0.9"/><path d="M320.8 57.2v-1.8a2.7 2.7 0 0 1 5.4 0v1.8" fill="none" stroke="#d9464d" stroke-width="1.1"/><rect x="318.30" y="57.20" width="10.40" height="7.40" fill="#df6a70" rx="0.8"/><rect x="323.10" y="59.40" width="0.80" height="2.40" fill="#f6d6d8"/><path d="M341.6 54.2l5.4 9h-10.8z" fill="none" stroke="#f0c6c8" stroke-width="1.0"/><circle cx="359.60" cy="57.90" r="5.70" fill="none" stroke="#f1c4c6" stroke-width="0.7"/><circle cx="359.60" cy="57.90" r="2.70" fill="none" stroke="#dedede" stroke-width="0.9"/><path d="M377.4 58l5.8-5.6" fill="none" stroke="#d9464d" stroke-width="0.8"/><path d="M371.6 63.4l5.8-5.4" fill="none" stroke="#555" stroke-width="0.8"/><path d="M371.6 54.8l3 2.4" fill="none" stroke="#222" stroke-width="0.7"/><path d="M373.4 55.8l2.6.4-.6 2.4z" fill="#222"/><path d="M392.6 53.6h-2.6v8.4h2.6" fill="none" stroke="#f0c6c8" stroke-width="0.9"/><path d="M398 53.6h2.6v8.4h-2.6" fill="none" stroke="#dcdcdc" stroke-width="0.9"/><path d="M395.3 52v12" fill="none" stroke="#f0c6c8" stroke-width="0.7" stroke-dasharray="2.2 0.8"/><path d="M410.2 52.6l8.2 8.4" fill="none" stroke="#f0c6c8" stroke-width="0.9"/><path d="M408.2 56c3.4-.4 5.6 1.6 5.8 6.2" fill="none" stroke="#dcdcdc" stroke-width="0.8"/><rect x="441.30" y="57.60" width="11.60" height="3.40" fill="#f0a30a"/><rect x="441.30" y="58.80" width="11.60" height="0.70" fill="#c97f00"/><path d="M441.6 54.4v3M452.6 54.4v3M442 55.9h10.2" fill="none" stroke="#666" stroke-width="0.6"/><path d="M478 52.4h9.2v8l-2.6 3h-8.8v-8.6z" fill="#e9e9e9" stroke="#9a9a9a" stroke-width="0.6"/><path d="M475.8 55h9v8.4M484.8 55l2.4-2.6" fill="none" stroke="#b5b5b5" stroke-width="0.5"/><path d="M475 59.2c1-1.8 2.4-2.2 4-2.2v-1.2l2.6 2.2-2.6 2.2v-1.2c-1.6 0-2.8.2-4 .2z" fill="#333"/><rect x="493.00" y="51.60" width="12.00" height="12.00" fill="#4d9fe0"/><path d="M493 63.6v-3.4l3.4-3.6 3 3 2-1.6 3.6 3.2v2.4z" fill="#2f79bb"/><circle cx="501.80" cy="54.80" r="1.10" fill="#fbe9a6"/><rect x="525.00" y="50.00" width="15.90" height="15.60" fill="#0696d7"/><rect x="526.60" y="51.60" width="10.60" height="9.40" fill="none" stroke="#38c17a" stroke-width="0.6" stroke-dasharray="0.9 0.9"/><path d="M534.9 57.2v6.4l1.5-1.3 1 2.2.9-.4-1-2.1h1.9z" fill="#fff"/><rect x="557.20" y="49.00" width="53.00" height="25.00" fill="#cde6f4"/><circle cx="583.80" cy="57.90" r="6.60" fill="#57b811"/><path d="M580.2 57.8l2.6 2.6 4.8-5" fill="none" stroke="#fff" stroke-width="1.6"/><text x="89.90" y="71.74" font-size="5.1" fill="#505050" textLength="14.00" lengthAdjust="spacingAndGlyphs">CREAR</text><path d="M105.50 69.30H107.70L106.60 70.73Z" fill="#222"/><text x="161.90" y="71.74" font-size="5.1" fill="#505050" textLength="22.60" lengthAdjust="spacingAndGlyphs">MODIFICAR</text><path d="M186.00 69.30H188.20L187.10 70.73Z" fill="#222"/><text x="295.30" y="71.74" font-size="5.1" fill="#505050" textLength="32.80" lengthAdjust="spacingAndGlyphs">RESTRICCIONES</text><path d="M329.60 69.30H331.80L330.70 70.73Z" fill="#222"/><text x="430.00" y="71.74" font-size="5.1" fill="#505050" textLength="30.90" lengthAdjust="spacingAndGlyphs">INSPECCIONAR</text><path d="M462.20 69.30H464.40L463.30 70.73Z" fill="#222"/><text x="477.50" y="71.74" font-size="5.1" fill="#505050" textLength="20.20" lengthAdjust="spacingAndGlyphs">INSERTAR</text><path d="M499.20 69.30H501.40L500.30 70.73Z" fill="#222"/><text x="516.00" y="71.74" font-size="5.1" fill="#505050" textLength="29.40" lengthAdjust="spacingAndGlyphs">SELECCIONAR</text><path d="M546.70 69.30H548.90L547.80 70.73Z" fill="#222"/><text x="561.30" y="71.74" font-size="5.1" fill="#505050" textLength="40.00" lengthAdjust="spacingAndGlyphs">TERMINAR BOCETO</text><path d="M602.70 69.30H604.90L603.80 70.73Z" fill="#222"/><line x1="146.50" y1="51.40" x2="146.50" y2="72.20" stroke="#dedede" stroke-width="0.7"/><line x1="204.40" y1="51.40" x2="204.40" y2="72.20" stroke="#dedede" stroke-width="0.7"/><line x1="424.40" y1="51.40" x2="424.40" y2="72.20" stroke="#dedede" stroke-width="0.7"/><line x1="469.40" y1="51.40" x2="469.40" y2="72.20" stroke="#dedede" stroke-width="0.7"/><line x1="509.80" y1="51.40" x2="509.80" y2="72.20" stroke="#dedede" stroke-width="0.7"/><g><rect x="0.00" y="74.00" width="640.00" height="265.50" fill="#ffffff"/><path d="M18.0 74V339.5M28.8 74V339.5M39.6 74V339.5M50.4 74V339.5M72.0 74V339.5M82.8 74V339.5M93.6 74V339.5M104.4 74V339.5M126.0 74V339.5M136.8 74V339.5M147.6 74V339.5M158.4 74V339.5M180.0 74V339.5M190.8 74V339.5M201.6 74V339.5M212.4 74V339.5M234.0 74V339.5M244.8 74V339.5M255.6 74V339.5M266.4 74V339.5M288.0 74V339.5M298.8 74V339.5M309.6 74V339.5M320.4 74V339.5M342.0 74V339.5M352.8 74V339.5M363.6 74V339.5M374.4 74V339.5M396.0 74V339.5M406.8 74V339.5M417.6 74V339.5M428.4 74V339.5M450.0 74V339.5M460.8 74V339.5M471.6 74V339.5M482.4 74V339.5M504.0 74V339.5M514.8 74V339.5M525.6 74V339.5M536.4 74V339.5M558.0 74V339.5M568.8 74V339.5M579.6 74V339.5M590.4 74V339.5M612.0 74V339.5M622.8 74V339.5M633.6 74V339.5M0 322.6H640M0 311.8H640M0 301.0H640M0 290.2H640M0 268.6H640M0 257.8H640M0 247.0H640M0 236.2H640M0 214.6H640M0 203.8H640M0 193.0H640M0 182.2H640M0 160.6H640M0 149.8H640M0 139.0H640M0 128.2H640M0 106.6H640M0 95.8H640M0 85.0H640M0 74.2H640" fill="none" stroke="#f5f5f5" stroke-width="0.9"/><path d="M61.2 74V339.5M115.2 74V339.5M169.2 74V339.5M223.2 74V339.5M277.2 74V339.5M331.2 74V339.5M385.2 74V339.5M439.2 74V339.5M493.2 74V339.5M547.2 74V339.5M601.2 74V339.5M0 279.4H640M0 225.4H640M0 171.4H640M0 117.4H640" fill="none" stroke="#e0e0e0" stroke-width="1.0"/><line x1="7.40" y1="74.00" x2="7.40" y2="339.50" stroke="#a8eca8" stroke-width="1.1"/><line x1="0.00" y1="333.40" x2="640.00" y2="333.40" stroke="#f6b4b4" stroke-width="1.0"/><rect x="1.60" y="75.80" width="125.20" height="9.90" fill="#f1f1f1" stroke="#e2e2e2" stroke-width="0.5"/><path d="M5.6 79.6v2l-1.6-1zM7.6 79.6v2l-1.6-1z" fill="#222"/><text x="12.00" y="82.54" font-size="5.1" fill="#9a9a9a" textLength="27.60" lengthAdjust="spacingAndGlyphs">NAVEGADOR</text><circle cx="119.70" cy="80.80" r="1.70" fill="#222"/><rect x="124.30" y="78.80" width="0.70" height="3.80" fill="#d0d0d0"/><rect x="17.00" y="88.20" width="98.20" height="8.40" fill="#f3f3f3"/><path d="M8.8 94.2h4.6v-4.4z" fill="#555"/><path d="M9.6 93.2l3.4-3.2M10.8 94l2.4-2.2" fill="none" stroke="#ddd" stroke-width="0.4"/><path d="M18.0 92.4q3.2-3.6 6.4 0q-3.2 3.6-6.4 0z" fill="none" stroke="#8a8a8a" stroke-width="0.9"/><circle cx="21.20" cy="92.40" r="1.35" fill="#8a8a8a"/><rect x="27.20" y="89.00" width="77.00" height="6.80" fill="#8c8c8c"/><rect x="29.40" y="89.70" width="4.20" height="5.20" fill="#f4f4f4" stroke="#d0d0d0" stroke-width="0.4" rx="0.6"/><text x="40.60" y="94.30" font-size="5.0" fill="#fff" font-weight="bold" textLength="58.60" lengthAdjust="spacingAndGlyphs">ESTANTE PARA PLATOS v1</text><circle cx="108.90" cy="92.50" r="2.50" fill="#fff" stroke="#555" stroke-width="0.6"/><circle cx="108.90" cy="92.50" r="0.90" fill="#333"/><rect x="24.20" y="98.40" width="75.80" height="7.80" fill="#f2f2f2"/><path d="M16.6 100.2v4.2l1.6 0l2-2.1l-2-2.1z" fill="none" stroke="#555" stroke-width="0.7"/><circle cx="28.60" cy="102.30" r="2.20" fill="none" stroke="#777" stroke-width="1.3"/><circle cx="28.60" cy="102.30" r="3.00" fill="none" stroke="#777" stroke-width="0.9" stroke-dasharray="1 1.36"/><text x="38.00" y="104.30" font-size="5.0" fill="#4a4a4a" textLength="58.20" lengthAdjust="spacingAndGlyphs">Configuración del documento</text><rect x="24.20" y="108.40" width="54.00" height="7.80" fill="#f2f2f2"/><path d="M16.6 110.2v4.2l1.6 0l2-2.1l-2-2.1z" fill="none" stroke="#555" stroke-width="0.7"/><path d="M25.4 114.8v-5h2.4l.7.9h3.3v4.1z" fill="#8a8a8a"/><line x1="28.50" y1="110.70" x2="28.50" y2="114.80" stroke="#a8a8a8" stroke-width="0.4"/><text x="38.00" y="114.30" font-size="5.0" fill="#4a4a4a" textLength="35.60" lengthAdjust="spacingAndGlyphs">Vistas guardadas</text><rect x="24.20" y="118.40" width="40.80" height="7.80" fill="#f2f2f2"/><path d="M16.6 120.2v4.2l1.6 0l2-2.1l-2-2.1z" fill="none" stroke="#555" stroke-width="0.7"/><path d="M25.4 122.3q3.2-3.6 6.4 0q-3.2 3.6-6.4 0z" fill="none" stroke="#c8c8c8" stroke-width="0.9"/><circle cx="28.60" cy="122.30" r="1.35" fill="#c8c8c8"/><path d="M36.0 124.8v-5h2.4l.7.9h3.3v4.1z" fill="#8a8a8a"/><line x1="39.10" y1="120.70" x2="39.10" y2="124.80" stroke="#a8a8a8" stroke-width="0.4"/><text x="48.20" y="124.30" font-size="5.0" fill="#4a4a4a" textLength="13.80" lengthAdjust="spacingAndGlyphs">Origen</text><rect x="24.20" y="128.20" width="44.60" height="7.80" fill="#f2f2f2"/><path d="M16.6 130.0v4.2l1.6 0l2-2.1l-2-2.1z" fill="none" stroke="#555" stroke-width="0.7"/><path d="M25.4 132.1q3.2-3.6 6.4 0q-3.2 3.6-6.4 0z" fill="none" stroke="#777" stroke-width="0.9"/><circle cx="28.60" cy="132.10" r="1.35" fill="#777"/><path d="M36.0 134.6v-5h2.4l.7.9h3.3v4.1z" fill="#8a8a8a"/><line x1="39.10" y1="130.50" x2="39.10" y2="134.60" stroke="#a8a8a8" stroke-width="0.4"/><text x="48.20" y="134.10" font-size="5.0" fill="#4a4a4a" textLength="16.80" lengthAdjust="spacingAndGlyphs">Bocetos</text><line x1="34.40" y1="134.60" x2="68.80" y2="134.60" stroke="#3c6cc8" stroke-width="0.7" stroke-dasharray="0.9 0.9"/><line x1="305.60" y1="132.02" x2="342.60" y2="132.02" stroke="#8a8a8a" stroke-width="0.8"/><line x1="306.30" y1="131.82" x2="306.30" y2="144.75" stroke="#1c1c1c" stroke-width="0.7"/><path d="M306.30 132.12l-1.25 3.60h2.50z" fill="#111"/><path d="M306.30 144.45l-1.25 -3.60h2.50z" fill="#111"/><text transform="translate(301.60 138.20) rotate(-90)" x="-7.30" y="2.45" font-size="6.8" fill="#555" textLength="14.60" lengthAdjust="spacingAndGlyphs">12.00</text><line x1="407.60" y1="145.05" x2="446.40" y2="145.05" stroke="#8a8a8a" stroke-width="0.8"/><line x1="410.00" y1="131.82" x2="410.00" y2="144.75" stroke="#1c1c1c" stroke-width="0.7"/><path d="M410.00 132.12l-1.25 3.60h2.50z" fill="#111"/><path d="M410.00 144.45l-1.25 -3.60h2.50z" fill="#111"/><text transform="translate(414.30 138.60) rotate(90)" x="-7.30" y="2.45" font-size="6.8" fill="#555" textLength="14.60" lengthAdjust="spacingAndGlyphs">12.00</text><line x1="293.10" y1="146.35" x2="293.10" y2="186.00" stroke="#8a8a8a" stroke-width="0.8"/><line x1="344.87" y1="144.75" x2="344.87" y2="186.00" stroke="#8a8a8a" stroke-width="0.8"/><line x1="293.10" y1="183.80" x2="344.87" y2="183.80" stroke="#1c1c1c" stroke-width="0.7"/><path d="M293.40 183.80l4.20 -1.25v2.50z" fill="#111"/><path d="M344.57 183.80l-4.20 -1.25v2.50z" fill="#111"/><text x="311.00" y="181.25" font-size="6.8" fill="#5a5a5a" textLength="16.00" lengthAdjust="spacingAndGlyphs">48.00</text><line x1="448.42" y1="144.75" x2="448.42" y2="186.00" stroke="#8a8a8a" stroke-width="0.8"/><line x1="344.87" y1="170.60" x2="448.42" y2="170.60" stroke="#1c1c1c" stroke-width="0.7"/><path d="M345.17 170.60l4.20 -1.25v2.50z" fill="#111"/><path d="M448.12 170.60l-4.20 -1.25v2.50z" fill="#111"/><text x="388.90" y="168.45" font-size="6.8" fill="#5a5a5a" textLength="16.00" lengthAdjust="spacingAndGlyphs">96.00</text><line x1="448.42" y1="183.80" x2="551.96" y2="183.80" stroke="#1c1c1c" stroke-width="0.7"/><path d="M448.72 183.80l4.20 -1.25v2.50z" fill="#111"/><path d="M551.66 183.80l-4.20 -1.25v2.50z" fill="#111"/><text x="492.40" y="181.25" font-size="6.8" fill="#5a5a5a" textLength="16.00" lengthAdjust="spacingAndGlyphs">96.00</text><line x1="512.90" y1="144.75" x2="512.90" y2="198.60" stroke="#1c1c1c" stroke-width="0.7"/><path d="M512.90 145.05l-1.25 4.20h2.50z" fill="#111"/><path d="M512.90 198.30l-1.25 -4.20h2.50z" fill="#111"/><text transform="translate(518.00 171.80) rotate(90)" x="-7.80" y="2.45" font-size="6.8" fill="#555" textLength="15.60" lengthAdjust="spacingAndGlyphs">50.00</text><line x1="526.30" y1="198.60" x2="526.30" y2="252.46" stroke="#1c1c1c" stroke-width="0.7"/><path d="M526.30 198.91l-1.25 4.20h2.50z" fill="#111"/><path d="M526.30 252.16l-1.25 -4.20h2.50z" fill="#111"/><text transform="translate(531.50 225.80) rotate(90)" x="-7.80" y="2.45" font-size="6.8" fill="#555" textLength="15.60" lengthAdjust="spacingAndGlyphs">50.00</text><line x1="512.90" y1="252.46" x2="512.90" y2="306.31" stroke="#1c1c1c" stroke-width="0.7"/><path d="M512.90 252.76l-1.25 4.20h2.50z" fill="#111"/><path d="M512.90 306.01l-1.25 -4.20h2.50z" fill="#111"/><text transform="translate(518.00 280.20) rotate(90)" x="-7.80" y="2.45" font-size="6.8" fill="#555" textLength="15.60" lengthAdjust="spacingAndGlyphs">50.00</text><line x1="510.40" y1="198.60" x2="551.96" y2="198.60" stroke="#333" stroke-width="0.8"/><line x1="510.40" y1="252.46" x2="551.96" y2="252.46" stroke="#333" stroke-width="0.8"/><line x1="551.66" y1="201.00" x2="551.66" y2="249.40" stroke="#858585" stroke-width="1.6"/><text x="551.00" y="211.65" font-size="6.8" fill="#5a5a5a" textLength="15.40" lengthAdjust="spacingAndGlyphs">12.00</text><line x1="551.96" y1="213.90" x2="564.91" y2="213.90" stroke="#1c1c1c" stroke-width="0.7"/><path d="M552.26 213.90l3.40 -1.25v2.50z" fill="#111"/><path d="M564.61 213.90l-3.40 -1.25v2.50z" fill="#111"/><text x="551.00" y="235.05" font-size="6.8" fill="#5a5a5a" textLength="15.40" lengthAdjust="spacingAndGlyphs">12.00</text><line x1="551.96" y1="237.30" x2="564.91" y2="237.30" stroke="#1c1c1c" stroke-width="0.7"/><path d="M552.26 237.30l3.40 -1.25v2.50z" fill="#111"/><path d="M564.61 237.30l-3.40 -1.25v2.50z" fill="#111"/><line x1="34.24" y1="295.20" x2="34.24" y2="306.31" stroke="#777" stroke-width="0.9"/><line x1="34.24" y1="298.00" x2="551.96" y2="298.00" stroke="#969696" stroke-width="1.9"/><path d="M34.54 298.10l4.60 -1.40v2.80z" fill="#111"/><path d="M551.66 298.10l-4.60 -1.40v2.80z" fill="#111"/><text x="279.80" y="295.85" font-size="6.8" fill="#5a5a5a" textLength="19.20" lengthAdjust="spacingAndGlyphs">480.00</text><path d="M293.10 144.75L241.33 144.75L241.33 131.82L137.78 131.82L137.78 144.75L34.24 144.75L34.24 198.60L21.29 198.60L21.29 252.46L34.24 252.46L34.24 306.31" fill="none" stroke="#9c9c9c" stroke-width="0.9"/><line x1="34.24" y1="306.31" x2="551.96" y2="306.31" stroke="#8fcdf0" stroke-width="1.3"/><path d="M293.10 144.75L344.87 144.75L344.87 131.82L448.42 131.82L448.42 144.75L551.96 144.75L551.96 198.60L564.91 198.60L564.91 252.46L551.96 252.46L551.96 306.31" fill="none" stroke="#1c86f2" stroke-width="2.0" stroke-linejoin="miter"/><g transform="translate(342.02 141.90) rotate(135.0)"><path d="M-2.4 0h4.8M0 0v6.8" fill="none" stroke="#a2a2a2" stroke-width="1.2"/></g><g transform="translate(347.72 134.67) rotate(-45.0)"><path d="M-2.4 0h4.8M0 0v6.8" fill="none" stroke="#a2a2a2" stroke-width="1.2"/></g><g transform="translate(445.57 134.67) rotate(45.0)"><path d="M-2.4 0h4.8M0 0v6.8" fill="none" stroke="#a2a2a2" stroke-width="1.2"/></g><g transform="translate(451.27 141.90) rotate(-135.0)"><path d="M-2.4 0h4.8M0 0v6.8" fill="none" stroke="#a2a2a2" stroke-width="1.2"/></g><g transform="translate(549.11 147.60) rotate(45.0)"><path d="M-2.4 0h4.8M0 0v6.8" fill="none" stroke="#a2a2a2" stroke-width="1.2"/></g><g transform="translate(554.81 195.75) rotate(-135.0)"><path d="M-2.4 0h4.8M0 0v6.8" fill="none" stroke="#a2a2a2" stroke-width="1.2"/></g><g transform="translate(562.06 201.45) rotate(45.0)"><path d="M-2.4 0h4.8M0 0v6.8" fill="none" stroke="#a2a2a2" stroke-width="1.2"/></g><g transform="translate(562.06 249.61) rotate(135.0)"><path d="M-2.4 0h4.8M0 0v6.8" fill="none" stroke="#a2a2a2" stroke-width="1.2"/></g><g transform="translate(554.81 255.31) rotate(-45.0)"><path d="M-2.4 0h4.8M0 0v6.8" fill="none" stroke="#a2a2a2" stroke-width="1.2"/></g><g transform="translate(549.11 303.46) rotate(135.0)"><path d="M-2.4 0h4.8M0 0v6.8" fill="none" stroke="#a2a2a2" stroke-width="1.2"/></g><path d="M288.2 299.4l-3.1 5.3h6.2z" fill="none" stroke="#a8a8a8" stroke-width="1.3"/><g transform="translate(295.95 303.46) rotate(-135.0)"><path d="M-2.4 0h4.8M0 0v6.8" fill="none" stroke="#a2a2a2" stroke-width="1.2"/></g><rect x="288.40" y="308.80" width="9.00" height="3.40" fill="#a9a9a9" rx="0.9"/><line x1="289.40" y1="310.50" x2="296.40" y2="310.50" stroke="#e4e4e4" stroke-width="0.6"/><line x1="293.10" y1="245.00" x2="293.10" y2="306.31" stroke="#9fc3f2" stroke-width="1.3"/><line x1="293.10" y1="245.00" x2="293.10" y2="306.31" stroke="#3f87e8" stroke-width="1.4" stroke-dasharray="3.9 1.2"/><circle cx="293.10" cy="144.75" r="1.50" fill="#fff" stroke="#8a8a8a" stroke-width="0.6"/><circle cx="34.24" cy="306.51" r="1.50" fill="#fff" stroke="#8a8a8a" stroke-width="0.6"/><circle cx="293.10" cy="243.90" r="1.50" fill="#fff" stroke="#8a8a8a" stroke-width="0.6"/><rect x="606.50" y="88.30" width="19.20" height="19.20" fill="#ececee" stroke="#d4d4d8" stroke-width="0.7"/><rect x="610.00" y="91.80" width="12.50" height="12.40" fill="#e2e5ec"/><text x="608.30" y="99.57" font-size="3.8" fill="#a2a2aa" textLength="15.90" lengthAdjust="spacingAndGlyphs">SUPERIOR</text><rect x="606.70" y="83.40" width="2.10" height="4.90" fill="#a8f0a8"/><path d="M604.2 107.4h1.8l-1.8 2.2h1.8" fill="none" stroke="#4a4aff" stroke-width="0.6"/><path d="M627.6 105.2l1.8 2.4M629.4 105.2l-1.8 2.4" fill="none" stroke="#ff6a6a" stroke-width="0.6"/><rect x="629.50" y="121.00" width="8.60" height="78.00" fill="#f0f0f0"/><path d="M632.4 125.6l1.3-.8v1.6zM634 125.6l1.3-.8v1.6z" fill="#222"/><text transform="translate(635.4 195.6) rotate(-90)" font-size="5.0" fill="#555" textLength="41.5" lengthAdjust="spacingAndGlyphs">PALETA DE BOCETO</text><rect x="523.10" y="120.50" width="104.65" height="50.90" fill="#f0f0f0" stroke="#dcdcdc" stroke-width="0.6"/><line x1="523.10" y1="130.50" x2="627.75" y2="130.50" stroke="#dcdcdc" stroke-width="0.6"/><rect x="524.60" y="123.60" width="0.70" height="3.80" fill="#c8c8c8"/><circle cx="530.00" cy="125.50" r="1.90" fill="#222"/><text x="534.00" y="127.36" font-size="4.9" fill="#777" textLength="18.90" lengthAdjust="spacingAndGlyphs">SIMETRÍA</text><path d="M621.6 125.6l1.3-.8v1.6zM623.2 125.6l1.3-.8v1.6z" fill="#222" transform="rotate(180 623 125.6)"/><text x="528.75" y="139.20" font-size="5.0" fill="#4a4a4a" textLength="15.25" lengthAdjust="spacingAndGlyphs">Objetos</text><rect x="563.75" y="132.60" width="37.50" height="9.40" fill="#ffffff"/><path d="M566.40 134.30v5.4l1.3-1.1.9 1.9.8-.4-.9-1.8h1.6z" fill="#fff" stroke="#444" stroke-width="0.4"/><text x="572.10" y="139.30" font-size="5.0" fill="#555" textLength="26.90" lengthAdjust="spacingAndGlyphs">10 seleccio...</text><path d="M606.8 135.8l3.2 3.3M610 135.8l-3.2 3.3" fill="none" stroke="#222" stroke-width="0.7"/><text x="528.75" y="151.70" font-size="5.0" fill="#4a4a4a" textLength="29.00" lengthAdjust="spacingAndGlyphs">Eje de simetría</text><rect x="563.10" y="144.30" width="38.90" height="11.10" fill="#0696d7"/><path d="M566.40 147.00v5.4l1.3-1.1.9 1.9.8-.4-.9-1.8h1.6z" fill="#e8f3fa" stroke="#333" stroke-width="0.4"/><text x="572.10" y="151.80" font-size="5.0" fill="#bfe2f5" textLength="26.90" lengthAdjust="spacingAndGlyphs">1 seleccion...</text><path d="M606.8 148.3l3.2 3.3M610 148.3l-3.2 3.3" fill="none" stroke="#222" stroke-width="0.7"/><line x1="523.10" y1="156.40" x2="627.75" y2="156.40" stroke="#dadada" stroke-width="0.6"/><circle cx="529.40" cy="164.50" r="2.30" fill="#1c1c1c"/><rect x="529.10" y="163.90" width="0.60" height="1.90" fill="#ddd"/><rect x="568.50" y="160.10" width="25.00" height="8.20" fill="#e8e8e8" stroke="#cfcfcf" stroke-width="0.6" rx="0.6"/><text x="572.10" y="166.24" font-size="5.4" fill="#7a7a7a" textLength="17.30" lengthAdjust="spacingAndGlyphs">Aceptar</text><rect x="597.50" y="160.10" width="25.30" height="8.20" fill="#e8e8e8" stroke="#cfcfcf" stroke-width="0.6" rx="0.6"/><text x="599.75" y="166.24" font-size="5.4" fill="#7a7a7a" textLength="21.10" lengthAdjust="spacingAndGlyphs">Cancelar</text><rect x="270.20" y="327.90" width="98.80" height="9.60" fill="#f0f0f0"/><path d="M274.7 329.59999999999997v6.2M271.6 332.7h6.2" fill="none" stroke="#4a4a4a" stroke-width="0.9"/><circle cx="274.70" cy="332.70" r="1.70" fill="none" stroke="#4a4a4a" stroke-width="0.7"/><path d="M280.50 332.15H282.50L281.50 333.45Z" fill="#222"/><rect x="285.30" y="331.10" width="6.40" height="4.40" fill="#8c8f99" rx="0.5"/><path d="M286.2 331.09999999999997l1.2-1.6h2.2l1.2 1.6" fill="none" stroke="#666" stroke-width="0.6"/><rect x="286.60" y="332.30" width="3.80" height="1.60" fill="#c9ccd4"/><path d="M297.2 335.7c-1.2-1.4-1.6-2.6-1.2-3.4l1 .6v-2.6h.9v-.7h1v.3h1v.5h1v3.4c0 .9-.4 1.5-.7 1.9z" fill="#fafafa" stroke="#4a4a4a" stroke-width="0.6"/><circle cx="309.30" cy="332.10" r="2.00" fill="#e2edf7" stroke="#4a4a4a" stroke-width="0.7"/><path d="M310.8 333.59999999999997l1.8 1.9" fill="none" stroke="#222" stroke-width="1.0"/><path d="M312.6 329.9v1.8" fill="none" stroke="#4a4a4a" stroke-width="0.5"/><circle cx="320.40" cy="332.10" r="2.60" fill="#e6f0f8" stroke="#777" stroke-width="0.7"/><path d="M322.2 333.9l2.2 2.2" fill="none" stroke="#222" stroke-width="1.1"/><path d="M326.70 332.15H328.70L327.70 333.45Z" fill="#222"/><rect x="331.60" y="329.60" width="6.80" height="5.00" fill="#5b8fd4" stroke="#667" stroke-width="0.6" rx="0.4"/><path d="M333.6 334.7h2.8l.6 1.3h-4z" fill="#777"/><path d="M339.40 332.15H341.40L340.40 333.45Z" fill="#222"/><rect x="344.30" y="329.60" width="6.60" height="6.30" fill="#96989e" stroke="#7a7c82" stroke-width="0.4"/><path d="M352.30 332.15H354.30L353.30 333.45Z" fill="#222"/><rect x="357.20" y="329.90" width="6.60" height="5.40" fill="#4f7fc6" rx="0.3"/><path d="M357.2 332.59999999999997h6.6M359.4 329.9v5.4M361.6 329.9v5.4" fill="none" stroke="#cfdcf0" stroke-width="0.4"/><path d="M365.00 332.15H367.00L366.00 333.45Z" fill="#222"/><text x="531.70" y="334.26" font-size="4.6" fill="#222" font-weight="bold" textLength="99.30" lengthAdjust="spacingAndGlyphs">11 Curvas de boceto | Longitud : 495.797 mm</text><rect x="2.00" y="327.00" width="125.00" height="9.40" fill="#f1f1f1" stroke="#e4e4e4" stroke-width="0.4"/><rect x="2.00" y="336.20" width="125.00" height="1.20" fill="#2a2a2a"/><text x="12.00" y="333.33" font-size="4.8" fill="#8a8a8a" textLength="30.20" lengthAdjust="spacingAndGlyphs">COMENTARIOS</text><circle cx="119.70" cy="331.60" r="1.70" fill="#222"/><rect x="124.30" y="329.70" width="0.70" height="3.80" fill="#d0d0d0"/><rect x="0.00" y="339.40" width="640.00" height="20.70" fill="#f0f0f0"/><line x1="0.00" y1="339.40" x2="640.00" y2="339.40" stroke="#dcdcdc" stroke-width="0.7"/><path d="M4.6 347.4v5.2" fill="none" stroke="#2a2a2a" stroke-width="1.0"/><path d="M9.6 347.4v5.2l-4.2-2.6z" fill="#2a2a2a"/><path d="M19.4 347.6v4.8l-4-2.4zM15.6 349.1h-1.4v1.8h1.4z" fill="#2a2a2a"/><path d="M25.6 347.0v6l4.6-3z" fill="#2a2a2a"/><path d="M36.2 347.6v4.8l4-2.4zM40 349.1h1.4v1.8h-1.4z" fill="#2a2a2a"/><path d="M46.2 347.4v5.2l4.2-2.6z" fill="#2a2a2a"/><path d="M51.2 347.4v5.2" fill="none" stroke="#2a2a2a" stroke-width="1.0"/><rect x="59.00" y="345.00" width="10.20" height="10.20" fill="#1591d3"/><path d="M61.4 352.6h4.6v-4.4" fill="none" stroke="#79c2ea" stroke-width="0.6"/><path d="M65 351l2.4-2.6.8.8-2.4 2.6z" fill="#f3c84b"/><path d="M65.6 344.2h5.2l-1.8 2v10.4h-1.4v-10.4z" fill="#555"/><circle cx="631.00" cy="350.00" r="2.30" fill="none" stroke="#777" stroke-width="1.2"/><circle cx="631.00" cy="350.00" r="3.10" fill="none" stroke="#777" stroke-width="0.9" stroke-dasharray="1 1.43"/></g></g><g transform="translate(640 343)"><rect x="0.00" y="17.00" width="640.00" height="10.50" fill="#ffffff"/><line x1="270.00" y1="17.50" x2="370.00" y2="17.50" stroke="#e4e8ee" stroke-width="0.8"/><line x1="309.80" y1="17.50" x2="329.90" y2="17.50" stroke="#5aa6ea" stroke-width="1.0"/><rect x="1.60" y="18.60" width="5.20" height="6.40" fill="#fbd9b5" rx="0.6"/><path d="M3.2 24.2V20h2.6M3.2 22.1h2" fill="none" stroke="#e8761c" stroke-width="1.0"/><text x="9.20" y="24.12" font-size="5.6" fill="#2b2b2b" textLength="89.80" lengthAdjust="spacingAndGlyphs">Autodesk Fusion 360 (Licencia educativa)</text><line x1="587.60" y1="21.60" x2="592.40" y2="21.60" stroke="#222" stroke-width="0.7"/><rect x="607.20" y="19.90" width="3.80" height="3.80" fill="none" stroke="#222" stroke-width="0.7"/><path d="M608.2 19.9V19h3.8v3.8h-1" fill="none" stroke="#222" stroke-width="0.6"/><path d="M627 19.5l4.2 4.4M631.2 19.5l-4.2 4.4" fill="none" stroke="#222" stroke-width="0.7"/><rect x="0.00" y="27.00" width="640.00" height="1.20" fill="#a9a9a9"/><rect x="0.00" y="28.00" width="640.00" height="46.00" fill="#f0f0f0"/><rect x="0.00" y="28.20" width="80.30" height="11.80" fill="#c8c8c8"/><rect x="550.30" y="28.20" width="89.70" height="11.80" fill="#c8c8c8"/><rect x="550.30" y="28.20" width="12.70" height="11.80" fill="#b4b4b4"/><rect x="4.00" y="30.40" width="1.60" height="1.60" fill="#4a4a4a"/><rect x="4.00" y="32.50" width="1.60" height="1.60" fill="#4a4a4a"/><rect x="4.00" y="34.60" width="1.60" height="1.60" fill="#4a4a4a"/><rect x="6.10" y="30.40" width="1.60" height="1.60" fill="#4a4a4a"/><rect x="6.10" y="32.50" width="1.60" height="1.60" fill="#4a4a4a"/><rect x="6.10" y="34.60" width="1.60" height="1.60" fill="#4a4a4a"/><rect x="8.20" y="30.40" width="1.60" height="1.60" fill="#4a4a4a"/><rect x="8.20" y="32.50" width="1.60" height="1.60" fill="#4a4a4a"/><rect x="8.20" y="34.60" width="1.60" height="1.60" fill="#4a4a4a"/><path d="M17.3 30.2h3.2l1.9 1.9v4.7h-5.1z" fill="#4a4a4a"/><path d="M25.90 32.58H28.50L27.20 34.27Z" fill="#4a4a4a"/><rect x="36.30" y="30.30" width="5.60" height="5.80" fill="#4a4a4a" rx="0.5"/><rect x="37.50" y="30.90" width="3.20" height="1.60" fill="#c8c8c8"/><rect x="37.80" y="33.90" width="2.60" height="1.60" fill="#c8c8c8"/><path d="M50.6 32.6l2.2-2v1.2c2.6 0 3.6 1.6 3.3 4.2c-.5-1.7-1.5-2.3-3.3-2.3v1.1z" fill="#4a4a4a"/><path d="M58.30 32.58H60.90L59.60 34.27Z" fill="#4a4a4a"/><path d="M72.3 32.6l-2.2-2v1.2c-2.6 0-3.6 1.6-3.3 4.2c.5-1.7 1.5-2.3 3.3-2.3v1.1z" fill="#a3a3a3"/><path d="M74.80 32.58H77.40L76.10 34.27Z" fill="#a3a3a3"/><path d="M275.3 32.4l3-1.2 3 1.2v3.2l-3 1.4-3-1.4z" fill="#555"/><path d="M275.3 32.4l3 1.2 3-1.2M278.3 33.6V37" fill="none" stroke="#ddd" stroke-width="0.4"/><text x="284.60" y="36.24" font-size="5.4" fill="#3c3c3c" textLength="63.60" lengthAdjust="spacingAndGlyphs">ESTANTE PARA PLATOS v1*</text><path d="M543.2 32.1l3.6 3.8M546.8 32.1l-3.6 3.8" fill="none" stroke="#666" stroke-width="0.6"/><path d="M554 33.9h5.4M556.7 31.2v5.4" fill="none" stroke="#6a6a6a" stroke-width="0.9"/><circle cx="571.00" cy="33.50" r="3.00" fill="none" stroke="#444" stroke-width="1.0"/><path d="M569.5 32.4a2 2 0 0 1 3.4 1.6" fill="none" stroke="#444" stroke-width="0.7"/><circle cx="585.00" cy="33.50" r="3.30" fill="#666"/><path d="M585 31.7v2l1.4.6" fill="none" stroke="#c8c8c8" stroke-width="0.6"/><path d="M596.2 36h5.2c-1-1-.9-2-.9-3.2a1.7 1.7 0 0 0-3.4 0c0 1.2.1 2.2-.9 3.2zM598 36.4h1.6v.6h-1.6z" fill="#555"/><circle cx="612.50" cy="33.50" r="3.30" fill="#444"/><text x="612.50" y="35.40" font-size="5" fill="#d8d8d8" font-weight="bold" text-anchor="middle">?</text><circle cx="629.00" cy="33.60" r="5.00" fill="#efefef"/><text x="629.00" y="35.00" font-size="3.6" fill="#888" text-anchor="middle">MC</text><text x="62.65" y="46.20" font-size="5.0" fill="#505050" textLength="15.50" lengthAdjust="spacingAndGlyphs">SOLIDO</text><text x="97.20" y="46.20" font-size="5.0" fill="#505050" textLength="22.80" lengthAdjust="spacingAndGlyphs">SUPERFICIE</text><text x="140.10" y="46.20" font-size="5.0" fill="#505050" textLength="14.60" lengthAdjust="spacingAndGlyphs">MALLA</text><text x="174.60" y="46.20" font-size="5.0" fill="#505050" textLength="14.60" lengthAdjust="spacingAndGlyphs">CHAPA</text><text x="209.20" y="46.20" font-size="5.0" fill="#505050" textLength="20.80" lengthAdjust="spacingAndGlyphs">PLÁSTICO</text><text x="249.90" y="46.20" font-size="5.0" fill="#505050" textLength="24.00" lengthAdjust="spacingAndGlyphs">UTILIDADES</text><rect x="288.20" y="40.20" width="28.40" height="9.20" fill="#cbe4f3"/><rect x="288.20" y="49.20" width="28.40" height="1.10" fill="#0696d7"/><text x="293.20" y="46.20" font-size="5.0" fill="#0696d7" font-weight="bold" textLength="18.20" lengthAdjust="spacingAndGlyphs">BOCETO</text><rect x="5.20" y="45.00" width="45.00" height="24.40" fill="#f3f3f3" stroke="#dcdcdc" stroke-width="0.6" rx="2"/><text x="17.30" y="58.57" font-size="5.2" fill="#333" font-weight="bold" textLength="15.70" lengthAdjust="spacingAndGlyphs">DISEÑO</text><path d="M35.40 56.24H37.80L36.60 57.80Z" fill="#333"/><path d="M58 61h8.6M65.6 54.6c2.6 0 4.9 1.3 4.9 3.2s-2 3.2-4.4 3.2" fill="none" stroke="#8c8c8c" stroke-width="0.9"/><rect x="56.80" y="60.20" width="1.60" height="1.60" fill="#3a9fe6"/><rect x="65.60" y="60.20" width="1.60" height="1.60" fill="#3a9fe6"/><rect x="65.00" y="53.80" width="1.60" height="1.60" fill="#3a9fe6"/><rect x="75.60" y="53.60" width="11.60" height="8.20" fill="none" stroke="#8c8c8c" stroke-width="0.9"/><rect x="74.80" y="52.80" width="1.60" height="1.60" fill="#3a9fe6"/><rect x="86.40" y="61.00" width="1.60" height="1.60" fill="#3a9fe6"/><path d="M99.4 52.6l-6 11.2h6z" fill="none" stroke="#8c8c8c" stroke-width="0.9"/><path d="M99.4 52.6l6 11.2h-6z" fill="none" stroke="#3a9fe6" stroke-width="0.9"/><path d="M111 52.2v11.2M124.2 52.2v11.2" fill="none" stroke="#8c8c8c" stroke-width="1.0"/><path d="M112 55.6h11.4" fill="none" stroke="#3a9fe6" stroke-width="0.9"/><rect x="111.40" y="54.90" width="1.50" height="1.50" fill="#3a9fe6"/><rect x="122.40" y="54.90" width="1.50" height="1.50" fill="#3a9fe6"/><path d="M129.3 63.6c0-6 1.2-8 3.4-8s2.6 4.6 5.4 4.6 3.2-5 3.3-8.6" fill="none" stroke="#8c8c8c" stroke-width="0.9"/><rect x="128.50" y="63.00" width="1.60" height="1.60" fill="#3a9fe6"/><rect x="131.80" y="54.80" width="1.60" height="1.60" fill="#3a9fe6"/><rect x="138.00" y="59.40" width="1.60" height="1.60" fill="#3a9fe6"/><rect x="140.60" y="50.80" width="1.60" height="1.60" fill="#3a9fe6"/><path d="M151.6 64.2v-4.4" fill="none" stroke="#8c8c8c" stroke-width="0.9"/><path d="M151.6 60c0-5 2.6-8.4 8-8.4" fill="none" stroke="#3a9fe6" stroke-width="1.0"/><path d="M159.6 51.6h4.6" fill="none" stroke="#8c8c8c" stroke-width="0.9"/><path d="M169.2 52.4h5" fill="none" stroke="#3a9fe6" stroke-width="0.8" stroke-dasharray="1.2 0.8"/><path d="M178.8 52.2h3.6" fill="none" stroke="#8c8c8c" stroke-width="0.8"/><path d="M177 51.8l-.6 9M172.4 54.4l6.8 7" fill="none" stroke="#1e1e1e" stroke-width="1.6"/><circle cx="176.50" cy="62.70" r="1.50" fill="none" stroke="#1e1e1e" stroke-width="1.0"/><circle cx="180.00" cy="61.00" r="1.50" fill="none" stroke="#1e1e1e" stroke-width="1.0"/><path d="M200.4 53h-8.6a4.9 4.9 0 0 0 0 9.8h8.6" fill="none" stroke="#3a9fe6" stroke-width="1.1"/><path d="M200.4 55.6h-8a2.3 2.3 0 0 0 0 4.6h8" fill="none" stroke="#8c8c8c" stroke-width="0.9"/><rect x="214.40" y="52.60" width="2.60" height="6.20" fill="#c9c9c9"/><path d="M214.6 54.2h2.2M214.6 56h2.2M214.6 57.6h2.2" fill="none" stroke="#d9464d" stroke-width="0.5"/><path d="M212.8 60.2h6.2" fill="none" stroke="#555" stroke-width="0.7"/><path d="M212.8 61.2h6.6l-.8 2.2-.9-1.6-.9 1.6-.9-1.6-.9 1.6-.9-1.6z" fill="#d9464d"/><path d="M227.9 51.6v12.4" fill="none" stroke="#e58f95" stroke-width="1.2"/><path d="M228 63.7h12.6" fill="none" stroke="#b4b4b4" stroke-width="1.5"/><rect x="227.10" y="62.60" width="1.60" height="1.60" fill="#d9464d"/><circle cx="250.60" cy="59.00" r="5.20" fill="none" stroke="#d9464d" stroke-width="0.8"/><path d="M250 51.4l8 8.6" fill="none" stroke="#8c8c8c" stroke-width="0.8"/><rect x="265.70" y="54.70" width="8.60" height="1.90" fill="#d9464d"/><rect x="265.70" y="58.80" width="8.60" height="1.90" fill="#555"/><path d="M283.2 60.6l8-7.6" fill="none" stroke="#d9464d" stroke-width="0.9"/><path d="M285.2 62.6l8-7.6" fill="none" stroke="#8c8c8c" stroke-width="0.9"/><path d="M300.4 54.4l8.4 8.4" fill="none" stroke="#d9464d" stroke-width="0.9"/><path d="M304.8 58.6l6-6" fill="none" stroke="#8c8c8c" stroke-width="0.9"/><path d="M320.8 57.2v-1.8a2.7 2.7 0 0 1 5.4 0v1.8" fill="none" stroke="#d9464d" stroke-width="1.1"/><rect x="318.30" y="57.20" width="10.40" height="7.40" fill="#df6a70" rx="0.8"/><rect x="323.10" y="59.40" width="0.80" height="2.40" fill="#f6d6d8"/><path d="M341.6 54.2l5.4 9h-10.8z" fill="none" stroke="#d9464d" stroke-width="1.0"/><circle cx="359.60" cy="57.90" r="5.70" fill="none" stroke="#f1c4c6" stroke-width="0.7"/><circle cx="359.60" cy="57.90" r="2.70" fill="none" stroke="#dedede" stroke-width="0.9"/><path d="M377.4 58l5.8-5.6" fill="none" stroke="#d9464d" stroke-width="0.8"/><path d="M371.6 63.4l5.8-5.4" fill="none" stroke="#555" stroke-width="0.8"/><path d="M371.6 54.8l3 2.4" fill="none" stroke="#222" stroke-width="0.7"/><path d="M373.4 55.8l2.6.4-.6 2.4z" fill="#222"/><path d="M392.6 53.6h-2.6v8.4h2.6" fill="none" stroke="#d9464d" stroke-width="0.9"/><path d="M398 53.6h2.6v8.4h-2.6" fill="none" stroke="#8c8c8c" stroke-width="0.9"/><path d="M395.3 52v12" fill="none" stroke="#d9464d" stroke-width="0.7" stroke-dasharray="2.2 0.8"/><path d="M410.2 52.6l8.2 8.4" fill="none" stroke="#d9464d" stroke-width="0.9"/><path d="M408.2 56c3.4-.4 5.6 1.6 5.8 6.2" fill="none" stroke="#8c8c8c" stroke-width="0.8"/><rect x="441.30" y="57.60" width="11.60" height="3.40" fill="#f0a30a"/><rect x="441.30" y="58.80" width="11.60" height="0.70" fill="#c97f00"/><path d="M441.6 54.4v3M452.6 54.4v3M442 55.9h10.2" fill="none" stroke="#666" stroke-width="0.6"/><path d="M478 52.4h9.2v8l-2.6 3h-8.8v-8.6z" fill="#e9e9e9" stroke="#9a9a9a" stroke-width="0.6"/><path d="M475.8 55h9v8.4M484.8 55l2.4-2.6" fill="none" stroke="#b5b5b5" stroke-width="0.5"/><path d="M475 59.2c1-1.8 2.4-2.2 4-2.2v-1.2l2.6 2.2-2.6 2.2v-1.2c-1.6 0-2.8.2-4 .2z" fill="#333"/><rect x="493.00" y="51.60" width="12.00" height="12.00" fill="#4d9fe0"/><path d="M493 63.6v-3.4l3.4-3.6 3 3 2-1.6 3.6 3.2v2.4z" fill="#2f79bb"/><circle cx="501.80" cy="54.80" r="1.10" fill="#fbe9a6"/><rect x="525.00" y="50.00" width="15.90" height="15.60" fill="#0696d7"/><rect x="526.60" y="51.60" width="10.60" height="9.40" fill="none" stroke="#38c17a" stroke-width="0.6" stroke-dasharray="0.9 0.9"/><path d="M534.9 57.2v6.4l1.5-1.3 1 2.2.9-.4-1-2.1h1.9z" fill="#fff"/><rect x="557.20" y="49.00" width="53.00" height="25.00" fill="#cde6f4"/><circle cx="583.80" cy="57.90" r="6.60" fill="#57b811"/><path d="M580.2 57.8l2.6 2.6 4.8-5" fill="none" stroke="#fff" stroke-width="1.6"/><text x="89.90" y="71.74" font-size="5.1" fill="#505050" textLength="14.00" lengthAdjust="spacingAndGlyphs">CREAR</text><path d="M105.50 69.30H107.70L106.60 70.73Z" fill="#222"/><text x="161.90" y="71.74" font-size="5.1" fill="#505050" textLength="22.60" lengthAdjust="spacingAndGlyphs">MODIFICAR</text><path d="M186.00 69.30H188.20L187.10 70.73Z" fill="#222"/><text x="295.30" y="71.74" font-size="5.1" fill="#505050" textLength="32.80" lengthAdjust="spacingAndGlyphs">RESTRICCIONES</text><path d="M329.60 69.30H331.80L330.70 70.73Z" fill="#222"/><text x="430.00" y="71.74" font-size="5.1" fill="#505050" textLength="30.90" lengthAdjust="spacingAndGlyphs">INSPECCIONAR</text><path d="M462.20 69.30H464.40L463.30 70.73Z" fill="#222"/><text x="477.50" y="71.74" font-size="5.1" fill="#505050" textLength="20.20" lengthAdjust="spacingAndGlyphs">INSERTAR</text><path d="M499.20 69.30H501.40L500.30 70.73Z" fill="#222"/><text x="516.00" y="71.74" font-size="5.1" fill="#505050" textLength="29.40" lengthAdjust="spacingAndGlyphs">SELECCIONAR</text><path d="M546.70 69.30H548.90L547.80 70.73Z" fill="#222"/><text x="561.30" y="71.74" font-size="5.1" fill="#505050" textLength="40.00" lengthAdjust="spacingAndGlyphs">TERMINAR BOCETO</text><path d="M602.70 69.30H604.90L603.80 70.73Z" fill="#222"/><line x1="146.50" y1="51.40" x2="146.50" y2="72.20" stroke="#dedede" stroke-width="0.7"/><line x1="204.40" y1="51.40" x2="204.40" y2="72.20" stroke="#dedede" stroke-width="0.7"/><line x1="424.40" y1="51.40" x2="424.40" y2="72.20" stroke="#dedede" stroke-width="0.7"/><line x1="469.40" y1="51.40" x2="469.40" y2="72.20" stroke="#dedede" stroke-width="0.7"/><line x1="509.80" y1="51.40" x2="509.80" y2="72.20" stroke="#dedede" stroke-width="0.7"/><g><rect x="0.00" y="74.00" width="640.00" height="265.50" fill="#ffffff"/><path d="M18.0 74V339.5M28.8 74V339.5M39.6 74V339.5M50.4 74V339.5M72.0 74V339.5M82.8 74V339.5M93.6 74V339.5M104.4 74V339.5M126.0 74V339.5M136.8 74V339.5M147.6 74V339.5M158.4 74V339.5M180.0 74V339.5M190.8 74V339.5M201.6 74V339.5M212.4 74V339.5M234.0 74V339.5M244.8 74V339.5M255.6 74V339.5M266.4 74V339.5M288.0 74V339.5M298.8 74V339.5M309.6 74V339.5M320.4 74V339.5M342.0 74V339.5M352.8 74V339.5M363.6 74V339.5M374.4 74V339.5M396.0 74V339.5M406.8 74V339.5M417.6 74V339.5M428.4 74V339.5M450.0 74V339.5M460.8 74V339.5M471.6 74V339.5M482.4 74V339.5M504.0 74V339.5M514.8 74V339.5M525.6 74V339.5M536.4 74V339.5M558.0 74V339.5M568.8 74V339.5M579.6 74V339.5M590.4 74V339.5M612.0 74V339.5M622.8 74V339.5M633.6 74V339.5M0 322.6H640M0 311.8H640M0 301.0H640M0 290.2H640M0 268.6H640M0 257.8H640M0 247.0H640M0 236.2H640M0 214.6H640M0 203.8H640M0 193.0H640M0 182.2H640M0 160.6H640M0 149.8H640M0 139.0H640M0 128.2H640M0 106.6H640M0 95.8H640M0 85.0H640M0 74.2H640" fill="none" stroke="#f5f5f5" stroke-width="0.9"/><path d="M61.2 74V339.5M115.2 74V339.5M169.2 74V339.5M223.2 74V339.5M277.2 74V339.5M331.2 74V339.5M385.2 74V339.5M439.2 74V339.5M493.2 74V339.5M547.2 74V339.5M601.2 74V339.5M0 279.4H640M0 225.4H640M0 171.4H640M0 117.4H640" fill="none" stroke="#e0e0e0" stroke-width="1.0"/><line x1="7.40" y1="74.00" x2="7.40" y2="339.50" stroke="#a8eca8" stroke-width="1.1"/><line x1="0.00" y1="333.40" x2="640.00" y2="333.40" stroke="#f6b4b4" stroke-width="1.0"/><rect x="1.60" y="75.80" width="125.20" height="9.90" fill="#f1f1f1" stroke="#e2e2e2" stroke-width="0.5"/><path d="M5.6 79.6v2l-1.6-1zM7.6 79.6v2l-1.6-1z" fill="#222"/><text x="12.00" y="82.54" font-size="5.1" fill="#9a9a9a" textLength="27.60" lengthAdjust="spacingAndGlyphs">NAVEGADOR</text><circle cx="119.70" cy="80.80" r="1.70" fill="#222"/><rect x="124.30" y="78.80" width="0.70" height="3.80" fill="#d0d0d0"/><rect x="17.00" y="88.20" width="98.20" height="8.40" fill="#f3f3f3"/><path d="M8.8 94.2h4.6v-4.4z" fill="#555"/><path d="M9.6 93.2l3.4-3.2M10.8 94l2.4-2.2" fill="none" stroke="#ddd" stroke-width="0.4"/><path d="M18.0 92.4q3.2-3.6 6.4 0q-3.2 3.6-6.4 0z" fill="none" stroke="#8a8a8a" stroke-width="0.9"/><circle cx="21.20" cy="92.40" r="1.35" fill="#8a8a8a"/><rect x="27.20" y="89.00" width="77.00" height="6.80" fill="#8c8c8c"/><rect x="29.40" y="89.70" width="4.20" height="5.20" fill="#f4f4f4" stroke="#d0d0d0" stroke-width="0.4" rx="0.6"/><text x="40.60" y="94.30" font-size="5.0" fill="#fff" font-weight="bold" textLength="58.60" lengthAdjust="spacingAndGlyphs">ESTANTE PARA PLATOS v1</text><circle cx="108.90" cy="92.50" r="2.50" fill="#fff" stroke="#555" stroke-width="0.6"/><circle cx="108.90" cy="92.50" r="0.90" fill="#333"/><rect x="24.20" y="98.40" width="75.80" height="7.80" fill="#f2f2f2"/><path d="M16.6 100.2v4.2l1.6 0l2-2.1l-2-2.1z" fill="none" stroke="#555" stroke-width="0.7"/><circle cx="28.60" cy="102.30" r="2.20" fill="none" stroke="#777" stroke-width="1.3"/><circle cx="28.60" cy="102.30" r="3.00" fill="none" stroke="#777" stroke-width="0.9" stroke-dasharray="1 1.36"/><text x="38.00" y="104.30" font-size="5.0" fill="#4a4a4a" textLength="58.20" lengthAdjust="spacingAndGlyphs">Configuración del documento</text><rect x="24.20" y="108.40" width="54.00" height="7.80" fill="#f2f2f2"/><path d="M16.6 110.2v4.2l1.6 0l2-2.1l-2-2.1z" fill="none" stroke="#555" stroke-width="0.7"/><path d="M25.4 114.8v-5h2.4l.7.9h3.3v4.1z" fill="#8a8a8a"/><line x1="28.50" y1="110.70" x2="28.50" y2="114.80" stroke="#a8a8a8" stroke-width="0.4"/><text x="38.00" y="114.30" font-size="5.0" fill="#4a4a4a" textLength="35.60" lengthAdjust="spacingAndGlyphs">Vistas guardadas</text><rect x="24.20" y="118.40" width="40.80" height="7.80" fill="#f2f2f2"/><path d="M16.6 120.2v4.2l1.6 0l2-2.1l-2-2.1z" fill="none" stroke="#555" stroke-width="0.7"/><path d="M25.4 122.3q3.2-3.6 6.4 0q-3.2 3.6-6.4 0z" fill="none" stroke="#c8c8c8" stroke-width="0.9"/><circle cx="28.60" cy="122.30" r="1.35" fill="#c8c8c8"/><path d="M36.0 124.8v-5h2.4l.7.9h3.3v4.1z" fill="#8a8a8a"/><line x1="39.10" y1="120.70" x2="39.10" y2="124.80" stroke="#a8a8a8" stroke-width="0.4"/><text x="48.20" y="124.30" font-size="5.0" fill="#4a4a4a" textLength="13.80" lengthAdjust="spacingAndGlyphs">Origen</text><rect x="24.20" y="128.20" width="44.60" height="7.80" fill="#f2f2f2"/><path d="M16.6 130.0v4.2l1.6 0l2-2.1l-2-2.1z" fill="none" stroke="#555" stroke-width="0.7"/><path d="M25.4 132.1q3.2-3.6 6.4 0q-3.2 3.6-6.4 0z" fill="none" stroke="#777" stroke-width="0.9"/><circle cx="28.60" cy="132.10" r="1.35" fill="#777"/><path d="M36.0 134.6v-5h2.4l.7.9h3.3v4.1z" fill="#8a8a8a"/><line x1="39.10" y1="130.50" x2="39.10" y2="134.60" stroke="#a8a8a8" stroke-width="0.4"/><text x="48.20" y="134.10" font-size="5.0" fill="#4a4a4a" textLength="16.80" lengthAdjust="spacingAndGlyphs">Bocetos</text><line x1="34.40" y1="134.60" x2="68.80" y2="134.60" stroke="#3c6cc8" stroke-width="0.7" stroke-dasharray="0.9 0.9"/><path d="M34.24 306.31L34.24 252.46L21.29 252.46L21.29 198.60L34.24 198.60L34.24 144.75L137.78 144.75L137.78 131.82L241.33 131.82L241.33 144.75L293.10 144.75L344.87 144.75L344.87 131.82L448.42 131.82L448.42 144.75L551.96 144.75L551.96 198.60L564.91 198.60L564.91 252.46L551.96 252.46L551.96 306.31Z" fill="#dceffb" fill-opacity="0.5"/><line x1="305.60" y1="132.02" x2="342.60" y2="132.02" stroke="#8a8a8a" stroke-width="0.8"/><line x1="306.30" y1="131.82" x2="306.30" y2="144.75" stroke="#1c1c1c" stroke-width="0.7"/><path d="M306.30 132.12l-1.25 3.60h2.50z" fill="#111"/><path d="M306.30 144.45l-1.25 -3.60h2.50z" fill="#111"/><text transform="translate(301.60 138.20) rotate(-90)" x="-7.30" y="2.45" font-size="6.8" fill="#555" textLength="14.60" lengthAdjust="spacingAndGlyphs">12.00</text><line x1="407.60" y1="145.05" x2="446.40" y2="145.05" stroke="#8a8a8a" stroke-width="0.8"/><line x1="410.00" y1="131.82" x2="410.00" y2="144.75" stroke="#1c1c1c" stroke-width="0.7"/><path d="M410.00 132.12l-1.25 3.60h2.50z" fill="#111"/><path d="M410.00 144.45l-1.25 -3.60h2.50z" fill="#111"/><text transform="translate(414.30 138.60) rotate(90)" x="-7.30" y="2.45" font-size="6.8" fill="#555" textLength="14.60" lengthAdjust="spacingAndGlyphs">12.00</text><line x1="293.10" y1="146.35" x2="293.10" y2="186.00" stroke="#8a8a8a" stroke-width="0.8"/><line x1="344.87" y1="144.75" x2="344.87" y2="186.00" stroke="#8a8a8a" stroke-width="0.8"/><line x1="293.10" y1="183.80" x2="344.87" y2="183.80" stroke="#1c1c1c" stroke-width="0.7"/><path d="M293.40 183.80l4.20 -1.25v2.50z" fill="#111"/><path d="M344.57 183.80l-4.20 -1.25v2.50z" fill="#111"/><text x="311.00" y="181.25" font-size="6.8" fill="#5a5a5a" textLength="16.00" lengthAdjust="spacingAndGlyphs">48.00</text><line x1="448.42" y1="144.75" x2="448.42" y2="186.00" stroke="#8a8a8a" stroke-width="0.8"/><line x1="344.87" y1="170.60" x2="448.42" y2="170.60" stroke="#1c1c1c" stroke-width="0.7"/><path d="M345.17 170.60l4.20 -1.25v2.50z" fill="#111"/><path d="M448.12 170.60l-4.20 -1.25v2.50z" fill="#111"/><text x="388.90" y="168.45" font-size="6.8" fill="#5a5a5a" textLength="16.00" lengthAdjust="spacingAndGlyphs">96.00</text><line x1="448.42" y1="183.80" x2="551.96" y2="183.80" stroke="#1c1c1c" stroke-width="0.7"/><path d="M448.72 183.80l4.20 -1.25v2.50z" fill="#111"/><path d="M551.66 183.80l-4.20 -1.25v2.50z" fill="#111"/><text x="492.40" y="181.25" font-size="6.8" fill="#5a5a5a" textLength="16.00" lengthAdjust="spacingAndGlyphs">96.00</text><line x1="512.90" y1="144.75" x2="512.90" y2="198.60" stroke="#1c1c1c" stroke-width="0.7"/><path d="M512.90 145.05l-1.25 4.20h2.50z" fill="#111"/><path d="M512.90 198.30l-1.25 -4.20h2.50z" fill="#111"/><text transform="translate(518.00 171.80) rotate(90)" x="-7.80" y="2.45" font-size="6.8" fill="#555" textLength="15.60" lengthAdjust="spacingAndGlyphs">50.00</text><line x1="526.30" y1="198.60" x2="526.30" y2="252.46" stroke="#1c1c1c" stroke-width="0.7"/><path d="M526.30 198.91l-1.25 4.20h2.50z" fill="#111"/><path d="M526.30 252.16l-1.25 -4.20h2.50z" fill="#111"/><text transform="translate(531.50 225.80) rotate(90)" x="-7.80" y="2.45" font-size="6.8" fill="#555" textLength="15.60" lengthAdjust="spacingAndGlyphs">50.00</text><line x1="512.90" y1="252.46" x2="512.90" y2="306.31" stroke="#1c1c1c" stroke-width="0.7"/><path d="M512.90 252.76l-1.25 4.20h2.50z" fill="#111"/><path d="M512.90 306.01l-1.25 -4.20h2.50z" fill="#111"/><text transform="translate(518.00 280.20) rotate(90)" x="-7.80" y="2.45" font-size="6.8" fill="#555" textLength="15.60" lengthAdjust="spacingAndGlyphs">50.00</text><line x1="510.40" y1="198.60" x2="551.96" y2="198.60" stroke="#333" stroke-width="0.8"/><line x1="510.40" y1="252.46" x2="551.96" y2="252.46" stroke="#333" stroke-width="0.8"/><line x1="551.66" y1="201.00" x2="551.66" y2="249.40" stroke="#858585" stroke-width="1.6"/><text x="551.00" y="211.65" font-size="6.8" fill="#5a5a5a" textLength="15.40" lengthAdjust="spacingAndGlyphs">12.00</text><line x1="551.96" y1="213.90" x2="564.91" y2="213.90" stroke="#1c1c1c" stroke-width="0.7"/><path d="M552.26 213.90l3.40 -1.25v2.50z" fill="#111"/><path d="M564.61 213.90l-3.40 -1.25v2.50z" fill="#111"/><text x="551.00" y="235.05" font-size="6.8" fill="#5a5a5a" textLength="15.40" lengthAdjust="spacingAndGlyphs">12.00</text><line x1="551.96" y1="237.30" x2="564.91" y2="237.30" stroke="#1c1c1c" stroke-width="0.7"/><path d="M552.26 237.30l3.40 -1.25v2.50z" fill="#111"/><path d="M564.61 237.30l-3.40 -1.25v2.50z" fill="#111"/><line x1="34.24" y1="295.20" x2="34.24" y2="306.31" stroke="#777" stroke-width="0.9"/><line x1="34.24" y1="298.00" x2="551.96" y2="298.00" stroke="#969696" stroke-width="1.9"/><path d="M34.54 298.10l4.60 -1.40v2.80z" fill="#111"/><path d="M551.66 298.10l-4.60 -1.40v2.80z" fill="#111"/><text x="279.80" y="295.85" font-size="6.8" fill="#5a5a5a" textLength="19.20" lengthAdjust="spacingAndGlyphs">480.00</text><path d="M293.10 144.75L241.33 144.75L241.33 131.82L137.78 131.82L137.78 144.75L34.24 144.75L34.24 198.60L21.29 198.60L21.29 252.46L34.24 252.46L34.24 306.31" fill="none" stroke="#88c8ec" stroke-width="1.5"/><line x1="34.24" y1="306.31" x2="551.96" y2="306.31" stroke="#88c8ec" stroke-width="1.3"/><path d="M293.10 144.75L344.87 144.75L344.87 131.82L448.42 131.82L448.42 144.75L551.96 144.75L551.96 198.60L564.91 198.60L564.91 252.46L551.96 252.46L551.96 306.31" fill="none" stroke="#88c8ec" stroke-width="1.5"/><g transform="translate(342.02 141.90) rotate(135.0)"><path d="M-2.4 0h4.8M0 0v6.8" fill="none" stroke="#a2a2a2" stroke-width="1.2"/></g><g transform="translate(347.72 134.67) rotate(-45.0)"><path d="M-2.4 0h4.8M0 0v6.8" fill="none" stroke="#a2a2a2" stroke-width="1.2"/></g><g transform="translate(445.57 134.67) rotate(45.0)"><path d="M-2.4 0h4.8M0 0v6.8" fill="none" stroke="#a2a2a2" stroke-width="1.2"/></g><g transform="translate(451.27 141.90) rotate(-135.0)"><path d="M-2.4 0h4.8M0 0v6.8" fill="none" stroke="#a2a2a2" stroke-width="1.2"/></g><g transform="translate(549.11 147.60) rotate(45.0)"><path d="M-2.4 0h4.8M0 0v6.8" fill="none" stroke="#a2a2a2" stroke-width="1.2"/></g><g transform="translate(554.81 195.75) rotate(-135.0)"><path d="M-2.4 0h4.8M0 0v6.8" fill="none" stroke="#a2a2a2" stroke-width="1.2"/></g><g transform="translate(562.06 201.45) rotate(45.0)"><path d="M-2.4 0h4.8M0 0v6.8" fill="none" stroke="#a2a2a2" stroke-width="1.2"/></g><g transform="translate(562.06 249.61) rotate(135.0)"><path d="M-2.4 0h4.8M0 0v6.8" fill="none" stroke="#a2a2a2" stroke-width="1.2"/></g><g transform="translate(554.81 255.31) rotate(-45.0)"><path d="M-2.4 0h4.8M0 0v6.8" fill="none" stroke="#a2a2a2" stroke-width="1.2"/></g><g transform="translate(549.11 303.46) rotate(135.0)"><path d="M-2.4 0h4.8M0 0v6.8" fill="none" stroke="#a2a2a2" stroke-width="1.2"/></g><path d="M288.2 299.4l-3.1 5.3h6.2z" fill="none" stroke="#a8a8a8" stroke-width="1.3"/><g transform="translate(295.95 303.46) rotate(-135.0)"><path d="M-2.4 0h4.8M0 0v6.8" fill="none" stroke="#a2a2a2" stroke-width="1.2"/></g><rect x="288.40" y="308.80" width="9.00" height="3.40" fill="#a9a9a9" rx="0.9"/><line x1="289.40" y1="310.50" x2="296.40" y2="310.50" stroke="#e4e4e4" stroke-width="0.6"/><line x1="293.10" y1="245.00" x2="293.10" y2="306.31" stroke="#9fc3f2" stroke-width="1.3"/><line x1="293.10" y1="245.00" x2="293.10" y2="306.31" stroke="#3f87e8" stroke-width="1.4" stroke-dasharray="3.9 1.2"/><circle cx="34.24" cy="306.51" r="1.50" fill="#fff" stroke="#8a8a8a" stroke-width="0.6"/><circle cx="293.10" cy="243.90" r="1.50" fill="#fff" stroke="#8a8a8a" stroke-width="0.6"/><rect x="606.50" y="88.30" width="19.20" height="19.20" fill="#ececee" stroke="#d4d4d8" stroke-width="0.7"/><rect x="610.00" y="91.80" width="12.50" height="12.40" fill="#e2e5ec"/><text x="608.30" y="99.57" font-size="3.8" fill="#a2a2aa" textLength="15.90" lengthAdjust="spacingAndGlyphs">SUPERIOR</text><rect x="606.70" y="83.40" width="2.10" height="4.90" fill="#a8f0a8"/><path d="M604.2 107.4h1.8l-1.8 2.2h1.8" fill="none" stroke="#4a4aff" stroke-width="0.6"/><path d="M627.6 105.2l1.8 2.4M629.4 105.2l-1.8 2.4" fill="none" stroke="#ff6a6a" stroke-width="0.6"/><rect x="629.50" y="121.00" width="8.60" height="78.00" fill="#f0f0f0"/><path d="M632.4 125.6l1.3-.8v1.6zM634 125.6l1.3-.8v1.6z" fill="#222"/><text transform="translate(635.4 195.6) rotate(-90)" font-size="5.0" fill="#555" textLength="41.5" lengthAdjust="spacingAndGlyphs">PALETA DE BOCETO</text><rect x="341.47" y="136.25" width="7.00" height="5.80" fill="#e4e4e4" stroke="#a0a0a0" stroke-width="1.3" rx="0.9"/><line x1="344.97" y1="135.25" x2="344.97" y2="143.05" stroke="#9c9c9c" stroke-width="1.2"/><rect x="237.93" y="136.25" width="7.00" height="5.80" fill="#e4e4e4" stroke="#a0a0a0" stroke-width="1.3" rx="0.9"/><line x1="241.43" y1="135.25" x2="241.43" y2="143.05" stroke="#9c9c9c" stroke-width="1.2"/><rect x="341.47" y="123.32" width="7.00" height="5.80" fill="#e4e4e4" stroke="#a0a0a0" stroke-width="1.3" rx="0.9"/><line x1="344.97" y1="122.32" x2="344.97" y2="130.12" stroke="#9c9c9c" stroke-width="1.2"/><rect x="237.93" y="123.32" width="7.00" height="5.80" fill="#e4e4e4" stroke="#a0a0a0" stroke-width="1.3" rx="0.9"/><line x1="241.43" y1="122.32" x2="241.43" y2="130.12" stroke="#9c9c9c" stroke-width="1.2"/><rect x="445.02" y="123.32" width="7.00" height="5.80" fill="#e4e4e4" stroke="#a0a0a0" stroke-width="1.3" rx="0.9"/><line x1="448.52" y1="122.32" x2="448.52" y2="130.12" stroke="#9c9c9c" stroke-width="1.2"/><rect x="134.38" y="123.32" width="7.00" height="5.80" fill="#e4e4e4" stroke="#a0a0a0" stroke-width="1.3" rx="0.9"/><line x1="137.88" y1="122.32" x2="137.88" y2="130.12" stroke="#9c9c9c" stroke-width="1.2"/><rect x="445.02" y="136.25" width="7.00" height="5.80" fill="#e4e4e4" stroke="#a0a0a0" stroke-width="1.3" rx="0.9"/><line x1="448.52" y1="135.25" x2="448.52" y2="143.05" stroke="#9c9c9c" stroke-width="1.2"/><rect x="134.38" y="136.25" width="7.00" height="5.80" fill="#e4e4e4" stroke="#a0a0a0" stroke-width="1.3" rx="0.9"/><line x1="137.88" y1="135.25" x2="137.88" y2="143.05" stroke="#9c9c9c" stroke-width="1.2"/><rect x="548.56" y="136.25" width="7.00" height="5.80" fill="#e4e4e4" stroke="#a0a0a0" stroke-width="1.3" rx="0.9"/><line x1="552.06" y1="135.25" x2="552.06" y2="143.05" stroke="#9c9c9c" stroke-width="1.2"/><rect x="30.84" y="136.25" width="7.00" height="5.80" fill="#e4e4e4" stroke="#a0a0a0" stroke-width="1.3" rx="0.9"/><line x1="34.34" y1="135.25" x2="34.34" y2="143.05" stroke="#9c9c9c" stroke-width="1.2"/><rect x="548.56" y="190.10" width="7.00" height="5.80" fill="#e4e4e4" stroke="#a0a0a0" stroke-width="1.3" rx="0.9"/><line x1="552.06" y1="189.10" x2="552.06" y2="196.91" stroke="#9c9c9c" stroke-width="1.2"/><rect x="30.84" y="190.10" width="7.00" height="5.80" fill="#e4e4e4" stroke="#a0a0a0" stroke-width="1.3" rx="0.9"/><line x1="34.34" y1="189.10" x2="34.34" y2="196.91" stroke="#9c9c9c" stroke-width="1.2"/><rect x="561.51" y="190.10" width="7.00" height="5.80" fill="#e4e4e4" stroke="#a0a0a0" stroke-width="1.3" rx="0.9"/><line x1="565.01" y1="189.10" x2="565.01" y2="196.91" stroke="#9c9c9c" stroke-width="1.2"/><rect x="17.89" y="190.10" width="7.00" height="5.80" fill="#e4e4e4" stroke="#a0a0a0" stroke-width="1.3" rx="0.9"/><line x1="21.39" y1="189.10" x2="21.39" y2="196.91" stroke="#9c9c9c" stroke-width="1.2"/><rect x="561.51" y="243.96" width="7.00" height="5.80" fill="#e4e4e4" stroke="#a0a0a0" stroke-width="1.3" rx="0.9"/><line x1="565.01" y1="242.96" x2="565.01" y2="250.76" stroke="#9c9c9c" stroke-width="1.2"/><rect x="17.89" y="243.96" width="7.00" height="5.80" fill="#e4e4e4" stroke="#a0a0a0" stroke-width="1.3" rx="0.9"/><line x1="21.39" y1="242.96" x2="21.39" y2="250.76" stroke="#9c9c9c" stroke-width="1.2"/><rect x="548.56" y="243.96" width="7.00" height="5.80" fill="#e4e4e4" stroke="#a0a0a0" stroke-width="1.3" rx="0.9"/><line x1="552.06" y1="242.96" x2="552.06" y2="250.76" stroke="#9c9c9c" stroke-width="1.2"/><rect x="30.84" y="243.96" width="7.00" height="5.80" fill="#e4e4e4" stroke="#a0a0a0" stroke-width="1.3" rx="0.9"/><line x1="34.34" y1="242.96" x2="34.34" y2="250.76" stroke="#9c9c9c" stroke-width="1.2"/><rect x="548.56" y="297.81" width="7.00" height="5.80" fill="#e4e4e4" stroke="#a0a0a0" stroke-width="1.3" rx="0.9"/><line x1="552.06" y1="296.81" x2="552.06" y2="304.61" stroke="#9c9c9c" stroke-width="1.2"/><rect x="30.84" y="297.81" width="7.00" height="5.80" fill="#e4e4e4" stroke="#a0a0a0" stroke-width="1.3" rx="0.9"/><line x1="34.34" y1="296.81" x2="34.34" y2="304.61" stroke="#9c9c9c" stroke-width="1.2"/><path d="M292.5 258.7L272.22 209.73A53.0 53.0 0 0 0 243.53 238.42Z" fill="#a7bde2" opacity="0.92"/><line x1="284.60" y1="253.40" x2="292.50" y2="258.70" stroke="#8a8a8a" stroke-width="0.6"/><rect x="253.30" y="127.80" width="84.00" height="101.40" fill="#000" opacity="0.10"/><rect x="252.50" y="127.00" width="83.80" height="101.30" fill="#ffffff" stroke="#dcdcdc" stroke-width="0.6" rx="0.8"/><text x="263.80" y="132.50" font-size="5.0" fill="#505050" textLength="56.20" lengthAdjust="spacingAndGlyphs">Crear conjunto de selección</text><text x="263.80" y="139.60" font-size="5.0" fill="#505050" textLength="12.90" lengthAdjust="spacingAndGlyphs">Extruir</text><text x="263.80" y="148.80" font-size="5.0" fill="#505050" textLength="30.40" lengthAdjust="spacingAndGlyphs">Cota de boceto</text><text x="263.80" y="155.80" font-size="5.0" fill="#505050" textLength="41.70" lengthAdjust="spacingAndGlyphs">Normal/Construcción</text><text x="263.80" y="163.00" font-size="5.0" fill="#505050" textLength="46.20" lengthAdjust="spacingAndGlyphs">Normal/Línea de centro</text><text x="263.80" y="169.80" font-size="5.0" fill="#505050" textLength="30.70" lengthAdjust="spacingAndGlyphs">Texto en la ruta</text><text x="263.80" y="178.80" font-size="5.0" fill="#505050" textLength="37.40" lengthAdjust="spacingAndGlyphs">Fijar/anular fijación</text><text x="263.80" y="186.00" font-size="5.0" fill="#505050" textLength="36.20" lengthAdjust="spacingAndGlyphs">Horizontal/Vertical</text><text x="263.80" y="193.00" font-size="5.0" fill="#505050" textLength="40.00" lengthAdjust="spacingAndGlyphs">Suprimir coincidente</text><text x="263.80" y="202.10" font-size="5.0" fill="#505050" textLength="12.90" lengthAdjust="spacingAndGlyphs">Copiar</text><text x="263.80" y="211.50" font-size="5.0" fill="#505050" textLength="43.70" lengthAdjust="spacingAndGlyphs">Buscar en navegador</text><text x="263.80" y="218.50" font-size="5.0" fill="#505050" textLength="42.90" lengthAdjust="spacingAndGlyphs">Buscar en la ventana</text><text x="263.80" y="225.50" font-size="5.0" fill="#505050" textLength="65.90" lengthAdjust="spacingAndGlyphs">Buscar en la secuencia temporal</text><line x1="253.50" y1="142.30" x2="335.50" y2="142.30" stroke="#e2e2e2" stroke-width="0.7"/><line x1="253.50" y1="172.50" x2="335.50" y2="172.50" stroke="#e2e2e2" stroke-width="0.7"/><line x1="253.50" y1="196.20" x2="335.50" y2="196.20" stroke="#e2e2e2" stroke-width="0.7"/><line x1="253.50" y1="205.00" x2="335.50" y2="205.00" stroke="#e2e2e2" stroke-width="0.7"/><text x="332.20" y="148.51" font-size="4.2" fill="#c0c0c0">d</text><text x="332.20" y="155.51" font-size="4.2" fill="#c0c0c0">x</text><text x="322.50" y="201.81" font-size="4.2" fill="#c0c0c0" textLength="12.20" lengthAdjust="spacingAndGlyphs">Ctrl+C</text><rect x="254.70" y="129.00" width="5.00" height="4.20" fill="#5fae4a" rx="0.5"/><rect x="255.90" y="130.60" width="3.80" height="2.60" fill="#3f8f38"/><circle cx="259.90" cy="129.00" r="1.00" fill="#f0882c"/><rect x="254.90" y="135.60" width="4.20" height="4.60" fill="#f29b4e"/><path d="M259.9 135.2v5" fill="none" stroke="#666" stroke-width="0.5"/><path d="M254.7 144.6v5M260.3 144.6v5" fill="none" stroke="#666" stroke-width="0.5"/><path d="M254.7 146.4h5.6" fill="none" stroke="#3a9fe6" stroke-width="0.7"/><path d="M259.9 151.8l-4.6 2.3 4.6 2.3" fill="none" stroke="#f0a45c" stroke-width="0.6"/><path d="M255.1 159.6q2.6-1 5 0v3.4q-2.4 1-5 0z" fill="none" stroke="#f0a45c" stroke-width="0.6"/><text x="257.50" y="170.66" font-size="7.4" fill="#222" font-weight="bold" text-anchor="middle">A</text><path d="M256.2 176v-.8a1.3 1.3 0 0 1 2.6 0v.8" fill="none" stroke="#d9464d" stroke-width="0.6"/><rect x="255.30" y="176.20" width="4.40" height="3.20" fill="#df6a70" rx="0.4"/><rect x="257.00" y="181.60" width="1.00" height="3.40" fill="#d9464d"/><path d="M255.5 186.6h4" fill="none" stroke="#d9464d" stroke-width="0.7"/><path d="M255.9 189.4l3.4 3.4M259.3 189.4l-3.4 3.4" fill="none" stroke="#d81f26" stroke-width="1.1"/><path d="M254.3 188.4v6" fill="none" stroke="#888" stroke-width="0.4" stroke-dasharray="0.7 0.7"/><rect x="270.10" y="233.30" width="50.00" height="8.00" fill="#000" rx="1.0" opacity="0.08"/><rect x="269.60" y="232.60" width="50.00" height="8.00" fill="#f0f0f0" stroke="#cfcfcf" stroke-width="0.5" rx="1.0"/><path d="M276.4 234.4l-2.2 4.4h2.2z" fill="none" stroke="#777" stroke-width="0.5"/><path d="M276.8 234.4l2.2 4.4h-2.2z" fill="#9cd0f2" stroke="#3a9fe6" stroke-width="0.5"/><text x="284.20" y="238.50" font-size="5.0" fill="#4a4a4a" textLength="31.20" lengthAdjust="spacingAndGlyphs">Repetir Simetría</text><rect x="251.60" y="245.50" width="33.50" height="9.00" fill="#000" rx="1.0" opacity="0.08"/><rect x="251.10" y="244.80" width="33.50" height="9.00" fill="#0696d7" stroke="#0580b9" stroke-width="0.5" rx="1.0"/><text x="255.00" y="251.20" font-size="5.0" fill="#bfe2f5" textLength="16.25" lengthAdjust="spacingAndGlyphs">Suprimir</text><path d="M275.6 247.6l3.4 3.4M279 247.6l-3.4 3.4" fill="none" stroke="#ff3030" stroke-width="1.0"/><rect x="305.10" y="245.50" width="41.40" height="9.20" fill="#000" rx="1.0" opacity="0.08"/><rect x="304.60" y="244.80" width="41.40" height="9.20" fill="#f0f0f0" stroke="#cfcfcf" stroke-width="0.5" rx="1.0"/><rect x="308.40" y="246.60" width="1.60" height="5.40" fill="#b9b9b9"/><rect x="310.00" y="247.20" width="2.60" height="4.20" fill="#3f9be3"/><path d="M312.6 247.8l1.8 1.5-1.8 1.5z" fill="#3f9be3"/><text x="318.90" y="251.30" font-size="5.0" fill="#4a4a4a" textLength="23.20" lengthAdjust="spacingAndGlyphs">Pulsar/Tirar</text><rect x="239.10" y="257.60" width="37.20" height="8.30" fill="#000" rx="1.0" opacity="0.08"/><rect x="238.60" y="256.90" width="37.20" height="8.30" fill="#f0f0f0" stroke="#cfcfcf" stroke-width="0.5" rx="1.0"/><text x="242.80" y="262.90" font-size="5.0" fill="#4a4a4a" textLength="19.60" lengthAdjust="spacingAndGlyphs">Deshacer</text><path d="M266.8 260.6l2-1.8v1.1c2.2 0 3.2 1.4 3 3.6c-.5-1.5-1.4-2-3-2v1z" fill="#444"/><rect x="313.80" y="257.70" width="32.70" height="8.20" fill="#000" rx="1.0" opacity="0.08"/><rect x="313.30" y="257.00" width="32.70" height="8.20" fill="#f3f3f3" stroke="#e2e2e2" stroke-width="0.5" rx="1.0"/><path d="M322.6 260.6l-2-1.8v1.1c-2.2 0-3.2 1.4-3 3.6c.5-1.5 1.4-2 3-2v1z" fill="#c4c4c4"/><text x="326.25" y="263.00" font-size="5.0" fill="#c6c6c6" textLength="17.00" lengthAdjust="spacingAndGlyphs">Rehacer</text><rect x="239.10" y="269.10" width="45.80" height="8.70" fill="#000" rx="1.0" opacity="0.08"/><rect x="238.60" y="268.40" width="45.80" height="8.70" fill="#f0f0f0" stroke="#cfcfcf" stroke-width="0.5" rx="1.0"/><text x="243.60" y="274.60" font-size="5.0" fill="#4a4a4a" textLength="26.40" lengthAdjust="spacingAndGlyphs">Mover/copiar</text><path d="M277.2 270.2v5.2M274.6 272.8h5.2" fill="none" stroke="#333" stroke-width="0.6"/><path d="M277.2 269.6l-.9 1.1h1.8zM277.2 276l-.9-1.1h1.8zM274 272.8l1.1-.9v1.8zM280.4 272.8l-1.1-.9v1.8z" fill="#333"/><rect x="305.10" y="269.10" width="33.00" height="8.70" fill="#000" rx="1.0" opacity="0.08"/><rect x="304.60" y="268.40" width="33.00" height="8.70" fill="#f0f0f0" stroke="#cfcfcf" stroke-width="0.5" rx="1.0"/><rect x="308.60" y="270.00" width="5.40" height="5.40" fill="#e8e8e8" stroke="#555" stroke-width="0.5"/><circle cx="311.60" cy="273.00" r="1.50" fill="#5a9be0" stroke="#444" stroke-width="0.4"/><text x="318.50" y="274.60" font-size="5.0" fill="#4a4a4a" textLength="15.70" lengthAdjust="spacingAndGlyphs">Agujero</text><rect x="290.60" y="277.40" width="5.00" height="4.40" fill="#f4f4f4" stroke="#999" stroke-width="0.5" rx="1.0"/><rect x="290.60" y="291.00" width="5.20" height="7.00" fill="#4c4c4c" rx="0.8"/><rect x="280.80" y="282.30" width="28.90" height="8.30" fill="#000" rx="1.0" opacity="0.08"/><rect x="280.30" y="281.60" width="28.90" height="8.30" fill="#f0f0f0" stroke="#cfcfcf" stroke-width="0.5" rx="1.0"/><text x="284.90" y="287.60" font-size="5.0" fill="#4a4a4a" textLength="13.90" lengthAdjust="spacingAndGlyphs">Boceto</text><path d="M303.20 285.13H306.00L304.60 286.95Z" fill="#222"/><rect x="270.20" y="327.90" width="98.80" height="9.60" fill="#f0f0f0"/><path d="M274.7 329.59999999999997v6.2M271.6 332.7h6.2" fill="none" stroke="#4a4a4a" stroke-width="0.9"/><circle cx="274.70" cy="332.70" r="1.70" fill="none" stroke="#4a4a4a" stroke-width="0.7"/><path d="M280.50 332.15H282.50L281.50 333.45Z" fill="#222"/><rect x="285.30" y="331.10" width="6.40" height="4.40" fill="#8c8f99" rx="0.5"/><path d="M286.2 331.09999999999997l1.2-1.6h2.2l1.2 1.6" fill="none" stroke="#666" stroke-width="0.6"/><rect x="286.60" y="332.30" width="3.80" height="1.60" fill="#c9ccd4"/><path d="M297.2 335.7c-1.2-1.4-1.6-2.6-1.2-3.4l1 .6v-2.6h.9v-.7h1v.3h1v.5h1v3.4c0 .9-.4 1.5-.7 1.9z" fill="#fafafa" stroke="#4a4a4a" stroke-width="0.6"/><circle cx="309.30" cy="332.10" r="2.00" fill="#e2edf7" stroke="#4a4a4a" stroke-width="0.7"/><path d="M310.8 333.59999999999997l1.8 1.9" fill="none" stroke="#222" stroke-width="1.0"/><path d="M312.6 329.9v1.8" fill="none" stroke="#4a4a4a" stroke-width="0.5"/><circle cx="320.40" cy="332.10" r="2.60" fill="#e6f0f8" stroke="#777" stroke-width="0.7"/><path d="M322.2 333.9l2.2 2.2" fill="none" stroke="#222" stroke-width="1.1"/><path d="M326.70 332.15H328.70L327.70 333.45Z" fill="#222"/><rect x="331.60" y="329.60" width="6.80" height="5.00" fill="#5b8fd4" stroke="#667" stroke-width="0.6" rx="0.4"/><path d="M333.6 334.7h2.8l.6 1.3h-4z" fill="#777"/><path d="M339.40 332.15H341.40L340.40 333.45Z" fill="#222"/><rect x="344.30" y="329.60" width="6.60" height="6.30" fill="#96989e" stroke="#7a7c82" stroke-width="0.4"/><path d="M352.30 332.15H354.30L353.30 333.45Z" fill="#222"/><rect x="357.20" y="329.90" width="6.60" height="5.40" fill="#4f7fc6" rx="0.3"/><path d="M357.2 332.59999999999997h6.6M359.4 329.9v5.4M361.6 329.9v5.4" fill="none" stroke="#cfdcf0" stroke-width="0.4"/><path d="M365.00 332.15H367.00L366.00 333.45Z" fill="#222"/><text x="541.10" y="334.26" font-size="4.6" fill="#222" font-weight="bold" textLength="92.50" lengthAdjust="spacingAndGlyphs">1 Línea de boceto | Longitud : 57.797 mm</text><rect x="2.00" y="327.00" width="125.00" height="9.40" fill="#f1f1f1" stroke="#e4e4e4" stroke-width="0.4"/><rect x="2.00" y="336.20" width="125.00" height="1.20" fill="#2a2a2a"/><text x="12.00" y="333.33" font-size="4.8" fill="#8a8a8a" textLength="30.20" lengthAdjust="spacingAndGlyphs">COMENTARIOS</text><circle cx="119.70" cy="331.60" r="1.70" fill="#222"/><rect x="124.30" y="329.70" width="0.70" height="3.80" fill="#d0d0d0"/><rect x="0.00" y="339.40" width="640.00" height="20.70" fill="#f0f0f0"/><line x1="0.00" y1="339.40" x2="640.00" y2="339.40" stroke="#dcdcdc" stroke-width="0.7"/><path d="M4.6 347.4v5.2" fill="none" stroke="#2a2a2a" stroke-width="1.0"/><path d="M9.6 347.4v5.2l-4.2-2.6z" fill="#2a2a2a"/><path d="M19.4 347.6v4.8l-4-2.4zM15.6 349.1h-1.4v1.8h1.4z" fill="#2a2a2a"/><path d="M25.6 347.0v6l4.6-3z" fill="#2a2a2a"/><path d="M36.2 347.6v4.8l4-2.4zM40 349.1h1.4v1.8h-1.4z" fill="#2a2a2a"/><path d="M46.2 347.4v5.2l4.2-2.6z" fill="#2a2a2a"/><path d="M51.2 347.4v5.2" fill="none" stroke="#2a2a2a" stroke-width="1.0"/><rect x="42.60" y="0.00" width="0.00" height="0.00" fill="none"/><rect x="61.20" y="345.80" width="5.80" height="6.60" fill="#f6f6f6" stroke="#8fb6e0" stroke-width="0.6"/><path d="M63.4 351l3.6-3.6" fill="none" stroke="#f0b13c" stroke-width="0.9"/><path d="M66.2 344.2h5.6l-2 2.2v10.4h-1.6v-10.4z" fill="#666"/><circle cx="631.00" cy="350.00" r="2.30" fill="none" stroke="#777" stroke-width="1.2"/><circle cx="631.00" cy="350.00" r="3.10" fill="none" stroke="#777" stroke-width="0.9" stroke-dasharray="1 1.43"/></g></g><path d="M619.10 151.40L611.20 155.10L611.20 147.70Z" fill="#000"/><path d="M496.00 213.80L503.90 210.10L503.90 217.50Z" fill="#000"/><path d="M611.20 151.40L557.40 151.40L557.40 213.80L503.90 213.80" fill="none" stroke="#000" stroke-width="1.5" stroke-linejoin="miter"/><text x="479.00" y="220.92" font-size="20.6" fill="#000" text-anchor="middle">5</text><path d="M733.20 182.80L741.10 179.10L741.10 186.50Z" fill="#000"/><path d="M827.20 114.40L819.30 118.10L819.30 110.70Z" fill="#000"/><path d="M741.10 182.80L780.10 182.80L780.10 114.40L819.30 114.40" fill="none" stroke="#000" stroke-width="1.5" stroke-linejoin="miter"/><text x="842.20" y="120.82" font-size="20.6" fill="#000" text-anchor="middle">6</text><path d="M109.40 405.80L113.10 413.70L105.70 413.70Z" fill="#000"/><path d="M147.70 515.00L144.00 507.10L151.40 507.10Z" fill="#000"/><path d="M109.40 413.70L109.40 460.40L147.70 460.40L147.70 507.10" fill="none" stroke="#000" stroke-width="1.5" stroke-linejoin="miter"/><text x="147.10" y="539.32" font-size="20.6" fill="#000" text-anchor="middle">7</text><path d="M566.30 507.20L558.40 510.90L558.40 503.50Z" fill="#000"/><path d="M431.30 590.80L439.20 587.10L439.20 594.50Z" fill="#000"/><path d="M558.40 507.20L498.30 507.20L498.30 590.80L439.20 590.80" fill="none" stroke="#000" stroke-width="1.5" stroke-linejoin="miter"/><text x="414.10" y="597.02" font-size="20.6" fill="#000" text-anchor="middle">8</text><path d="M802.90 548.50L810.80 544.80L810.80 552.20Z" fill="#000"/><path d="M892.50 590.40L884.60 594.10L884.60 586.70Z" fill="#000"/><path d="M810.80 548.50L847.50 548.50L847.50 590.40L884.60 590.40" fill="none" stroke="#000" stroke-width="1.5" stroke-linejoin="miter"/><text x="791.90" y="557.92" font-size="20.6" fill="#000" text-anchor="middle">9</text></g>
</svg>
</body></html>
